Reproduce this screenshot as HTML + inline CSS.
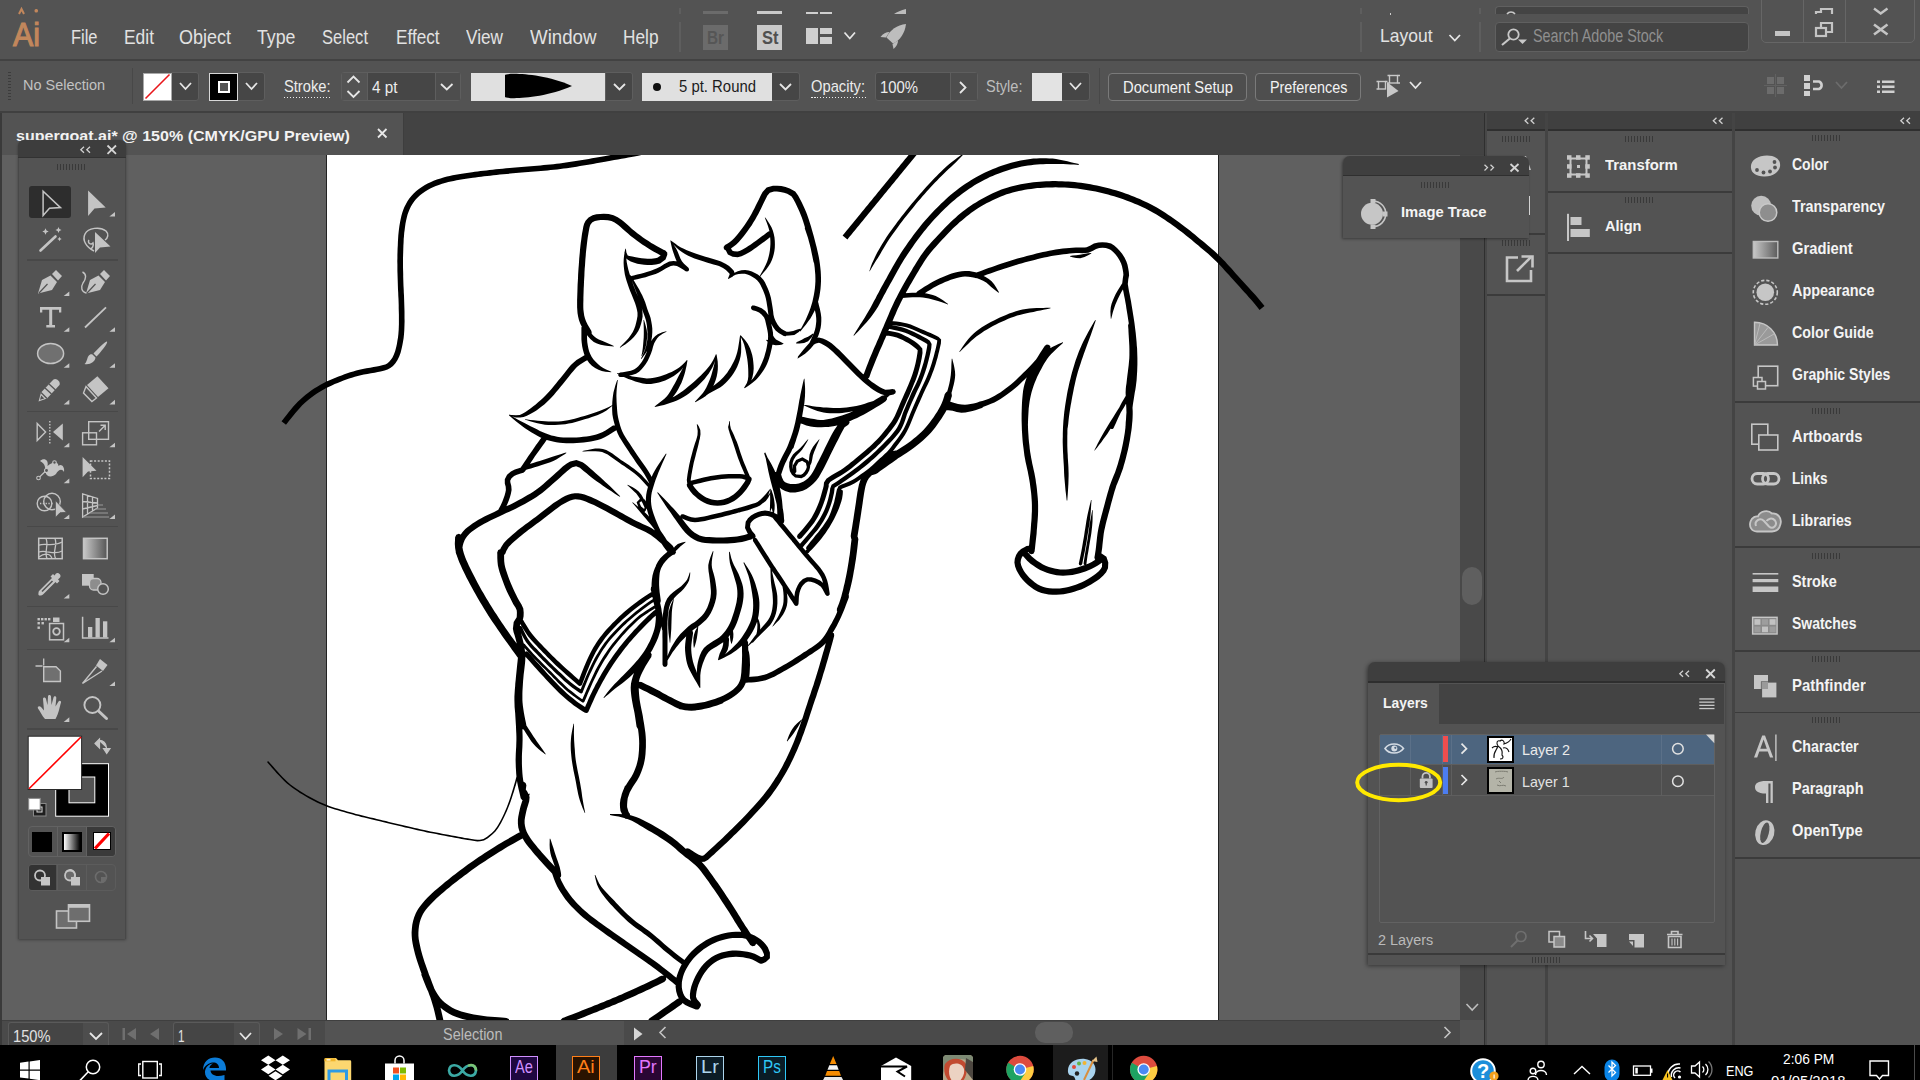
<!DOCTYPE html>
<html>
<head>
<meta charset="utf-8">
<title>supergoat.ai</title>
<style>
*{box-sizing:border-box;margin:0;padding:0}
html,body{width:1920px;height:1080px;overflow:hidden;background:#535353;font-family:"Liberation Sans",sans-serif;color:#dcdcdc}
.a{position:absolute}
#root{position:relative;width:1920px;height:1080px;overflow:hidden;background:#535353}
.t{position:absolute;white-space:nowrap;line-height:1}
.menu .t{font-size:18.5px;top:28px;color:#e0e0e0}
.ctl .t{font-size:15.5px;color:#dedede}
.fld{position:absolute;background:#464646;border:1px solid #616161;border-radius:3px}
.btn{position:absolute;border:1px solid #767676;border-radius:4px;background:#4b4b4b;font-size:15.5px;color:#f0f0f0;text-align:center;line-height:26px}
svg{position:absolute;overflow:visible}
.grip{position:absolute;height:6px;width:29px;background:repeating-linear-gradient(90deg,#3a3a3a 0 1px,transparent 1px 3px)}
.pl{position:absolute;font-weight:bold;font-size:15px;color:#f2f2f2;white-space:nowrap;line-height:1}
</style>
</head>
<body>
<div id="root">

<!-- ===== MENU BAR ===== -->
<div class="a menu" id="menubar" style="left:0;top:0;width:1920px;height:61px;background:#535353;border-bottom:2px solid #424242">
<span class="t" style="left:13.0px;top:17.9px;font-size:33.19px;color:#c2875c;transform:scaleX(0.915);transform-origin:0 0;-webkit-text-stroke:1.1px #c2875c;">Ai</span>
<svg style="left:0;top:0" width="1" height="1"><path d="M19 14 L21.5 9 L24 14" fill="none" stroke="#c2875c" stroke-width="2"/><rect x="34.5" y="9" width="3.5" height="3.5" rx="1.5" fill="#c2875c"/></svg>
<span class="t" style="left:71.0px;top:27.8px;font-size:19.77px;color:#e2e2e2;transform:scaleX(0.832);transform-origin:0 0;">File</span>
<span class="t" style="left:124.0px;top:27.8px;font-size:19.77px;color:#e2e2e2;transform:scaleX(0.880);transform-origin:0 0;">Edit</span>
<span class="t" style="left:179.0px;top:27.8px;font-size:19.77px;color:#e2e2e2;transform:scaleX(0.910);transform-origin:0 0;">Object</span>
<span class="t" style="left:257.0px;top:27.8px;font-size:19.77px;color:#e2e2e2;transform:scaleX(0.898);transform-origin:0 0;">Type</span>
<span class="t" style="left:322.0px;top:27.8px;font-size:19.77px;color:#e2e2e2;transform:scaleX(0.837);transform-origin:0 0;">Select</span>
<span class="t" style="left:395.5px;top:27.8px;font-size:19.77px;color:#e2e2e2;transform:scaleX(0.867);transform-origin:0 0;">Effect</span>
<span class="t" style="left:466.0px;top:27.8px;font-size:19.77px;color:#e2e2e2;transform:scaleX(0.870);transform-origin:0 0;">View</span>
<span class="t" style="left:530.0px;top:27.8px;font-size:19.77px;color:#e2e2e2;transform:scaleX(0.946);transform-origin:0 0;">Window</span>
<span class="t" style="left:622.5px;top:27.8px;font-size:19.77px;color:#e2e2e2;transform:scaleX(0.873);transform-origin:0 0;">Help</span>
<div class="a" style="left:678.5px;top:22.0px;width:2.0px;height:30.0px;background:#5e5e5e;"></div>
<div class="a" style="left:678.5px;top:8.0px;width:2.0px;height:6.0px;background:#5e5e5e;"></div>
<div class="a" style="left:1360.0px;top:22.0px;width:2.0px;height:30.0px;background:#5e5e5e;"></div>
<div class="a" style="left:1360.0px;top:8.0px;width:2.0px;height:6.0px;background:#5e5e5e;"></div>
<div class="a" style="left:1479.0px;top:22.0px;width:2.0px;height:30.0px;background:#5e5e5e;"></div>
<div class="a" style="left:1479.0px;top:8.0px;width:2.0px;height:6.0px;background:#5e5e5e;"></div>
<div class="a" style="left:703.0px;top:25.0px;width:24.5px;height:24.5px;background:#6b6b6b;"></div>
<span class="t" style="left:707.0px;top:29.0px;font-size:18.36px;font-weight:bold;color:#565656;transform:scaleX(0.833);transform-origin:0 0;">Br</span>
<div class="a" style="left:703.0px;top:10.5px;width:24.5px;height:3.5px;background:#6b6b6b;"></div>
<div class="a" style="left:757.0px;top:25.0px;width:25.0px;height:24.5px;background:#c9c9c9;"></div>
<span class="t" style="left:761.5px;top:29.0px;font-size:18.36px;font-weight:bold;color:#505050;transform:scaleX(0.899);transform-origin:0 0;">St</span>
<div class="a" style="left:757.0px;top:10.5px;width:25.0px;height:3.5px;background:#c9c9c9;"></div>
<div class="a" style="left:806.0px;top:27.5px;width:11.5px;height:16.5px;background:#cfcfcf;"></div>
<div class="a" style="left:819.5px;top:27.5px;width:12.5px;height:6.5px;background:#cfcfcf;"></div>
<div class="a" style="left:819.5px;top:36.5px;width:12.5px;height:7.5px;background:#cfcfcf;"></div>
<div class="a" style="left:806.0px;top:11.5px;width:11.5px;height:2.5px;background:#cfcfcf;"></div>
<div class="a" style="left:819.5px;top:11.5px;width:12.5px;height:2.5px;background:#cfcfcf;"></div>
<svg style="left:0;top:0" width="1" height="1"><path d="M844.5 32.5 L849.8 38.5 L855.0 32.5" fill="none" stroke="#e6e6e6" stroke-width="1.8"/></svg>
<svg style="left:0;top:0" width="1" height="1"><g fill="#bdbdbd"><path d="M906 24 C897 25 890 30 886.5 37.5 L893 43.5 C900 40.5 905 33 906 24 Z"/><path d="M880.5 37 C883 33.5 886 32 889.5 32 L886 37.5 Z"/><path d="M893.5 49 C896.5 46.5 898 43.5 898 40.5 L892.5 44 Z"/><path d="M906 9 C901 10 897 12 894 14 L906 14 Z"/></g></svg>
<span class="t" style="left:1380.0px;top:26.4px;font-size:19.07px;color:#e2e2e2;transform:scaleX(0.917);transform-origin:0 0;">Layout</span>
<div class="a" style="left:1389.5px;top:13.0px;width:1.5px;height:1.5px;background:#cfcfcf;"></div>
<svg style="left:0;top:0" width="1" height="1"><path d="M1449.5 35.0 L1454.8 40.5 L1460.0 35.0" fill="none" stroke="#e6e6e6" stroke-width="1.8"/></svg>
<div class="a" style="left:1494.5px;top:22.0px;width:254.5px;height:30.0px;background:#444444;border:1px solid #606060;border-radius:4px"></div>
<div class="a" style="left:1494.5px;top:6.0px;width:254.5px;height:8.0px;background:#444444;border:1px solid #606060;border-bottom:none;border-radius:4px 4px 0 0"></div>
<svg style="left:0;top:0" width="1" height="1"><circle cx="1513.5" cy="34.5" r="5.2" fill="none" stroke="#c8c8c8" stroke-width="1.8"/><path d="M1509.8 38.5 L1502 45" stroke="#c8c8c8" stroke-width="2.2"/><path d="M1518 39.5 L1527 39.5 L1522.5 44 Z" fill="#c8c8c8"/><path d="M1507 14 A5 5 0 0 1 1515 14" fill="none" stroke="#c8c8c8" stroke-width="1.6"/></svg>
<span class="t" style="left:1532.5px;top:27.6px;font-size:17.66px;color:#8f8f8f;transform:scaleX(0.813);transform-origin:0 0;">Search Adobe Stock</span>
<div class="a" style="left:1761.0px;top:-4.0px;width:153.5px;height:46.5px;background:transparent;border:1px solid #666;border-radius:0 0 5px 5px"></div>
<div class="a" style="left:1803.0px;top:0.0px;width:1.0px;height:42.0px;background:#666;"></div>
<div class="a" style="left:1844.5px;top:0.0px;width:1.0px;height:42.0px;background:#666;"></div>
<div class="a" style="left:1775.0px;top:30.5px;width:15.0px;height:5.5px;background:#c4c4c4;"></div>
<svg style="left:0;top:0" width="1" height="1"><g fill="none" stroke="#c4c4c4" stroke-width="2.2"><rect x="1816" y="28" width="10" height="8"/><path d="M1821 27 V23 H1832 V32 H1827"/><path d="M1816 14 V12 H1821 V9 H1832 V14"/><path d="M1874 24.5 L1887.5 34.5 M1887.5 24.5 L1874 34.5" stroke-width="2.6"/><path d="M1874 8.5 L1880.7 13.5 L1887.5 8.5" stroke-width="2.4"/></g></svg>
</div>

<!-- ===== CONTROL BAR ===== -->
<div class="a ctl" id="ctlbar" style="left:0;top:62px;width:1920px;height:51px;background:#535353;border-bottom:2px solid #404040">
<div class="a" style="left:8px;top:10px;width:3px;height:29px;background:repeating-linear-gradient(180deg,#3c3c3c 0 1px,transparent 1px 3px)"></div>
<span class="t" style="left:23.0px;top:14.8px;font-size:15.54px;color:#c2c2c2;transform:scaleX(0.931);transform-origin:0 0;">No Selection</span>
<div class="a" style="left:132.0px;top:6.0px;width:1.0px;height:36.0px;background:#484848;"></div>
<div class="a" style="left:171.0px;top:10.0px;width:28.0px;height:29.0px;background:#464646;border:1px solid #5e5e5e;border-radius:0 3px 3px 0"></div>
<div class="a" style="left:143.0px;top:10.5px;width:28.5px;height:28.0px;background:#ffffff;border:1px solid #a9a9a9"></div>
<svg style="left:0;top:0" width="1" height="1"><path d="M145.5 36.5 L169.5 12.5" stroke="#e8161b" stroke-width="1.6"/></svg>
<svg style="left:0;top:0" width="1" height="1"><path d="M180.0 21.0 L185.5 27.0 L191.0 21.0" fill="none" stroke="#e6e6e6" stroke-width="1.8"/></svg>
<div class="a" style="left:237.0px;top:10.0px;width:28.0px;height:29.0px;background:#464646;border:1px solid #5e5e5e;border-radius:0 3px 3px 0"></div>
<div class="a" style="left:209.0px;top:10.5px;width:28.5px;height:28.0px;background:#000;border:1px solid #d8d8d8"></div>
<div class="a" style="left:218.0px;top:19.0px;width:11.5px;height:11.5px;background:#555;border:2px solid #fff"></div>
<svg style="left:0;top:0" width="1" height="1"><path d="M246.0 21.0 L251.5 27.0 L257.0 21.0" fill="none" stroke="#e6e6e6" stroke-width="1.8"/></svg>
<span class="t" style="left:284.0px;top:16.7px;font-size:16.95px;color:#ececec;transform:scaleX(0.866);transform-origin:0 0;">Stroke:</span>
<div class="a" style="left:284px;top:34.5px;width:47px;height:1.5px;background:repeating-linear-gradient(90deg,#ececec 0 1.5px,transparent 1.5px 3px)"></div>
<div class="a" style="left:340.5px;top:10.0px;width:120.5px;height:28.5px;background:#464646;border:1px solid #5e5e5e;border-radius:3px"></div>
<div class="a" style="left:341.5px;top:11.0px;width:25.5px;height:26.5px;background:#535353;"></div>
<div class="a" style="left:367.0px;top:11.0px;width:1.0px;height:26.5px;background:#5e5e5e;"></div>
<div class="a" style="left:434.5px;top:11.0px;width:1.0px;height:26.5px;background:#5e5e5e;"></div>
<div class="a" style="left:435.5px;top:11.0px;width:24.5px;height:26.5px;background:#4d4d4d;"></div>
<svg style="left:0;top:0" width="1" height="1"><path d="M347.5 20.5 L353.5 14.5 L359.5 20.5" fill="none" stroke="#e6e6e6" stroke-width="1.8"/></svg>
<svg style="left:0;top:0" width="1" height="1"><path d="M347.5 29.0 L353.5 35.0 L359.5 29.0" fill="none" stroke="#e6e6e6" stroke-width="1.8"/></svg>
<span class="t" style="left:372.0px;top:16.8px;font-size:16.24px;color:#ececec;transform:scaleX(0.941);transform-origin:0 0;">4 pt</span>
<svg style="left:0;top:0" width="1" height="1"><path d="M441.0 22.0 L446.8 27.5 L452.5 22.0" fill="none" stroke="#e6e6e6" stroke-width="1.8"/></svg>
<div class="a" style="left:605.0px;top:10.0px;width:28.0px;height:29.0px;background:#464646;border:1px solid #5e5e5e;border-radius:0 3px 3px 0"></div>
<div class="a" style="left:471.0px;top:10.5px;width:134.0px;height:28.0px;background:#e0e0e0;"></div>
<svg style="left:0;top:0" width="1" height="1"><path d="M505 13.0 C505 11.0 540 10.0 572 24.0 C540 38.0 505 37.0 505 35.0 Z" fill="#000"/></svg>
<svg style="left:0;top:0" width="1" height="1"><path d="M614.0 22.0 L619.5 27.5 L625.0 22.0" fill="none" stroke="#e6e6e6" stroke-width="1.8"/></svg>
<div class="a" style="left:771.0px;top:10.0px;width:28.5px;height:29.0px;background:#464646;border:1px solid #5e5e5e;border-radius:0 3px 3px 0"></div>
<div class="a" style="left:642.0px;top:10.5px;width:129.5px;height:28.0px;background:#e0e0e0;"></div>
<svg style="left:0;top:0" width="1" height="1"><circle cx="657" cy="25.0" r="4" fill="#111"/></svg>
<span class="t" style="left:679.0px;top:16.7px;font-size:16.95px;color:#1c1c1c;transform:scaleX(0.879);transform-origin:0 0;">5 pt. Round</span>
<svg style="left:0;top:0" width="1" height="1"><path d="M780.0 22.0 L785.5 27.5 L791.0 22.0" fill="none" stroke="#e6e6e6" stroke-width="1.8"/></svg>
<span class="t" style="left:811.0px;top:16.7px;font-size:16.95px;color:#ececec;transform:scaleX(0.869);transform-origin:0 0;">Opacity:</span>
<div class="a" style="left:811px;top:34.5px;width:55px;height:1.5px;background:repeating-linear-gradient(90deg,#ececec 0 1.5px,transparent 1.5px 3px)"></div>
<div class="a" style="left:874.5px;top:10.0px;width:103.0px;height:28.5px;background:#464646;border:1px solid #5e5e5e;border-radius:3px"></div>
<div class="a" style="left:950.0px;top:11.0px;width:1.0px;height:26.5px;background:#5e5e5e;"></div>
<div class="a" style="left:951.0px;top:11.0px;width:26.0px;height:26.5px;background:#4d4d4d;"></div>
<span class="t" style="left:879.5px;top:16.8px;font-size:16.24px;color:#ececec;transform:scaleX(0.915);transform-origin:0 0;">100%</span>
<svg style="left:0;top:0" width="1" height="1"><path d="M960 20.0 L965.5 25.5 L960 31.0" fill="none" stroke="#e6e6e6" stroke-width="1.8"/></svg>
<span class="t" style="left:986.0px;top:16.7px;font-size:16.95px;color:#bdbdbd;transform:scaleX(0.861);transform-origin:0 0;">Style:</span>
<div class="a" style="left:1061.0px;top:10.0px;width:28.5px;height:29.0px;background:#464646;border:1px solid #5e5e5e;border-radius:0 3px 3px 0"></div>
<div class="a" style="left:1032.0px;top:10.5px;width:29.5px;height:28.0px;background:#e3e3e3;"></div>
<svg style="left:0;top:0" width="1" height="1"><path d="M1070.0 21.0 L1075.5 27.0 L1081.0 21.0" fill="none" stroke="#e6e6e6" stroke-width="1.8"/></svg>
<div class="a" style="left:1098.5px;top:6.0px;width:1.0px;height:36.0px;background:#484848;"></div>
<div class="a" style="left:1108.0px;top:10.5px;width:139.0px;height:28.0px;background:#4e4e4e;border:1px solid #7a7a7a;border-radius:4px"></div>
<span class="t" style="left:1122.5px;top:17.3px;font-size:16.24px;color:#f2f2f2;transform:scaleX(0.909);transform-origin:0 0;">Document Setup</span>
<div class="a" style="left:1255.0px;top:10.5px;width:106.0px;height:28.0px;background:#4e4e4e;border:1px solid #7a7a7a;border-radius:4px"></div>
<span class="t" style="left:1269.5px;top:17.3px;font-size:16.24px;color:#f2f2f2;transform:scaleX(0.885);transform-origin:0 0;">Preferences</span>
<svg style="left:0;top:0" width="1" height="1"><g fill="none" stroke="#c8c8c8" stroke-width="1.4"><rect x="1389.5" y="13.5" width="8" height="7.5"/><path d="M1387.5 13.5 h2 M1397.5 13.5 h2.5 M1387.5 21.0 h2 M1397.5 21.0 h2.5"/><rect x="1378.500" y="19.5" width="7" height="7.5"/><path d="M1376.5 19.5 h2 M1376.5 27.0 h2 M1385.5 19.5 h2"/></g><path d="M1387 20.0 L1387 35.5 L1398.500 29.0 Z" fill="#c8c8c8"/></svg>
<svg style="left:0;top:0" width="1" height="1"><path d="M1410.0 20.0 L1415.5 26.0 L1421.0 20.0" fill="none" stroke="#e6e6e6" stroke-width="1.8"/></svg>
<svg style="left:0;top:0" width="1" height="1"><g fill="#6c6c6c"><rect x="1767" y="15.0" width="7" height="7"/><rect x="1777" y="15.0" width="7" height="7"/><rect x="1767" y="25.0" width="7" height="7"/><rect x="1777" y="25.0" width="7" height="7"/></g><path d="M1775.500 12.0 V35.0 M1764 23.5 H1787" stroke="#616161" stroke-width="1"/></svg>
<svg style="left:0;top:0" width="1" height="1"><g fill="#d0d0d0"><rect x="1804" y="13.0" width="6" height="6"/><rect x="1804" y="21.0" width="6" height="6"/><rect x="1804" y="29.0" width="6" height="5"/></g><path d="M1813 19.5 H1819 A4 4 0 0 1 1819 27.0 H1813" fill="none" stroke="#d0d0d0" stroke-width="2.6"/></svg>
<svg style="left:0;top:0" width="1" height="1"><path d="M1836.0 20.0 L1841.5 26.0 L1847.0 20.0" fill="none" stroke="#6c6c6c" stroke-width="1.8"/></svg>
<svg style="left:0;top:0" width="1" height="1"><g fill="#d0d0d0"><rect x="1877" y="18.5" width="3" height="2.5"/><rect x="1882" y="18.5" width="12.5" height="2.5"/><rect x="1877" y="23.5" width="3" height="2.5"/><rect x="1882" y="23.5" width="12.5" height="2.5"/><rect x="1877" y="28.5" width="3" height="2.5"/><rect x="1882" y="28.5" width="12.5" height="2.5"/></g></svg>
</div>

<!-- ===== TAB BAR ===== -->
<div class="a" id="tabbar" style="left:0;top:113px;width:1486px;height:42px;background:#434343">
<div class="a" style="left:0.0px;top:0.0px;width:404.0px;height:42.0px;background:#535353;border-left:1px solid #3a3a3a;border-right:1px solid #3e3e3e"></div>
<span class="t" style="left:16.0px;top:14.8px;font-size:15.54px;font-weight:bold;color:#f2f2f2;transform:scaleX(1.033);transform-origin:0 0;">supergoat.ai* @ 150% (CMYK/GPU Preview)</span>
<svg style="left:0;top:0" width="1" height="1"><path d="M378 16.0 L386.5 24.5 M386.5 16.0 L378 24.5" stroke="#e8e8e8" stroke-width="1.8"/></svg>
</div>

<!-- ===== CANVAS ===== -->
<div class="a" id="canvas" style="left:0;top:155px;width:1460px;height:865px;background:#606060;overflow:hidden">
<div class="a" style="left:326px;top:0;width:893px;height:865px;background:#fff;border-left:1px solid #222;border-right:1px solid #222"></div>
<svg style="left:0;top:0" width="1460" height="865" viewBox="0 155 1460 865"><path fill="#000" d="M642.0 149.2 640.3 149.5 638.3 149.9 635.9 150.4 633.3 150.9 630.4 151.4 627.3 152.0 624.0 152.6 620.5 153.3 616.9 153.9 613.2 154.6 609.5 155.2 606.9 155.7 604.1 156.2 601.2 156.7 598.2 157.2 595.2 157.8 592.0 158.3 588.8 158.9 585.6 159.4 582.3 160.0 579.1 160.5 575.8 161.1 572.5 161.6 569.2 162.1 566.0 162.6 562.8 163.0 559.6 163.4 556.5 163.8 553.4 164.2 550.2 164.5 546.9 164.8 543.7 165.1 540.5 165.4 537.2 165.7 534.0 165.9 530.8 166.2 527.6 166.4 524.5 166.7 521.4 166.9 518.4 167.2 515.4 167.4 512.5 167.7 509.7 167.9 506.1 168.3 502.6 168.7 499.2 169.0 495.9 169.3 492.7 169.7 489.5 170.0 486.5 170.4 483.5 170.7 480.5 171.1 477.7 171.4 474.9 171.8 472.1 172.2 468.6 172.7 465.1 173.2 461.8 173.7 458.6 174.2 455.6 174.8 452.6 175.3 449.7 175.9 447.0 176.6 444.2 177.3 440.5 178.4 436.9 179.6 433.6 180.8 430.5 182.2 427.6 183.6 424.9 185.0 421.8 186.9 418.9 188.9 416.3 191.0 413.9 193.2 411.6 195.7 409.5 198.2 407.6 201.0 406.0 203.9 404.4 207.0 403.1 210.3 402.1 213.2 401.3 216.2 400.6 219.4 400.0 222.6 399.4 226.1 398.9 229.7 398.6 232.5 398.3 235.6 398.1 238.7 397.9 242.0 397.8 245.2 397.6 248.5 397.5 251.7 397.4 254.9 397.4 258.1 397.3 261.2 397.4 264.4 397.4 267.5 397.4 270.7 397.5 273.8 397.6 276.9 397.7 280.1 397.8 283.2 397.9 286.4 398.0 289.5 398.2 292.6 398.3 295.8 398.5 298.9 398.6 302.0 398.7 305.1 398.7 308.2 398.8 311.5 398.9 314.7 398.9 318.0 398.9 321.2 398.9 324.2 398.8 327.1 398.7 329.8 398.4 333.8 398.0 337.5 397.4 340.8 396.9 344.0 396.3 346.8 395.2 351.0 393.9 354.5 392.5 357.4 390.9 359.8 389.2 361.8 387.2 363.4 385.3 364.4 383.1 365.1 379.4 366.0 376.8 366.5 373.6 367.1 370.1 367.7 366.4 368.3 362.8 369.0 359.3 369.8 356.2 370.6 353.2 371.4 350.2 372.3 347.3 373.3 344.4 374.3 341.5 375.4 338.5 376.5 335.5 377.7 332.5 378.9 329.5 380.2 326.5 381.6 323.7 383.0 320.4 384.8 317.2 386.7 314.1 388.6 311.2 390.6 308.3 392.7 305.6 394.8 303.0 397.0 300.5 399.2 298.0 401.6 295.4 404.3 293.3 406.6 291.1 409.3 288.8 412.1 286.5 414.9 284.5 417.5 282.8 419.7 281.5 421.2 286.0 424.8 287.2 423.2 288.9 421.0 291.0 418.5 293.2 415.7 295.4 412.9 297.6 410.4 299.6 408.2 302.0 405.6 304.4 403.3 306.7 401.2 309.1 399.3 311.7 397.3 314.4 395.3 317.3 393.3 320.2 391.5 323.2 389.7 326.3 388.0 329.0 386.7 331.8 385.4 334.7 384.1 337.6 382.9 340.6 381.7 343.5 380.6 346.3 379.6 349.1 378.6 351.9 377.7 354.8 376.8 357.7 376.0 360.7 375.2 363.9 374.5 367.4 373.9 371.0 373.3 374.6 372.7 377.8 372.1 380.6 371.5 384.6 370.6 387.5 369.6 390.3 368.1 393.0 365.9 395.4 363.3 397.5 360.1 399.2 356.6 400.6 352.7 401.7 348.2 402.4 345.1 403.0 341.8 403.6 338.2 404.0 334.3 404.3 330.2 404.4 327.3 404.5 324.3 404.6 321.2 404.5 317.9 404.5 314.7 404.5 311.4 404.4 308.1 404.3 304.9 404.2 301.8 404.1 298.6 404.0 295.5 403.8 292.4 403.7 289.2 403.5 286.1 403.4 283.0 403.3 279.9 403.2 276.8 403.2 273.7 403.1 270.6 403.0 267.5 403.0 264.4 403.0 261.3 403.0 258.2 403.1 255.1 403.2 251.9 403.3 248.7 403.4 245.5 403.6 242.3 403.7 239.1 404.0 236.0 404.2 233.1 404.6 230.3 405.0 226.9 405.5 223.6 406.1 220.5 406.8 217.6 407.5 214.8 408.4 212.2 409.6 209.3 410.9 206.5 412.4 204.0 414.1 201.6 415.9 199.3 417.9 197.2 420.0 195.2 422.3 193.4 424.8 191.7 427.6 190.0 430.2 188.6 432.9 187.3 435.8 186.1 438.8 184.9 442.1 183.8 445.8 182.7 448.3 182.1 450.9 181.5 453.7 180.9 456.6 180.3 459.6 179.8 462.7 179.3 466.0 178.8 469.4 178.3 472.9 177.8 475.6 177.4 478.4 177.1 481.2 176.7 484.1 176.3 487.1 176.0 490.2 175.7 493.3 175.3 496.5 175.0 499.8 174.6 503.2 174.3 506.7 173.9 510.3 173.6 513.0 173.3 515.9 173.0 518.8 172.8 521.8 172.5 524.9 172.3 528.1 172.1 531.2 171.8 534.4 171.6 537.7 171.3 540.9 171.0 544.2 170.8 547.5 170.5 550.7 170.1 554.0 169.8 557.2 169.4 560.4 169.1 563.5 168.6 566.8 168.2 570.0 167.7 573.3 167.2 576.7 166.7 580.0 166.1 583.3 165.6 586.6 165.0 589.8 164.4 593.0 163.9 596.2 163.3 599.2 162.8 602.2 162.2 605.1 161.7 607.8 161.2 610.5 160.8 614.2 160.1 617.9 159.5 621.5 158.8 625.0 158.2 628.3 157.6 631.4 157.0 634.3 156.4 637.0 155.9 639.3 155.5 641.4 155.1 643.0 154.8Z M625.3 249.3 624.4 252.7 624.8 257.1 627.5 259.6 630.7 261.4 634.3 262.8 637.3 263.7 640.6 264.3 644.1 264.8 647.5 265.0 651.8 264.9 656.0 264.4 660.1 263.4 665.5 259.5 667.3 254.7 667.2 252.4 665.4 250.8 663.0 251.0 661.4 252.8 660.7 255.5 657.4 257.8 655.1 258.2 651.4 258.7 647.5 258.8 644.7 258.6 641.6 258.2 638.5 257.7 635.7 257.2 632.3 256.6 629.4 256.0 627.7 255.4 626.4 252.5 626.0 249.4Z M665.8 251.0 663.5 249.8 660.3 248.1 656.6 246.1 654.1 244.6 651.3 242.9 648.5 241.1 645.6 239.2 643.0 237.5 640.1 235.3 637.3 233.2 634.6 231.0 632.0 228.9 629.4 226.6 626.9 224.3 624.3 222.0 621.8 220.0 617.7 217.2 613.5 215.2 608.7 214.1 603.8 213.8 600.1 213.9 596.3 214.3 592.6 215.2 588.6 217.4 585.6 220.7 584.1 223.7 583.3 226.8 582.6 230.7 582.1 233.2 581.7 236.1 581.3 239.2 580.8 242.5 580.4 246.1 580.0 249.7 579.8 252.5 579.5 255.5 579.2 258.7 579.0 261.9 578.8 265.1 578.5 268.4 578.3 271.6 578.1 274.8 578.0 278.0 577.8 281.4 577.6 284.8 577.5 288.2 577.4 291.4 577.3 294.5 577.2 297.4 577.1 300.0 577.1 304.0 577.1 307.3 577.3 310.1 577.5 312.9 578.1 316.6 579.0 320.2 580.3 323.7 582.3 327.7 584.5 331.5 586.1 334.1 588.0 335.5 590.4 335.2 591.8 333.2 591.4 330.9 589.8 328.3 587.7 324.7 586.0 321.3 585.0 318.4 584.2 315.4 583.7 312.1 583.4 309.6 583.3 307.1 583.3 304.1 583.4 300.0 583.4 297.5 583.5 294.7 583.6 291.7 583.7 288.4 583.9 285.1 584.0 281.7 584.2 278.4 584.4 275.2 584.5 272.0 584.7 268.8 585.0 265.6 585.2 262.3 585.4 259.2 585.7 256.1 585.9 253.1 586.2 250.3 586.6 246.7 587.0 243.3 587.4 240.0 587.8 237.0 588.3 234.2 588.7 231.8 589.4 228.1 590.0 225.8 590.7 224.3 592.4 222.3 594.9 221.0 597.3 220.4 600.6 220.1 603.7 220.0 607.8 220.2 611.5 221.1 614.6 222.5 618.2 225.0 620.3 226.7 622.7 228.9 625.3 231.3 628.0 233.6 630.7 235.9 633.5 238.1 636.4 240.3 639.5 242.5 642.2 244.4 645.1 246.3 648.1 248.2 650.9 249.9 653.4 251.4 657.3 253.6 660.7 255.4 663.0 256.5 665.3 256.7 667.1 255.2 667.3 252.8Z M581.4 327.5 581.4 329.6 581.4 332.5 581.4 336.0 581.4 339.6 581.7 342.8 582.2 346.4 582.9 349.8 583.8 353.1 584.9 356.2 586.9 359.8 589.2 363.0 591.9 365.7 595.1 367.9 598.5 369.7 601.8 371.0 605.4 371.8 608.8 372.1 611.2 372.3 611.3 371.7 609.1 370.8 606.1 369.6 603.2 368.0 600.5 366.2 597.9 364.1 595.6 361.8 593.5 359.4 591.6 356.8 590.1 353.8 589.1 351.3 588.4 348.5 587.8 345.4 587.3 342.2 587.1 339.3 587.0 335.9 587.0 332.6 587.1 329.6 587.1 327.5 586.3 325.5 584.3 324.7 582.3 325.5Z M582.4 328.8 583.7 330.6 585.6 333.2 587.9 336.3 590.6 339.3 593.8 341.9 597.0 343.5 600.7 344.8 604.6 345.6 608.3 346.1 611.4 346.3 613.7 346.5 613.8 346.0 611.8 345.0 608.9 343.7 605.5 342.2 602.0 340.7 598.8 339.4 596.2 338.1 593.7 336.1 591.4 333.4 589.2 330.6 587.4 328.0 586.1 326.2 584.6 325.3 582.9 325.7 582.0 327.2Z M625.3 248.7 624.7 251.8 624.0 256.2 623.7 259.4 623.6 262.9 623.8 266.5 624.2 270.3 624.8 274.2 625.8 278.2 626.7 281.3 627.8 284.5 628.9 287.7 630.1 290.9 631.4 294.1 632.8 297.4 634.0 300.5 635.1 303.3 636.2 306.8 637.0 310.0 637.5 312.7 637.5 316.0 636.9 319.5 636.2 322.6 635.3 325.9 634.2 329.0 632.8 331.9 631.0 334.7 628.9 337.7 626.7 340.2 624.0 343.0 621.5 345.5 619.8 347.3 620.2 347.7 622.2 346.3 625.2 344.4 628.4 342.1 631.1 339.8 633.9 337.0 636.3 334.1 638.3 331.0 639.9 327.5 641.1 323.8 641.9 320.5 642.6 316.5 642.5 312.3 642.0 308.9 641.1 305.4 639.9 301.7 638.8 298.6 637.5 295.4 636.1 292.2 634.9 289.1 633.7 286.0 632.6 282.8 631.5 279.7 630.5 276.8 629.3 273.1 628.3 269.5 627.5 266.0 626.8 262.6 626.4 259.3 626.0 256.3 625.9 251.9 625.9 248.8Z M629.7 275.1 630.7 277.7 632.2 281.4 633.8 285.6 634.8 288.2 635.9 291.1 637.0 294.1 638.1 297.0 639.1 299.6 640.4 303.6 641.5 307.3 642.6 310.8 643.8 314.0 644.8 316.7 645.7 319.4 646.4 322.4 646.9 325.6 647.2 328.9 647.5 332.5 647.5 336.1 647.3 339.7 646.8 343.0 646.1 346.3 645.1 349.5 643.7 352.9 642.1 356.2 641.0 358.6 641.5 358.9 643.1 356.8 645.3 353.8 647.4 350.5 649.0 347.3 650.4 344.0 651.4 340.3 652.0 336.4 652.3 332.4 652.3 328.6 651.9 324.9 651.3 321.5 650.6 318.1 649.6 315.0 648.5 312.2 647.4 309.2 646.3 305.8 645.1 302.0 643.4 297.9 642.2 295.2 640.7 292.4 639.2 289.6 637.7 286.9 636.2 284.4 633.9 280.6 631.8 277.2 630.3 274.9Z M632.4 280.3 634.7 279.8 638.2 279.0 642.0 278.1 645.6 277.2 649.0 276.1 652.3 275.0 655.6 273.9 658.5 272.7 662.9 270.3 666.1 268.2 670.8 265.9 673.5 265.5 676.9 265.9 679.7 267.4 683.1 269.6 685.6 271.3 687.3 271.6 688.8 270.6 689.1 268.9 688.1 267.5 685.6 265.8 682.0 263.5 678.1 261.6 673.5 261.0 669.2 261.6 663.9 264.3 660.6 266.4 656.5 268.6 653.9 269.6 650.9 270.8 647.6 271.8 644.4 272.8 640.9 273.7 637.2 274.6 633.8 275.4 631.4 275.9 630.0 276.9 629.7 278.6 630.7 280.0Z M688.4 267.7 686.5 266.0 684.0 263.7 681.9 261.2 680.4 258.5 679.1 255.3 677.7 251.7 676.1 248.6 674.1 245.4 672.2 242.5 670.9 240.5 670.4 240.7 670.8 243.1 671.6 246.5 672.5 250.1 673.6 253.3 674.9 256.9 676.3 260.4 678.1 263.8 680.7 266.8 683.5 269.4 685.4 271.1 687.0 271.6 688.6 270.9 689.1 269.2Z M670.4 240.8 671.9 242.5 673.9 245.0 676.4 247.6 679.1 250.1 681.9 252.1 685.0 254.0 688.2 255.7 691.6 257.3 694.5 258.5 697.6 259.6 700.8 260.6 703.9 261.5 706.8 262.4 710.2 263.5 713.5 264.4 716.5 265.2 719.0 266.1 723.0 268.1 725.9 270.1 728.4 272.4 730.0 274.2 731.7 275.0 733.6 274.4 734.4 272.6 733.8 270.8 732.0 268.8 729.1 266.1 725.5 263.7 721.0 261.4 718.1 260.4 714.9 259.5 711.6 258.6 708.2 257.6 705.4 256.7 702.3 255.7 699.2 254.7 696.2 253.7 693.4 252.7 690.1 251.4 686.8 250.2 683.8 248.8 680.9 247.4 678.0 245.7 675.1 243.6 672.6 241.7 670.8 240.4Z M729.9 272.1 729.6 274.6 728.0 278.6 728.3 278.9 732.9 276.6 733.8 272.9 733.5 271.4 732.3 270.6 730.8 270.9Z M728.3 279.0 731.3 276.9 735.5 274.8 738.5 274.1 741.9 273.7 744.9 273.8 747.5 274.5 750.0 275.6 752.6 277.1 755.0 278.6 757.1 280.3 759.2 282.8 760.4 284.8 761.7 287.4 763.0 290.2 764.1 293.1 765.1 295.8 765.9 298.8 766.5 301.8 767.0 304.9 767.5 307.9 768.0 311.7 768.5 315.6 769.5 319.6 771.1 323.5 773.2 327.2 775.6 330.5 778.7 333.0 781.7 334.8 783.8 336.0 785.7 336.2 787.2 335.0 787.4 333.0 786.2 331.5 784.2 330.4 781.6 328.9 779.4 327.0 777.5 324.5 775.7 321.2 774.3 317.9 773.5 314.7 773.1 311.1 772.5 307.1 772.0 304.1 771.5 301.0 770.9 297.7 769.9 294.2 768.9 291.3 767.7 288.2 766.3 285.2 764.9 282.3 763.3 279.7 760.6 276.7 757.8 274.5 754.9 272.9 751.9 271.4 748.6 270.4 745.1 269.9 741.4 270.3 737.8 271.3 734.5 272.7 730.5 275.8 727.9 278.5Z M728.1 250.2 730.1 249.0 733.0 247.1 736.0 244.7 738.8 242.0 741.4 239.1 743.9 235.9 745.8 233.5 747.8 230.8 749.7 228.1 751.6 225.4 753.3 222.6 755.1 219.7 756.7 216.8 758.3 213.9 759.8 211.0 761.3 208.0 762.7 205.1 763.9 202.6 765.9 198.4 767.4 195.5 769.8 192.8 774.0 191.6 776.9 191.6 780.4 192.0 784.1 192.8 787.2 193.8 791.4 196.2 793.0 198.6 795.2 202.6 796.5 205.2 797.9 208.2 799.3 211.3 800.6 214.5 801.9 217.8 803.0 221.1 804.1 224.6 805.3 228.4 806.2 231.5 807.2 234.8 808.1 238.2 809.0 241.7 809.9 245.1 810.8 248.7 811.6 252.7 812.4 256.6 813.1 260.0 813.6 262.3 814.9 264.2 817.2 264.6 819.1 263.4 819.5 261.1 819.0 258.7 818.3 255.4 817.5 251.5 816.6 247.4 815.7 243.7 814.8 240.2 813.9 236.7 812.9 233.2 811.9 229.8 811.0 226.6 809.8 222.8 808.7 219.2 807.5 215.7 806.2 212.3 804.8 209.0 803.3 205.7 801.8 202.6 800.5 199.9 798.1 195.4 795.2 191.6 789.7 188.4 785.6 187.1 781.4 186.1 777.2 185.7 772.9 185.7 766.7 187.6 762.6 192.0 760.6 195.7 758.6 199.9 757.3 202.5 755.9 205.3 754.5 208.2 753.0 211.1 751.5 213.9 749.9 216.7 748.2 219.4 746.6 222.1 744.8 224.7 743.0 227.3 741.1 229.8 739.2 232.2 736.8 235.2 734.4 238.0 732.1 240.3 729.6 242.2 726.9 243.9 725.0 245.1 723.6 247.0 724.0 249.2 725.9 250.6Z M725.0 248.8 727.9 254.4 732.6 256.8 737.7 257.2 741.5 256.2 745.2 254.5 748.9 252.4 751.4 250.9 754.1 249.1 756.7 247.2 759.3 245.3 761.7 243.5 764.6 241.4 767.5 239.2 770.0 237.3 771.7 236.0 772.8 234.1 772.3 232.0 770.4 231.0 768.3 231.5 766.6 232.8 764.1 234.7 761.2 236.8 758.3 239.0 756.0 240.7 753.4 242.6 750.8 244.4 748.3 246.1 746.1 247.6 742.6 249.5 739.6 250.9 737.3 251.6 734.0 251.3 732.1 250.6 730.0 246.2 728.4 244.8 726.2 245.0 724.8 246.6Z M764.8 217.6 765.5 219.6 766.6 222.3 767.8 225.4 768.8 228.7 769.6 231.7 770.0 234.7 770.2 237.9 770.4 241.1 770.4 244.3 770.2 247.3 769.9 250.3 769.4 253.2 768.8 256.1 768.0 258.9 767.1 261.7 765.8 264.8 764.2 268.1 762.4 271.3 760.8 274.1 759.8 276.1 760.2 276.4 761.7 274.7 763.8 272.3 766.2 269.4 768.5 266.3 770.4 263.3 771.8 260.3 772.9 257.2 773.8 254.1 774.4 250.9 774.8 247.7 774.9 244.3 774.8 240.9 774.5 237.4 773.8 234.0 772.9 230.8 771.6 227.6 769.9 224.4 768.0 221.5 766.4 219.1 765.2 217.4Z M804.8 228.4 805.5 230.6 806.5 233.6 807.7 237.1 808.9 240.9 810.1 244.7 811.0 248.2 811.8 251.5 812.5 254.8 813.2 258.2 813.8 261.5 814.3 264.7 814.7 267.8 815.0 271.4 815.3 274.8 815.4 278.2 815.4 281.5 815.2 284.8 814.9 288.2 814.4 291.7 813.8 295.2 813.1 298.5 812.4 301.7 811.5 304.8 810.6 307.8 809.5 310.8 808.3 313.7 807.1 316.6 805.7 319.8 804.0 323.1 802.3 326.3 800.8 329.1 799.7 331.1 800.3 331.4 801.7 329.7 803.7 327.3 806.0 324.4 808.3 321.3 810.4 318.4 812.1 315.5 813.7 312.6 815.1 309.7 816.5 306.5 817.6 303.3 818.6 299.8 819.4 296.2 820.0 292.5 820.5 288.9 820.8 285.2 821.0 281.6 821.0 278.1 820.9 274.5 820.7 270.9 820.3 267.2 819.9 263.9 819.4 260.6 818.8 257.1 818.1 253.7 817.3 250.2 816.5 246.8 815.5 243.2 814.3 239.3 813.1 235.4 811.9 231.8 810.9 228.8 810.2 226.6 808.8 225.0 806.6 224.8 805.0 226.2Z M785.1 335.7 789.1 335.6 794.3 334.9 798.8 332.1 801.4 328.9 801.1 328.6 797.3 329.6 793.2 331.1 788.7 331.7 784.9 331.8 783.6 332.4 783.0 333.8 783.6 335.2Z M766.1 340.2 768.3 342.4 772.0 344.6 775.7 345.2 779.7 345.0 782.5 344.5 782.5 344.0 779.9 343.0 776.2 341.9 773.0 341.4 769.2 340.5 766.4 339.8Z M796.3 342.7 799.1 343.2 803.1 342.8 806.1 341.1 808.6 338.5 810.1 336.4 809.9 336.1 807.4 336.9 804.3 338.3 801.9 339.7 798.7 341.2 796.2 342.3Z M912.6 150.0 910.7 152.4 908.7 154.8 906.8 157.2 904.8 159.5 902.9 161.9 900.9 164.3 899.0 166.7 897.0 169.0 895.1 171.4 893.2 173.8 891.2 176.2 889.3 178.5 887.3 180.9 885.4 183.3 883.4 185.7 881.5 188.0 879.5 190.4 877.6 192.8 875.7 195.2 873.7 197.5 871.8 199.9 869.8 202.3 867.9 204.7 865.9 207.0 864.0 209.4 862.0 211.8 860.1 214.2 858.2 216.5 856.2 218.9 854.3 221.3 852.3 223.7 850.4 226.0 848.4 228.4 846.5 230.8 844.5 233.2 842.6 235.5 847.4 239.5 849.3 237.1 851.3 234.7 853.2 232.3 855.2 230.0 857.1 227.6 859.1 225.2 861.0 222.8 863.0 220.5 864.9 218.1 866.8 215.7 868.8 213.3 870.7 211.0 872.7 208.6 874.6 206.2 876.6 203.8 878.5 201.5 880.5 199.1 882.4 196.7 884.3 194.3 886.3 192.0 888.2 189.6 890.2 187.2 892.1 184.8 894.1 182.5 896.0 180.1 898.0 177.7 899.9 175.3 901.8 173.0 903.8 170.6 905.7 168.2 907.7 165.8 909.6 163.5 911.6 161.1 913.5 158.7 915.5 156.3 917.4 154.0Z M964.9 152.3 963.4 153.4 961.6 154.7 959.4 156.2 957.0 158.0 954.5 159.9 951.8 162.0 949.0 164.3 946.4 166.6 943.7 169.1 941.2 171.5 938.8 173.8 936.7 175.9 934.6 178.1 932.5 180.2 930.4 182.5 928.3 184.7 926.2 187.0 924.2 189.3 922.1 191.7 920.0 194.0 917.9 196.5 915.8 198.9 913.7 201.4 911.7 203.8 909.7 206.2 907.7 208.8 905.7 211.3 903.6 213.9 901.5 216.6 899.5 219.2 897.5 221.8 895.6 224.4 893.7 226.9 891.9 229.4 890.2 231.8 888.6 234.0 886.4 237.2 884.4 240.4 882.5 243.5 880.7 246.5 879.0 249.4 877.5 252.1 876.1 254.7 874.9 257.2 873.9 259.4 872.0 263.6 870.7 266.9 869.9 269.4 869.3 271.2 869.7 271.3 870.6 269.7 871.9 267.5 873.7 264.5 876.1 260.6 877.5 258.6 878.9 256.3 880.4 253.8 881.9 251.1 883.6 248.2 885.4 245.3 887.2 242.2 889.3 239.1 891.4 236.0 893.0 233.7 894.7 231.4 896.5 228.9 898.3 226.4 900.2 223.8 902.2 221.2 904.2 218.6 906.3 216.0 908.3 213.4 910.3 210.9 912.4 208.4 914.4 205.9 916.3 203.6 918.4 201.1 920.5 198.7 922.5 196.3 924.6 193.9 926.7 191.6 928.8 189.3 930.8 187.0 932.9 184.8 935.0 182.6 937.1 180.4 939.1 178.3 941.2 176.2 943.5 173.9 946.0 171.5 948.6 169.1 951.2 166.7 953.8 164.3 956.2 161.9 958.5 159.6 960.5 157.5 962.4 155.6 963.9 154.0 965.1 152.7Z M1078.8 164.1 1076.8 163.6 1074.1 163.0 1070.9 162.2 1067.4 161.3 1063.6 160.5 1059.8 159.7 1056.1 159.1 1052.6 158.6 1049.4 158.4 1046.2 158.2 1043.0 158.2 1039.8 158.2 1036.6 158.4 1033.4 158.6 1030.2 159.0 1027.0 159.4 1023.8 159.9 1020.6 160.5 1017.4 161.2 1014.2 162.0 1011.1 162.8 1007.9 163.7 1004.7 164.7 1001.5 165.8 998.6 166.8 995.8 167.9 993.0 169.0 990.2 170.2 987.3 171.5 984.5 172.8 981.6 174.2 978.8 175.7 976.0 177.3 973.4 178.8 970.9 180.3 968.3 181.9 965.8 183.6 963.2 185.3 960.7 187.1 958.1 189.0 955.6 191.0 953.0 193.0 950.5 195.1 948.2 197.1 945.8 199.2 943.5 201.4 941.2 203.6 938.8 205.9 936.5 208.2 934.2 210.6 931.9 213.0 929.6 215.5 927.4 217.9 925.1 220.5 923.1 222.8 921.1 225.2 919.2 227.7 917.2 230.2 915.2 232.8 913.3 235.3 911.4 237.9 909.5 240.5 907.7 243.1 905.9 245.7 904.1 248.2 902.4 250.8 900.6 253.6 898.8 256.4 897.1 259.2 895.5 261.9 893.9 264.7 892.3 267.5 890.8 270.3 889.2 273.0 887.7 275.7 886.3 278.4 884.8 281.0 883.2 283.9 881.6 286.8 880.0 289.8 878.5 292.7 876.9 295.6 875.5 298.4 874.0 301.1 872.6 303.7 871.3 306.2 870.1 308.5 868.3 311.6 866.5 314.6 864.8 317.4 863.2 320.0 861.6 322.4 860.2 324.6 858.9 326.7 856.5 330.6 854.7 333.4 853.5 335.3 854.0 335.7 855.6 334.1 857.9 331.7 861.1 328.3 862.7 326.5 864.5 324.6 866.4 322.4 868.5 320.0 870.6 317.4 872.8 314.6 874.9 311.5 876.4 309.2 878.0 306.7 879.5 304.0 880.9 301.3 882.4 298.5 883.9 295.6 885.5 292.7 887.0 289.8 888.6 286.9 890.2 284.0 891.7 281.4 893.2 278.7 894.7 276.0 896.2 273.3 897.7 270.6 899.3 267.8 900.8 265.1 902.5 262.3 904.1 259.6 905.8 256.9 907.6 254.2 909.3 251.7 911.0 249.2 912.8 246.7 914.6 244.1 916.4 241.6 918.3 239.0 920.2 236.5 922.1 234.0 924.0 231.6 926.0 229.2 927.9 226.8 929.9 224.5 932.0 222.1 934.2 219.6 936.4 217.2 938.6 214.9 940.9 212.6 943.2 210.3 945.5 208.1 947.7 205.9 950.0 203.8 952.3 201.8 954.5 199.9 957.0 197.8 959.4 195.9 961.9 194.0 964.3 192.2 966.8 190.4 969.2 188.8 971.7 187.2 974.1 185.6 976.6 184.1 979.0 182.7 981.8 181.2 984.5 179.7 987.2 178.4 989.9 177.1 992.6 175.9 995.3 174.8 998.1 173.7 1000.8 172.7 1003.5 171.7 1006.6 170.7 1009.6 169.7 1012.7 168.8 1015.8 168.0 1018.8 167.3 1021.9 166.6 1024.9 166.1 1028.0 165.6 1031.0 165.2 1034.0 164.8 1037.0 164.6 1040.1 164.3 1043.1 164.2 1046.2 164.0 1049.3 163.9 1052.4 163.9 1055.7 163.9 1059.4 163.9 1063.2 164.1 1067.0 164.3 1070.6 164.5 1073.9 164.6 1076.6 164.8 1078.7 164.9Z M1264.5 306.1 1262.9 304.0 1260.4 300.9 1256.9 296.7 1255.2 294.8 1253.3 292.7 1251.2 290.4 1249.0 288.0 1246.7 285.5 1244.4 282.9 1242.1 280.4 1239.8 277.9 1237.8 275.7 1235.7 273.4 1233.6 271.0 1231.5 268.6 1229.3 266.2 1227.2 263.9 1225.1 261.6 1223.0 259.4 1220.9 257.3 1218.5 254.9 1216.3 252.8 1214.1 250.8 1212.0 248.9 1209.7 247.0 1207.3 244.9 1204.5 242.6 1202.3 240.8 1200.0 238.9 1197.6 236.9 1195.1 234.8 1192.5 232.7 1189.9 230.6 1187.2 228.5 1184.5 226.4 1181.9 224.4 1179.3 222.5 1176.5 220.5 1173.7 218.5 1170.9 216.6 1168.1 214.7 1165.3 212.8 1162.5 211.0 1159.7 209.3 1156.8 207.6 1154.0 206.0 1151.2 204.5 1148.3 203.1 1145.5 201.7 1142.7 200.4 1139.8 199.1 1137.0 197.9 1134.2 196.8 1131.4 195.7 1128.6 194.6 1125.4 193.4 1122.2 192.3 1119.1 191.3 1115.9 190.3 1112.7 189.4 1109.5 188.6 1106.4 187.8 1103.2 187.0 1100.1 186.2 1096.9 185.5 1093.7 184.9 1090.6 184.3 1087.4 183.8 1084.2 183.3 1081.0 182.8 1077.9 182.4 1074.7 182.1 1071.5 181.8 1068.3 181.5 1065.2 181.4 1062.0 181.2 1058.8 181.2 1055.6 181.1 1052.5 181.1 1049.3 181.2 1046.1 181.3 1042.9 181.5 1039.8 181.7 1036.6 182.0 1033.4 182.3 1030.2 182.7 1027.0 183.2 1023.8 183.7 1020.7 184.3 1017.5 185.0 1014.3 185.7 1011.1 186.5 1007.9 187.4 1004.6 188.4 1001.4 189.6 998.5 190.7 995.6 192.0 992.7 193.3 989.7 194.7 986.8 196.2 984.0 197.7 981.2 199.2 978.5 200.8 975.9 202.4 973.1 204.1 970.3 206.0 967.7 207.8 965.1 209.7 962.7 211.6 960.2 213.6 957.8 215.6 955.5 217.7 953.1 219.8 950.7 221.9 948.5 224.2 946.2 226.4 944.0 228.7 941.9 230.9 939.8 233.2 937.7 235.4 935.4 237.9 933.2 240.3 930.9 242.8 928.8 245.3 926.6 247.8 924.5 250.5 922.5 253.2 920.5 256.0 918.6 258.9 916.7 261.9 914.9 264.9 913.1 267.8 911.5 270.7 909.8 273.4 908.0 276.5 906.2 279.5 904.5 282.5 902.8 285.4 901.3 288.3 899.8 291.0 898.1 294.2 896.6 297.2 895.1 300.1 893.7 303.0 892.2 306.2 890.9 309.0 889.6 311.9 888.4 314.9 887.1 317.9 885.9 320.8 884.6 323.8 883.4 326.7 882.1 329.6 880.9 332.5 879.6 335.4 878.4 338.4 877.1 341.3 875.9 344.2 874.6 347.1 873.3 350.1 872.1 353.0 870.8 356.0 869.6 358.8 868.2 362.5 866.7 366.3 865.3 369.9 864.2 373.0 863.3 375.1 863.4 377.5 865.1 379.2 867.5 379.1 869.2 377.4 870.0 375.2 871.1 372.1 872.5 368.5 874.0 364.7 875.4 361.2 876.5 358.4 877.8 355.5 879.0 352.6 880.3 349.6 881.6 346.7 882.9 343.7 884.1 340.8 885.4 337.9 886.6 335.0 887.9 332.1 889.1 329.1 890.4 326.2 891.6 323.3 892.9 320.3 894.1 317.3 895.4 314.4 896.6 311.5 897.8 308.8 899.3 305.7 900.7 302.8 902.1 300.0 903.6 297.1 905.2 294.0 906.7 291.3 908.3 288.5 909.9 285.6 911.6 282.7 913.3 279.7 915.2 276.6 916.8 273.8 918.5 271.0 920.2 268.1 922.0 265.2 923.8 262.3 925.6 259.5 927.5 256.8 929.4 254.3 931.4 251.8 933.5 249.3 935.6 246.9 937.8 244.5 940.0 242.1 942.3 239.6 944.3 237.4 946.4 235.2 948.5 233.0 950.7 230.8 952.8 228.6 955.0 226.5 957.3 224.4 959.5 222.3 961.9 220.4 964.2 218.4 966.5 216.5 968.9 214.7 971.3 212.8 973.9 211.1 976.4 209.3 979.1 207.6 981.6 206.1 984.2 204.6 986.9 203.1 989.7 201.7 992.5 200.3 995.3 198.9 998.1 197.7 1000.9 196.5 1003.6 195.4 1006.6 194.3 1009.6 193.4 1012.7 192.5 1015.7 191.7 1018.8 191.0 1021.8 190.4 1024.9 189.8 1028.0 189.3 1031.1 188.9 1034.1 188.5 1037.2 188.1 1040.2 187.9 1043.3 187.7 1046.4 187.5 1049.5 187.4 1052.5 187.4 1055.6 187.3 1058.7 187.4 1061.8 187.4 1064.8 187.6 1067.9 187.8 1071.0 188.0 1074.1 188.3 1077.1 188.6 1080.2 189.0 1083.3 189.4 1086.4 189.9 1089.4 190.4 1092.5 191.0 1095.6 191.6 1098.7 192.3 1101.8 193.0 1104.9 193.8 1108.0 194.6 1111.0 195.4 1114.1 196.3 1117.2 197.2 1120.3 198.2 1123.3 199.3 1126.4 200.4 1129.2 201.5 1131.9 202.5 1134.6 203.7 1137.4 204.8 1140.1 206.0 1142.8 207.3 1145.6 208.6 1148.3 210.0 1151.0 211.5 1153.7 213.0 1156.5 214.6 1159.2 216.3 1161.9 218.0 1164.7 219.8 1167.4 221.7 1170.2 223.6 1172.9 225.5 1175.7 227.5 1178.2 229.4 1180.7 231.3 1183.4 233.3 1186.0 235.4 1188.6 237.5 1191.2 239.6 1193.7 241.7 1196.1 243.7 1198.4 245.6 1200.5 247.4 1203.3 249.7 1205.7 251.7 1207.9 253.6 1210.0 255.5 1212.1 257.4 1214.2 259.4 1216.6 261.7 1218.5 263.7 1220.5 265.8 1222.6 268.1 1224.7 270.4 1226.8 272.8 1229.0 275.1 1231.1 277.5 1233.2 279.8 1235.2 282.1 1237.5 284.6 1239.8 287.1 1242.1 289.7 1244.4 292.2 1246.6 294.6 1248.6 296.9 1250.5 298.9 1252.1 300.8 1255.6 304.9 1258.0 307.9 1259.5 309.9Z M902.7 298.0 905.1 297.8 908.5 297.6 912.5 297.3 916.4 297.2 919.9 297.3 922.9 297.6 925.9 298.0 928.8 298.6 931.6 299.2 934.3 299.9 938.0 301.0 941.9 302.3 945.4 303.6 947.9 304.5 948.1 304.0 946.0 302.5 943.0 300.3 939.4 298.0 935.7 296.1 932.8 295.0 929.8 294.2 926.7 293.5 923.5 293.1 920.1 292.7 916.4 292.7 912.2 292.8 908.2 293.1 904.8 293.3 902.3 293.5 900.8 294.3 900.2 295.9 901.0 297.5Z M920.3 296.1 922.0 295.0 924.5 293.4 927.3 291.6 930.4 289.7 933.4 287.8 936.3 286.2 939.1 284.8 942.1 283.5 945.1 282.1 948.0 280.9 950.8 279.8 953.4 278.9 956.8 277.9 959.8 277.2 962.5 276.8 965.0 276.6 968.6 276.7 972.0 277.3 974.5 277.8 976.6 277.3 977.8 275.5 977.3 273.4 975.5 272.2 973.0 271.8 969.2 271.1 965.0 270.9 961.8 271.2 958.7 271.7 955.3 272.5 951.6 273.6 948.9 274.5 945.9 275.7 942.9 276.9 939.8 278.3 936.7 279.8 933.7 281.3 930.6 282.9 927.4 284.9 924.3 286.8 921.4 288.7 919.0 290.3 917.2 291.4 916.0 293.1 916.4 295.3 918.1 296.5Z M974.2 277.1 976.5 278.0 979.7 279.2 983.1 280.8 986.2 282.6 988.5 284.5 991.2 287.0 994.0 289.3 996.6 291.3 998.5 292.7 999.0 292.3 997.8 290.3 996.2 287.4 994.1 284.2 991.6 281.3 988.8 278.9 985.2 276.8 981.4 275.1 978.1 273.8 975.8 272.9 974.1 272.9 972.9 274.2 972.9 275.9Z M977.2 278.2 979.0 277.5 981.3 276.7 984.1 275.7 987.1 274.6 990.4 273.4 993.8 272.2 997.2 271.0 1000.4 269.9 1003.4 268.9 1006.6 267.9 1009.7 266.9 1012.8 265.9 1015.9 265.0 1019.0 264.1 1022.1 263.2 1025.1 262.3 1028.2 261.5 1031.4 260.7 1034.5 259.9 1037.8 259.1 1040.9 258.3 1044.1 257.6 1047.2 256.9 1050.2 256.3 1053.0 255.8 1056.6 255.2 1060.1 254.7 1063.5 254.2 1066.7 253.9 1069.8 253.6 1072.7 253.3 1076.0 253.1 1079.2 253.1 1082.3 253.2 1085.2 253.1 1088.4 252.7 1093.0 250.7 1096.1 248.9 1099.2 248.1 1102.6 247.8 1105.8 247.9 1108.9 248.9 1110.9 250.1 1113.2 252.0 1115.4 254.3 1117.5 257.1 1119.5 260.2 1121.1 263.6 1122.0 266.3 1122.7 269.4 1123.2 272.4 1123.4 274.8 1122.8 278.4 1122.2 283.6 1122.5 286.5 1122.9 289.3 1123.5 292.3 1124.1 295.5 1124.8 298.8 1125.4 302.2 1126.0 305.5 1126.4 308.4 1126.9 311.4 1127.4 314.5 1127.9 317.7 1128.4 320.9 1128.9 324.1 1129.3 327.2 1129.7 330.3 1130.0 333.4 1130.4 336.5 1130.7 339.6 1131.0 342.7 1131.2 345.8 1131.4 348.9 1131.6 352.0 1131.7 355.1 1131.7 358.2 1131.8 361.2 1131.7 364.3 1131.7 367.4 1131.5 370.5 1131.4 373.6 1131.2 376.7 1130.9 379.7 1130.6 382.8 1130.2 385.9 1129.7 389.0 1129.2 392.2 1128.6 395.3 1128.1 398.5 1127.6 401.6 1127.2 404.7 1126.8 408.3 1126.5 412.0 1126.2 415.8 1126.0 419.4 1125.7 422.6 1125.6 425.3 1125.4 427.3 1126.1 429.4 1128.1 430.3 1130.1 429.6 1131.1 427.7 1131.2 425.7 1131.4 423.0 1131.6 419.8 1131.8 416.2 1132.1 412.5 1132.4 408.8 1132.8 405.3 1133.2 402.4 1133.7 399.4 1134.2 396.3 1134.7 393.1 1135.3 389.9 1135.8 386.7 1136.2 383.5 1136.6 380.3 1136.8 377.1 1137.0 373.9 1137.2 370.7 1137.3 367.6 1137.4 364.4 1137.4 361.3 1137.4 358.1 1137.3 354.9 1137.2 351.8 1137.1 348.6 1136.8 345.4 1136.6 342.3 1136.3 339.1 1136.0 336.0 1135.7 332.8 1135.3 329.7 1134.9 326.5 1134.5 323.3 1134.0 320.0 1133.5 316.8 1133.0 313.7 1132.5 310.5 1132.0 307.5 1131.5 304.5 1131.0 301.2 1130.3 297.8 1129.7 294.4 1129.0 291.3 1128.5 288.3 1128.1 285.7 1127.8 283.9 1128.3 279.2 1129.1 275.2 1128.8 271.7 1128.2 268.3 1127.5 264.8 1126.4 261.4 1124.5 257.5 1122.1 253.8 1119.6 250.7 1117.0 247.9 1114.2 245.5 1111.1 243.6 1106.7 242.4 1102.4 242.2 1098.3 242.5 1093.9 243.6 1090.5 245.6 1086.6 247.3 1084.9 247.5 1082.3 247.5 1079.2 247.5 1075.9 247.5 1072.3 247.7 1069.3 248.0 1066.1 248.3 1062.8 248.6 1059.3 249.1 1055.7 249.6 1052.0 250.2 1049.1 250.8 1046.0 251.4 1042.9 252.1 1039.7 252.8 1036.4 253.6 1033.2 254.4 1030.0 255.2 1026.8 256.0 1023.6 256.9 1020.5 257.7 1017.4 258.6 1014.3 259.6 1011.1 260.5 1008.0 261.5 1004.8 262.5 1001.6 263.6 998.6 264.6 995.3 265.7 991.9 266.9 988.5 268.1 985.2 269.3 982.1 270.4 979.4 271.4 977.1 272.2 975.3 272.8 973.7 274.3 973.6 276.4 975.0 278.1Z M1070.0 256.5 1072.5 257.2 1076.2 258.1 1080.2 258.2 1084.5 257.1 1088.6 255.1 1091.3 253.4 1091.2 253.1 1088.0 253.3 1083.7 254.0 1079.8 254.8 1076.2 255.2 1072.6 255.6 1070.0 256.0Z M1123.3 281.5 1121.9 283.7 1119.9 286.9 1117.7 290.6 1115.7 294.1 1114.2 297.3 1112.8 300.6 1111.6 303.8 1110.8 307.1 1110.4 311.6 1110.6 315.8 1110.8 318.7 1111.2 318.8 1111.9 315.9 1112.9 311.9 1114.2 307.9 1115.2 305.1 1116.5 302.1 1117.8 299.0 1119.3 295.9 1121.1 292.6 1123.2 289.0 1125.3 285.8 1126.7 283.5 1126.9 282.1 1126.0 280.8 1124.6 280.6Z M951.7 358.8 951.6 361.0 951.4 364.2 951.3 367.9 951.1 371.6 950.8 374.9 950.4 377.8 949.9 380.8 949.3 383.7 948.6 386.6 947.8 389.4 946.7 393.0 945.4 396.7 944.2 399.9 943.4 402.2 943.4 403.9 944.7 405.1 946.4 405.1 947.6 403.8 948.5 401.5 949.7 398.2 951.0 394.4 952.2 390.6 952.9 387.7 953.7 384.7 954.4 381.6 954.9 378.4 955.2 375.1 955.0 371.5 954.4 367.7 953.6 364.0 952.8 360.9 952.3 358.7Z M944.7 405.7 946.7 406.3 949.5 407.2 952.9 408.4 956.8 409.4 960.9 410.1 965.0 410.3 968.2 410.1 971.4 409.6 974.8 409.0 978.2 408.2 981.6 407.2 984.9 406.2 988.1 405.0 991.1 403.8 994.4 402.4 997.5 400.7 1000.5 398.9 1003.4 397.0 1006.3 395.1 1009.0 393.0 1011.7 391.0 1014.5 388.8 1017.2 386.5 1019.9 384.1 1022.4 381.6 1024.9 379.2 1027.3 376.7 1029.5 374.3 1031.8 371.6 1034.1 368.7 1036.1 365.9 1037.9 363.2 1039.6 360.7 1041.2 358.4 1043.8 354.2 1045.9 350.6 1047.3 348.2 1046.7 347.8 1044.9 349.9 1042.2 353.0 1038.8 356.6 1037.0 358.6 1034.9 360.8 1032.7 363.2 1030.4 365.7 1028.0 368.2 1025.5 370.7 1023.3 372.8 1020.9 375.2 1018.5 377.5 1016.0 379.9 1013.5 382.2 1010.9 384.4 1008.3 386.5 1005.6 388.5 1003.0 390.5 1000.3 392.4 997.6 394.1 994.8 395.8 991.9 397.3 988.9 398.7 986.1 399.8 983.1 400.8 979.9 401.8 976.8 402.7 973.6 403.5 970.5 404.1 967.6 404.5 965.0 404.7 961.5 404.5 958.0 403.9 954.5 402.9 951.2 401.9 948.4 400.9 946.3 400.3 944.2 400.5 942.8 402.2 943.0 404.3Z M1032.7 367.7 1034.2 366.5 1036.3 364.8 1038.8 362.8 1041.5 360.5 1044.1 358.2 1046.5 356.0 1048.7 354.0 1051.4 352.0 1054.1 349.9 1056.9 347.7 1059.4 345.7 1061.6 344.0 1063.1 342.7 1062.9 342.3 1061.0 343.1 1058.5 344.1 1055.5 345.4 1052.3 347.0 1049.1 348.9 1046.3 351.0 1043.9 353.1 1041.4 355.5 1039.0 358.2 1036.9 360.9 1035.0 363.5 1033.5 365.7 1032.3 367.3Z M959.7 351.9 961.2 350.5 963.2 348.5 965.6 346.2 968.3 343.7 971.0 341.1 973.7 338.7 976.3 336.6 978.9 334.7 981.5 332.9 984.2 331.1 987.0 329.4 989.9 327.7 992.9 326.1 996.0 324.5 998.8 323.1 1001.7 321.7 1004.7 320.4 1007.7 319.1 1010.8 317.8 1014.0 316.7 1017.2 315.6 1020.6 314.7 1023.4 314.0 1026.6 313.3 1030.0 312.6 1033.5 311.9 1037.0 311.1 1040.4 310.5 1043.5 309.8 1046.3 309.2 1048.7 308.7 1050.5 308.3 1050.5 307.7 1048.6 307.8 1046.2 307.8 1043.3 307.9 1040.1 308.0 1036.6 308.1 1033.0 308.3 1029.4 308.6 1025.9 309.1 1022.5 309.6 1019.4 310.3 1015.9 311.3 1012.5 312.4 1009.2 313.6 1006.0 314.9 1002.9 316.3 999.8 317.6 996.9 319.1 994.0 320.5 990.8 322.1 987.7 323.8 984.7 325.5 981.8 327.3 979.0 329.2 976.3 331.2 973.7 333.4 971.1 335.9 968.6 338.8 966.2 341.8 964.0 344.8 962.1 347.6 960.5 349.9 959.3 351.6Z M1062.8 342.2 1060.9 343.4 1058.3 345.0 1055.1 346.9 1051.9 349.0 1048.7 351.2 1046.0 353.5 1043.7 355.9 1041.7 358.3 1039.8 360.8 1038.1 363.3 1036.5 366.0 1035.0 368.7 1033.5 371.5 1032.1 374.5 1030.8 377.5 1029.5 380.5 1028.3 383.6 1027.3 386.6 1026.2 390.2 1025.4 393.6 1024.6 397.1 1024.0 400.7 1023.4 404.7 1023.1 407.9 1022.9 411.5 1022.7 415.3 1022.5 419.1 1022.4 422.5 1022.3 425.3 1022.2 427.4 1022.9 429.4 1024.9 430.3 1026.9 429.6 1027.8 427.6 1027.9 425.5 1028.0 422.7 1028.1 419.3 1028.3 415.6 1028.5 411.9 1028.7 408.4 1029.1 405.3 1029.6 401.6 1030.2 398.2 1030.9 394.9 1031.7 391.7 1032.7 388.4 1033.7 385.5 1034.8 382.6 1036.0 379.7 1037.2 376.8 1038.6 374.0 1040.0 371.3 1041.4 368.7 1042.8 366.1 1044.2 363.6 1045.7 361.2 1047.3 358.8 1049.0 356.5 1051.2 354.0 1053.8 351.4 1056.6 348.8 1059.3 346.3 1061.6 344.3 1063.2 342.8Z M1095.3 320.4 1094.3 322.2 1093.0 324.5 1091.4 327.2 1089.7 330.4 1087.9 333.7 1086.2 337.2 1084.6 340.8 1083.2 344.3 1082.1 347.1 1081.0 350.0 1080.0 352.9 1078.9 356.0 1077.9 359.0 1076.8 362.1 1075.8 365.2 1074.9 368.3 1073.9 371.4 1073.1 374.5 1072.3 377.6 1071.5 380.7 1070.8 383.8 1070.1 387.0 1069.5 390.1 1068.9 393.2 1068.3 396.2 1067.8 399.1 1067.3 402.0 1066.8 404.7 1066.2 408.5 1065.6 412.4 1065.1 416.1 1064.7 419.6 1064.3 422.7 1064.0 425.3 1063.8 427.3 1064.2 428.7 1065.5 429.5 1067.0 429.1 1067.7 427.7 1068.0 425.8 1068.3 423.2 1068.6 420.1 1069.0 416.6 1069.5 412.9 1070.1 409.1 1070.7 405.3 1071.2 402.7 1071.7 399.8 1072.2 396.9 1072.8 393.9 1073.4 390.9 1074.0 387.8 1074.7 384.7 1075.4 381.6 1076.1 378.5 1076.9 375.5 1077.7 372.5 1078.6 369.5 1079.6 366.4 1080.6 363.4 1081.6 360.3 1082.7 357.3 1083.7 354.3 1084.8 351.3 1085.8 348.5 1086.8 345.7 1088.1 342.2 1089.5 338.6 1090.8 334.9 1092.0 331.4 1093.2 328.1 1094.2 325.1 1095.1 322.5 1095.7 320.6Z M1128.8 391.2 1127.6 393.1 1125.8 395.8 1123.9 399.0 1121.8 402.5 1120.0 406.0 1118.5 409.3 1117.0 412.5 1115.4 415.9 1113.9 419.2 1112.5 422.3 1111.3 424.9 1110.5 426.8 1110.4 428.1 1111.3 429.0 1112.6 429.1 1113.5 428.2 1114.4 426.3 1115.6 423.7 1117.0 420.6 1118.5 417.3 1120.1 413.9 1121.5 410.7 1123.1 407.5 1124.7 403.8 1126.1 400.1 1127.4 396.5 1128.5 393.5 1129.2 391.3Z M798.2 357.2 800.0 355.8 802.4 353.8 805.3 351.3 808.4 348.8 811.4 346.4 814.1 344.5 815.9 343.4 818.9 342.7 821.0 343.5 823.7 345.0 825.9 346.2 828.1 347.8 830.5 349.8 833.1 352.1 835.3 354.2 837.7 356.5 840.2 359.1 842.8 361.7 845.5 364.5 847.5 366.5 849.7 368.7 851.9 371.0 854.1 373.3 856.3 375.5 858.5 377.6 860.6 379.6 863.3 382.0 866.0 384.3 868.6 386.3 871.0 388.2 873.5 389.9 877.2 392.2 880.8 394.0 884.6 395.3 889.9 395.3 893.6 394.5 895.4 393.3 895.8 391.2 894.6 389.4 892.4 389.0 889.4 389.6 885.4 389.7 883.0 388.8 880.0 387.3 876.5 385.1 874.4 383.6 872.0 381.9 869.6 379.9 867.1 377.8 864.4 375.4 862.4 373.6 860.3 371.5 858.1 369.3 855.9 367.0 853.7 364.8 851.5 362.6 849.5 360.5 846.8 357.8 844.2 355.1 841.7 352.5 839.3 350.1 836.9 347.9 834.2 345.5 831.6 343.3 828.9 341.4 826.3 340.0 822.9 338.5 818.8 337.6 814.1 339.1 811.5 341.0 808.9 343.6 806.2 346.5 803.6 349.6 801.2 352.5 799.2 355.0 797.8 356.8Z M803.7 405.2 805.8 406.0 808.7 407.1 812.2 408.3 816.0 409.5 819.8 410.4 822.9 410.9 826.2 411.4 829.6 411.8 833.1 412.0 836.6 412.0 840.1 412.0 843.5 411.8 846.9 411.4 850.4 411.0 853.8 410.4 857.2 409.7 860.5 408.8 864.0 407.5 867.5 405.8 871.0 404.1 874.2 402.3 876.9 400.8 878.8 399.7 878.7 399.3 876.5 400.0 873.6 400.9 870.2 402.1 866.5 403.3 862.9 404.4 859.5 405.2 856.3 405.9 853.1 406.5 849.8 407.1 846.5 407.5 843.2 407.8 839.9 408.0 836.6 408.1 833.3 408.0 829.9 407.8 826.6 407.6 823.3 407.4 820.2 407.1 816.5 406.7 812.7 406.2 809.1 405.6 806.0 405.1 803.8 404.8Z M804.0 378.7 803.4 380.9 802.7 384.0 801.9 387.7 801.1 391.4 800.4 394.7 799.9 397.7 799.3 400.6 798.8 403.5 798.3 406.5 797.8 409.6 797.2 413.2 796.5 417.3 795.8 421.3 795.2 424.7 794.8 427.1 795.2 428.8 796.6 429.7 798.3 429.3 799.2 427.9 799.6 425.5 800.2 422.0 800.9 418.0 801.6 414.0 802.2 410.4 802.8 407.2 803.3 404.3 803.8 401.3 804.3 398.4 804.6 395.3 804.8 391.8 804.8 388.0 804.7 384.2 804.6 381.0 804.5 378.8Z M666.3 331.3 662.4 332.3 657.7 334.3 655.1 336.3 652.8 338.8 650.8 341.7 649.2 345.0 648.0 348.5 646.8 351.9 645.3 355.2 643.8 358.5 641.9 361.7 640.2 363.9 638.3 366.2 636.3 368.1 634.0 369.6 630.8 370.8 626.8 371.6 622.8 372.2 620.1 372.6 618.6 373.6 618.2 375.2 619.1 376.7 620.8 377.1 623.5 376.7 627.6 376.0 632.0 375.1 636.0 373.7 639.1 371.7 641.6 369.3 643.7 366.7 645.6 364.2 647.8 360.7 649.5 357.1 651.0 353.5 652.2 349.9 653.1 346.4 654.2 343.3 655.6 340.7 657.2 338.2 659.0 336.2 663.0 333.5 666.5 331.8Z M617.1 373.7 619.1 374.6 621.8 375.9 625.0 377.4 628.4 378.9 631.6 380.1 635.3 381.4 639.1 382.5 642.8 383.4 646.5 383.9 651.0 383.9 655.1 383.3 659.0 382.4 662.1 381.5 665.2 380.4 668.2 379.0 671.1 377.5 673.8 375.9 676.5 374.0 679.0 372.0 681.2 369.9 683.9 366.5 686.0 363.0 687.5 360.5 686.9 360.1 685.0 362.2 682.2 365.0 679.2 367.6 676.9 369.1 674.3 370.6 671.6 371.9 668.9 373.1 666.1 374.2 663.3 375.3 660.4 376.2 657.6 377.0 654.0 377.8 650.6 378.3 646.8 378.4 643.6 378.1 640.1 377.6 636.4 377.0 632.6 376.4 629.4 375.7 625.8 375.0 622.4 374.2 619.4 373.6 617.3 373.1Z M686.9 360.2 685.9 362.1 684.5 364.8 682.9 367.9 681.3 370.9 679.7 374.0 678.1 377.1 676.5 380.3 674.8 383.5 673.3 386.1 671.8 388.8 670.2 391.4 668.6 393.9 666.9 396.2 664.7 398.4 661.9 400.8 659.0 403.0 656.4 405.0 654.7 406.4 655.0 407.0 657.1 406.1 660.1 405.0 663.6 403.5 667.1 401.8 670.2 399.7 672.7 397.2 674.8 394.5 676.7 391.7 678.3 388.9 679.8 386.1 681.5 382.7 682.9 379.1 684.0 375.7 685.0 372.4 685.8 369.0 686.6 365.5 687.1 362.5 687.5 360.4Z M654.9 407.0 657.2 406.5 660.3 405.8 664.0 404.9 667.7 403.8 670.6 402.8 673.7 401.7 676.9 400.4 680.0 398.9 683.1 397.3 686.0 395.4 688.9 393.4 691.6 391.2 694.2 389.0 696.7 386.9 699.5 384.3 702.2 381.6 704.6 378.9 706.8 376.1 708.8 373.4 710.6 370.6 712.2 367.8 713.5 365.0 714.9 361.1 715.9 357.2 716.6 354.6 715.9 354.3 714.8 356.8 713.1 360.3 711.0 363.7 709.4 366.0 707.5 368.3 705.4 370.7 703.2 373.0 700.8 375.4 698.3 377.8 695.7 380.2 692.9 382.7 690.5 384.7 688.0 386.8 685.4 388.9 682.8 390.9 680.2 392.7 677.6 394.5 674.8 396.2 671.9 397.8 669.1 399.4 666.5 400.8 663.1 402.5 659.8 404.1 656.8 405.4 654.7 406.3Z M715.9 354.5 715.5 357.3 714.8 361.4 714.0 365.6 713.2 368.6 712.3 371.7 711.4 374.9 710.4 378.0 709.1 381.3 707.7 384.5 706.2 387.7 704.6 390.6 702.9 393.0 700.7 395.5 698.4 398.0 696.3 400.2 694.9 401.7 695.3 402.3 697.1 401.2 699.7 399.8 702.8 398.0 705.8 395.9 708.3 393.6 710.8 390.4 712.8 386.9 714.4 383.4 715.7 379.9 716.7 376.4 717.4 372.8 717.8 369.4 717.9 366.0 717.7 361.5 717.0 357.3 716.6 354.5Z M695.3 402.3 697.2 401.1 699.8 399.4 702.9 397.4 706.1 395.4 709.0 393.6 711.7 392.1 714.5 390.6 717.3 389.1 720.1 387.4 722.8 385.4 725.3 383.3 727.5 381.0 729.7 378.6 731.7 376.0 733.6 373.2 735.4 370.2 737.1 367.0 738.5 363.6 739.7 359.9 740.6 356.2 741.1 352.6 741.2 348.6 741.2 344.6 741.0 340.9 740.9 337.8 740.8 335.5 740.1 335.5 739.7 337.7 739.3 340.8 738.7 344.5 738.1 348.3 737.3 352.0 736.4 355.1 735.2 358.4 733.8 361.5 732.2 364.5 730.6 367.4 728.9 370.1 727.2 372.7 725.3 375.0 723.4 377.2 721.4 379.2 719.3 381.2 717.1 383.1 714.6 384.9 712.1 386.7 709.4 388.5 706.8 390.6 704.2 392.9 701.4 395.5 698.7 398.0 696.5 400.2 694.9 401.7Z M740.2 335.7 741.3 338.0 742.9 341.3 744.2 344.7 744.9 347.4 745.6 350.2 746.2 353.2 746.8 356.2 747.3 359.3 747.7 362.5 748.0 365.7 748.2 368.7 748.3 372.7 748.3 376.5 747.9 379.8 746.9 382.9 745.3 385.8 744.1 387.8 744.6 388.2 746.4 386.6 748.9 384.2 751.1 381.0 752.4 377.3 753.3 373.1 753.7 368.8 753.6 365.4 753.3 361.9 752.9 358.4 752.2 355.1 751.3 351.9 750.2 348.8 748.9 345.9 747.4 343.2 745.0 339.9 742.5 337.2 740.7 335.3Z M744.6 388.2 746.6 386.9 749.5 385.0 752.8 382.6 755.8 380.0 757.9 377.7 760.0 375.2 762.0 372.6 763.9 369.8 765.5 366.9 767.0 364.0 768.2 361.0 769.2 357.9 770.1 354.9 770.9 351.8 771.8 348.0 772.5 344.1 772.9 340.3 773.2 336.7 773.0 332.7 772.4 329.2 771.7 325.9 770.9 322.3 769.9 318.5 768.4 314.9 765.4 311.1 761.7 308.2 757.4 306.4 754.2 305.4 752.2 305.6 751.0 307.1 751.2 309.0 752.7 310.2 755.7 311.1 759.1 312.6 761.8 314.7 764.1 317.6 765.1 320.1 765.9 323.5 766.7 327.0 767.4 330.2 767.9 333.2 768.1 336.6 767.9 339.8 767.4 343.3 766.8 347.0 766.0 350.7 765.2 353.5 764.4 356.4 763.4 359.2 762.3 362.0 761.1 364.7 759.8 367.5 758.3 370.2 756.7 372.9 755.1 375.5 753.4 377.9 751.0 380.8 748.4 383.6 745.9 386.1 744.2 387.8Z M769.7 327.2 769.1 331.0 769.2 335.7 770.9 339.6 774.0 342.7 779.1 343.9 783.4 343.9 783.5 343.4 779.8 341.6 776.0 339.4 774.1 337.3 772.7 334.7 771.3 330.7 770.1 327.2Z M813.4 303.7 814.0 306.4 814.9 310.2 815.8 314.2 816.2 317.9 816.3 321.0 816.0 324.1 815.6 327.1 814.9 330.1 813.8 333.3 812.4 336.6 810.9 339.8 809.5 342.7 807.5 346.1 805.3 349.0 803.3 351.7 799.9 355.5 797.4 358.0 797.8 358.5 800.9 356.6 805.1 353.7 807.9 351.3 810.7 348.6 813.4 345.2 815.3 342.1 817.1 338.7 818.6 335.1 819.7 331.5 820.6 328.1 821.1 324.6 821.3 321.2 821.3 317.5 820.8 313.4 819.9 309.0 818.9 305.2 818.3 302.5 817.2 301.0 815.3 300.7 813.7 301.8Z M813.0 333.6 810.0 335.5 806.0 337.9 802.7 339.3 798.8 341.4 796.1 343.1 796.2 343.6 799.5 343.6 804.1 342.9 808.1 341.2 811.7 337.3 813.4 333.9Z M643.5 319.9 643.6 322.5 643.7 326.1 643.8 330.1 643.8 333.8 643.7 337.4 643.4 341.3 643.1 344.9 642.8 348.1 642.1 352.8 641.4 355.8 641.8 356.0 643.3 353.2 645.2 348.6 646.0 345.4 646.7 341.6 647.1 337.6 647.2 333.7 646.7 329.8 645.7 325.8 644.7 322.3 644.0 319.9Z M803.9 378.9 803.5 381.3 803.0 384.6 802.4 388.3 801.8 391.9 801.1 395.4 800.3 399.0 799.5 402.6 798.8 406.2 798.1 409.8 797.4 413.5 796.6 417.1 795.9 420.7 795.2 423.6 794.5 426.6 793.7 429.6 793.0 432.5 792.3 435.1 790.9 439.5 789.6 443.5 788.6 446.2 788.8 448.2 790.2 449.5 792.2 449.3 793.5 447.9 794.4 445.1 795.8 441.0 797.1 436.6 797.9 433.8 798.6 430.9 799.4 427.9 800.1 424.8 800.8 421.8 801.6 418.1 802.4 414.5 803.1 410.8 803.7 407.1 804.3 403.4 804.7 399.6 805.0 395.9 805.1 392.3 805.1 388.5 804.9 384.7 804.6 381.3 804.5 379.0Z M696.8 424.2 697.5 426.8 698.0 430.2 697.7 434.1 697.1 438.5 696.5 441.7 695.8 445.0 695.4 447.4 695.7 447.6 696.9 445.4 698.6 442.3 699.8 439.0 700.5 434.3 700.3 429.9 698.7 426.3 697.1 424.1Z M729.6 421.2 728.1 427.1 728.7 430.1 729.9 433.2 731.4 436.4 732.8 439.3 734.6 442.6 736.4 445.6 737.7 447.6 738.0 447.4 737.3 445.1 736.4 441.8 735.2 438.3 734.0 435.3 732.5 432.0 731.1 429.2 730.1 427.1 730.0 421.3Z M584.8 355.1 582.8 356.2 579.9 357.9 576.5 360.1 573.1 362.9 570.9 365.1 568.8 367.5 566.8 370.1 564.7 372.8 562.5 375.5 560.3 378.2 558.3 380.6 556.2 383.2 554.1 385.8 551.9 388.4 549.7 390.9 547.6 393.3 545.5 395.5 543.0 397.9 540.5 400.2 538.1 402.3 535.7 404.4 533.3 406.3 531.1 408.0 528.0 410.3 525.1 412.3 522.4 413.8 519.8 414.9 515.9 415.3 511.9 415.0 509.1 414.7 508.9 415.3 511.7 416.2 515.7 417.4 520.2 417.6 523.6 416.9 526.9 415.7 530.3 414.0 533.9 412.0 536.4 410.4 539.0 408.6 541.6 406.6 544.3 404.4 546.9 402.0 549.5 399.5 551.7 397.2 554.0 394.7 556.2 392.0 558.4 389.4 560.6 386.8 562.7 384.2 564.7 381.8 566.9 379.0 569.1 376.3 571.2 373.6 573.2 371.2 575.1 368.9 576.9 367.1 579.8 364.7 582.9 362.7 585.7 361.1 587.7 359.9 589.0 358.2 588.7 356.1 587.0 354.8Z M508.8 415.3 510.6 416.8 513.2 419.0 516.2 421.5 519.1 423.8 522.0 426.0 525.0 428.2 528.1 430.3 531.2 432.2 534.3 434.1 537.3 435.8 540.5 437.5 544.0 438.9 546.9 439.9 549.8 440.8 552.9 441.6 556.2 442.3 559.7 442.8 562.9 443.1 566.2 443.2 569.7 443.3 573.2 443.2 576.8 443.1 580.3 442.8 583.7 442.4 587.3 442.0 590.8 441.4 594.3 440.7 597.7 439.9 601.0 438.9 604.7 437.3 608.3 435.3 611.5 433.3 614.2 431.6 616.0 430.4 617.3 428.6 616.9 426.5 615.1 425.2 613.0 425.6 611.1 426.8 608.5 428.5 605.5 430.4 602.2 432.2 599.0 433.6 596.2 434.5 593.1 435.2 589.8 435.9 586.5 436.4 583.1 436.8 579.7 437.2 576.4 437.4 573.1 437.6 569.7 437.6 566.4 437.6 563.2 437.4 560.3 437.2 557.1 436.7 554.2 436.1 551.4 435.4 548.7 434.5 546.0 433.6 542.9 432.3 539.9 430.9 536.9 429.3 533.8 427.8 530.5 426.2 527.3 424.5 524.0 422.8 520.9 421.2 517.6 419.4 514.2 417.5 511.3 415.9 509.2 414.7Z M525.0 419.7 527.1 420.3 530.0 421.3 533.6 422.3 537.4 423.3 541.2 424.1 544.9 424.7 548.3 424.9 551.6 425.0 555.0 425.0 558.4 424.8 561.8 424.6 565.2 424.2 568.7 423.6 572.1 422.9 575.6 422.0 579.0 421.1 582.3 420.1 585.5 419.1 588.6 418.2 591.8 417.1 594.9 416.1 597.8 414.9 600.5 413.7 603.1 412.5 606.5 410.4 609.6 408.1 612.1 406.1 613.9 404.7 613.6 404.3 611.6 405.4 608.8 406.9 605.5 408.5 601.9 410.0 599.4 410.9 596.6 411.9 593.7 412.9 590.7 413.9 587.6 414.9 584.5 415.9 581.3 416.8 578.1 417.8 574.7 418.7 571.4 419.6 568.0 420.3 564.8 420.8 561.5 421.2 558.2 421.5 555.0 421.6 551.7 421.6 548.4 421.5 545.1 421.3 541.6 421.1 537.8 420.7 533.9 420.3 530.3 419.9 527.3 419.5 525.0 419.3Z M617.2 379.9 616.5 382.1 615.4 385.3 614.4 388.9 613.5 392.3 613.0 395.5 612.6 398.7 612.3 401.9 612.2 405.0 612.1 408.1 612.2 411.3 612.4 414.5 613.0 418.0 613.7 421.0 614.5 424.1 615.4 427.3 616.5 430.5 617.7 433.5 619.4 437.0 621.3 440.1 623.3 443.2 625.4 446.4 626.9 448.8 628.6 451.3 630.3 453.9 632.1 456.5 633.8 459.0 635.4 461.4 637.3 464.2 639.2 466.8 641.0 469.2 642.6 471.6 644.1 473.8 646.4 477.8 648.4 481.5 649.7 484.2 651.2 485.4 653.2 485.3 654.4 483.8 654.3 481.8 652.9 479.2 650.8 475.3 648.4 471.2 646.8 468.7 645.1 466.3 643.3 463.8 641.5 461.2 639.6 458.6 638.0 456.2 636.3 453.7 634.5 451.1 632.8 448.5 631.2 446.0 629.6 443.6 627.5 440.4 625.6 437.4 623.8 434.5 622.3 431.5 621.2 428.7 620.2 425.8 619.4 422.8 618.6 419.8 618.0 417.0 617.5 413.9 617.2 410.9 617.0 408.0 616.8 405.0 616.6 401.9 616.5 398.8 616.4 395.8 616.5 392.7 616.7 389.3 617.1 385.6 617.5 382.4 617.8 380.1Z M666.0 453.6 664.6 455.5 662.7 458.3 660.6 461.4 658.7 464.3 656.6 467.6 654.7 470.8 652.9 474.1 651.4 477.4 650.0 480.8 648.8 484.2 647.8 487.6 646.9 491.1 646.2 494.7 645.9 498.2 645.9 501.8 646.2 505.3 646.8 508.8 647.7 512.2 648.8 515.8 649.9 518.8 651.1 521.9 652.4 525.1 653.9 528.5 655.3 531.5 656.8 534.7 658.4 537.9 660.0 541.0 661.6 543.8 663.7 547.1 666.0 550.0 667.9 552.4 669.3 554.1 671.0 555.0 672.8 554.5 673.8 552.8 673.2 550.9 671.9 549.2 670.0 546.9 667.9 544.1 665.9 541.2 664.4 538.6 662.9 535.6 661.4 532.5 659.9 529.3 658.6 526.5 657.1 523.1 655.8 520.0 654.7 517.0 653.7 514.2 652.6 510.8 651.8 507.7 651.3 504.7 651.0 501.6 651.0 498.4 651.3 495.3 651.8 492.2 652.7 489.0 653.7 485.8 654.7 482.5 655.8 479.2 657.1 475.9 658.4 472.6 659.8 469.3 661.3 465.7 662.7 462.6 664.2 459.2 665.6 456.1 666.5 453.9Z M696.8 424.6 697.2 427.2 697.7 430.9 697.5 435.0 696.9 437.4 696.1 440.3 695.0 443.3 694.0 446.4 693.1 449.5 692.3 452.5 691.5 455.5 690.7 458.5 690.0 461.5 689.3 464.6 688.7 467.8 688.1 471.1 687.5 474.4 687.1 477.4 686.8 480.1 687.5 485.3 688.3 486.6 689.8 487.0 691.1 486.2 691.5 484.7 690.7 479.9 691.0 477.9 691.4 475.0 692.0 471.8 692.6 468.5 693.2 465.4 693.8 462.5 694.6 459.5 695.4 456.5 696.1 453.5 696.9 450.5 697.7 447.5 698.5 444.3 699.2 441.1 699.8 438.0 700.0 435.0 699.4 430.7 698.1 426.9 697.2 424.4Z M687.1 486.5 688.4 488.5 690.4 491.4 692.9 494.4 695.3 496.6 697.8 498.8 700.7 500.8 703.8 502.5 707.0 503.9 710.4 504.9 713.9 505.6 717.5 505.8 721.1 505.6 724.6 504.9 728.0 503.9 731.2 502.6 734.2 500.9 737.0 498.9 739.6 496.8 742.0 494.5 744.4 491.8 746.6 488.9 748.4 486.2 750.0 483.8 751.6 480.1 751.6 478.0 750.1 476.4 748.0 476.4 746.4 477.9 745.0 481.2 743.8 483.0 742.0 485.6 740.0 488.2 738.0 490.5 735.9 492.5 733.6 494.4 731.2 496.1 728.8 497.4 726.1 498.5 723.2 499.4 720.3 500.0 717.5 500.2 714.7 500.0 711.8 499.4 708.9 498.5 706.2 497.5 703.7 496.1 701.3 494.3 699.0 492.4 697.1 490.6 694.9 488.0 693.1 485.4 691.9 483.5 690.1 482.2 688.0 482.6 686.7 484.4Z M691.8 485.2 694.0 484.6 697.1 483.8 700.7 482.9 704.4 482.0 707.9 481.2 711.3 480.6 714.8 480.0 718.2 479.5 721.7 479.1 725.2 478.8 728.8 478.6 732.6 478.5 736.3 478.5 739.6 478.6 742.1 478.7 746.0 479.9 747.9 481.0 749.6 481.2 751.0 480.1 751.2 478.4 750.1 477.0 747.7 475.6 742.9 474.3 739.8 474.0 736.3 473.9 732.5 473.9 728.6 474.0 724.8 474.2 721.2 474.6 717.6 475.0 714.1 475.5 710.5 476.1 707.1 476.8 703.4 477.6 699.6 478.5 695.9 479.4 692.9 480.2 690.7 480.8 689.3 481.9 689.1 483.6 690.1 484.9Z M729.3 421.2 728.8 424.9 728.9 430.2 729.7 433.3 730.8 436.5 732.0 439.8 733.2 443.2 734.1 446.0 735.1 449.0 736.1 452.2 737.1 455.3 738.1 458.2 739.4 461.6 740.7 464.9 742.0 468.0 743.2 470.8 744.7 474.3 746.0 477.4 746.9 479.5 748.0 480.6 749.5 480.6 750.6 479.5 750.6 478.0 749.6 475.8 748.3 472.7 746.8 469.2 745.7 466.4 744.4 463.4 743.1 460.2 741.9 456.8 740.9 454.0 739.9 451.0 738.9 447.8 737.9 444.8 736.8 441.8 735.3 438.4 733.6 435.2 732.2 432.3 731.1 429.8 730.0 424.8 729.7 421.3Z M657.2 492.7 658.4 494.6 660.1 497.2 662.1 500.2 664.1 503.3 666.0 506.2 667.9 508.9 669.8 511.6 671.7 514.3 673.5 516.9 675.2 519.2 677.1 522.0 678.9 524.6 680.7 527.1 682.6 529.5 685.1 532.4 687.7 535.1 690.7 537.5 693.9 539.6 697.4 541.3 701.8 542.5 705.2 543.0 708.8 543.3 712.5 543.5 716.3 543.6 720.0 543.6 723.6 543.6 727.4 543.4 731.0 543.2 734.6 543.0 738.0 542.6 742.0 541.9 745.9 541.0 749.1 540.1 751.3 539.5 753.2 538.1 753.5 535.7 752.1 533.8 749.7 533.5 747.5 534.1 744.3 534.9 740.7 535.8 737.0 536.4 734.0 536.8 730.6 537.0 727.1 537.2 723.5 537.4 720.0 537.4 716.4 537.4 712.7 537.3 709.2 537.1 705.9 536.9 703.2 536.5 699.6 535.5 696.9 534.1 694.3 532.5 691.9 530.5 689.7 528.2 687.4 525.5 685.6 523.3 683.9 521.0 682.0 518.5 679.8 515.8 677.8 513.5 675.7 511.1 673.5 508.6 671.2 506.2 669.0 503.8 666.6 501.3 664.0 498.6 661.5 496.0 659.3 493.8 657.8 492.3Z M681.6 518.3 683.7 519.2 686.7 520.5 690.6 521.7 694.9 522.3 698.1 522.1 701.5 521.6 705.0 520.9 708.6 520.1 712.1 519.2 715.5 518.5 718.9 517.7 722.3 516.9 725.7 516.0 729.1 515.2 732.4 514.3 735.6 513.4 738.7 512.6 741.8 511.8 744.8 511.0 747.8 510.2 750.6 509.2 753.2 508.2 756.9 506.6 760.2 504.8 763.2 502.9 765.8 500.9 768.2 497.8 769.8 494.8 770.7 492.6 770.3 492.4 768.9 494.2 766.9 496.8 764.2 499.1 761.8 500.5 758.8 501.8 755.4 503.0 751.8 504.3 749.2 505.1 746.5 505.9 743.6 506.6 740.6 507.4 737.5 508.2 734.4 509.1 731.2 509.9 727.9 510.8 724.6 511.6 721.2 512.5 717.8 513.3 714.5 514.0 711.1 514.8 707.5 515.7 704.1 516.5 700.7 517.1 697.7 517.6 695.1 517.7 691.5 517.3 688.3 516.2 685.4 515.0 683.4 514.2 681.6 514.2 680.4 515.4 680.4 517.1Z M671.4 552.6 673.9 551.3 677.1 549.0 679.7 546.9 683.1 544.3 685.6 542.2 685.4 541.8 682.1 542.4 677.8 544.1 674.9 546.6 672.5 549.9 671.1 552.4Z M764.7 452.6 765.1 454.8 765.7 458.1 766.4 461.8 767.2 465.5 767.8 468.4 768.4 471.4 769.1 474.5 769.8 477.6 770.6 480.7 771.4 483.7 772.2 486.7 773.0 489.7 773.8 492.6 774.5 495.6 775.3 498.7 776.1 501.8 776.8 504.8 777.5 507.8 778.0 510.4 778.6 514.7 779.0 518.7 779.2 521.5 780.1 523.2 782.0 523.8 783.7 522.9 784.3 521.0 784.0 518.2 783.7 514.1 783.0 509.6 782.4 506.7 781.8 503.7 781.0 500.6 780.2 497.4 779.5 494.4 778.7 491.4 777.9 488.3 777.1 485.3 776.3 482.3 775.4 479.3 774.5 476.3 773.5 473.3 772.5 470.2 771.4 467.3 770.3 464.5 768.9 461.0 767.5 457.5 766.2 454.5 765.3 452.4Z M771.0 490.0 770.9 492.2 770.7 495.3 770.7 498.8 771.0 502.3 771.3 505.1 772.0 509.1 772.7 512.6 773.3 515.0 773.7 515.0 774.1 512.6 774.6 509.0 774.7 504.9 774.4 501.9 773.9 498.5 773.1 495.0 772.1 492.0 771.5 490.0Z M803.9 380.0 803.5 381.9 802.9 384.7 802.2 388.0 801.5 391.4 800.8 394.8 800.1 398.1 799.4 401.5 798.7 405.0 798.0 408.6 797.3 412.0 796.6 415.5 795.9 419.0 795.2 422.4 794.4 425.8 793.5 429.2 792.7 432.1 791.7 435.0 790.7 438.0 789.6 440.8 788.5 443.7 787.4 446.4 786.0 449.5 784.4 452.5 782.8 455.5 781.3 458.4 779.9 461.4 778.4 465.1 777.1 468.8 776.1 471.9 775.3 474.1 775.5 476.3 777.1 477.7 779.3 477.5 780.7 475.9 781.4 473.7 782.5 470.6 783.7 467.1 785.1 463.6 786.4 461.0 787.8 458.1 789.4 455.1 791.1 451.9 792.6 448.6 793.8 445.8 794.9 442.9 796.0 439.9 797.1 436.8 798.1 433.8 799.0 430.8 799.9 427.2 800.7 423.6 801.5 420.0 802.1 416.5 802.7 413.0 803.2 409.4 803.6 405.7 803.8 402.1 804.1 398.6 804.2 395.2 804.4 391.8 804.5 388.2 804.5 384.9 804.6 382.1 804.6 380.0Z M775.0 475.9 776.2 479.9 778.8 484.9 782.0 487.5 785.6 489.2 789.5 490.1 792.9 490.3 796.5 490.1 800.2 489.5 803.6 488.4 806.8 486.9 809.7 484.9 812.4 482.7 814.9 480.0 816.7 477.5 818.4 474.8 819.9 472.0 821.3 469.2 822.8 466.4 824.3 463.5 825.8 460.5 827.3 457.5 828.8 454.4 830.3 451.4 831.8 448.3 833.3 445.2 834.7 442.2 836.2 439.3 837.7 436.6 839.8 433.2 842.0 429.8 844.1 426.9 845.6 424.8 846.1 422.4 844.8 420.4 842.4 419.9 840.4 421.2 839.0 423.3 836.9 426.3 834.5 429.8 832.3 433.4 830.7 436.4 829.2 439.4 827.7 442.5 826.2 445.6 824.7 448.6 823.2 451.7 821.7 454.7 820.2 457.8 818.7 460.7 817.2 463.6 815.8 466.4 814.4 469.2 813.0 471.7 811.6 474.0 810.1 476.0 808.1 478.2 805.9 480.0 803.7 481.5 801.4 482.6 798.8 483.4 795.8 483.9 792.9 484.0 790.5 483.9 787.6 483.3 785.2 482.2 783.7 481.1 782.0 477.6 781.0 474.1 779.5 472.3 777.1 472.0 775.3 473.5Z M542.7 435.9 541.6 437.5 540.0 439.6 538.1 442.3 536.0 445.1 534.0 448.0 532.0 450.9 530.2 453.4 528.2 456.2 526.3 459.2 524.4 462.0 522.6 464.7 521.2 466.8 520.1 468.4 519.7 470.6 520.9 472.4 523.1 472.8 524.9 471.6 525.9 470.0 527.4 467.8 529.1 465.2 531.0 462.3 532.9 459.4 534.8 456.6 536.6 454.1 538.6 451.3 540.6 448.4 542.7 445.6 544.6 442.9 546.1 440.8 547.3 439.1 547.8 437.0 546.6 435.2 544.5 434.7Z M521.6 467.3 518.8 468.2 514.8 469.6 510.9 471.4 507.1 474.7 504.8 479.3 504.8 483.4 505.7 486.8 505.9 489.9 505.4 492.4 504.6 495.4 503.5 498.5 502.4 501.4 500.7 505.2 498.8 508.7 497.5 511.2 497.3 513.3 498.7 515.0 500.8 515.2 502.5 513.8 503.8 511.3 505.8 507.6 507.6 503.6 508.8 500.5 510.0 497.1 510.9 493.7 511.6 490.1 511.3 485.9 510.4 482.5 510.2 480.7 511.5 478.2 514.1 476.1 516.9 474.8 520.6 473.6 523.4 472.7 525.0 471.3 525.2 469.1 523.8 467.5Z M525.6 469.9 527.8 469.3 531.0 468.4 534.6 467.3 538.2 466.2 541.0 465.3 544.1 464.3 547.2 463.3 550.3 462.2 553.3 461.0 556.3 459.4 559.4 457.6 562.2 455.8 564.7 454.2 566.4 453.0 566.1 452.5 564.1 453.1 561.4 453.9 558.1 454.9 554.8 456.0 551.7 457.0 548.8 458.0 545.8 459.0 542.7 460.0 539.7 460.9 536.8 461.8 533.2 463.0 529.7 464.0 526.5 464.9 524.4 465.6 523.0 466.7 522.8 468.4 523.9 469.7Z M461.8 552.8 462.2 549.6 462.8 545.6 463.5 542.9 464.7 540.1 465.9 538.1 467.4 535.9 469.7 533.5 471.4 532.0 473.5 530.4 476.0 528.7 478.6 526.9 481.6 525.2 484.2 523.7 487.2 522.2 490.4 520.6 493.6 519.0 496.9 517.5 500.1 515.9 503.2 514.5 506.2 513.1 509.3 511.7 512.5 510.3 515.7 508.8 518.9 507.1 521.8 505.6 524.8 503.9 527.8 502.2 530.8 500.5 533.8 498.7 536.6 496.9 539.3 495.0 542.2 492.9 544.9 490.7 547.5 488.6 549.9 486.4 552.3 484.3 554.6 482.3 557.3 479.9 560.1 477.4 562.7 475.0 565.0 472.9 567.0 471.2 570.4 468.5 572.3 467.3 576.1 466.2 579.9 467.8 581.3 468.9 583.6 470.9 586.3 473.1 589.1 475.4 591.9 477.7 594.5 479.7 597.3 481.7 600.0 483.6 602.6 485.4 605.1 487.2 607.7 488.9 611.1 491.1 614.5 493.4 617.6 495.4 619.8 496.8 620.2 496.2 618.4 494.4 615.8 491.9 612.8 489.0 609.8 486.1 607.6 484.1 605.3 482.0 603.0 479.8 600.6 477.6 598.0 475.3 595.7 473.2 593.0 470.8 590.3 468.4 587.6 466.1 585.1 464.1 582.6 462.2 576.4 460.0 570.2 461.5 566.8 463.4 563.0 466.3 560.9 468.2 558.5 470.4 555.9 472.8 553.2 475.2 550.4 477.7 548.1 479.7 545.8 481.8 543.4 483.9 541.0 485.9 538.4 488.0 535.7 490.0 533.2 491.7 530.5 493.4 527.6 495.1 524.7 496.8 521.8 498.5 518.8 500.1 516.1 501.6 512.9 503.2 509.9 504.7 506.8 506.1 503.7 507.4 500.6 508.8 497.4 510.3 494.2 511.9 490.9 513.4 487.6 515.0 484.4 516.6 481.3 518.2 478.4 519.8 475.3 521.7 472.5 523.5 469.9 525.4 467.5 527.2 465.3 529.0 462.6 531.9 460.6 534.7 459.1 537.4 457.6 540.9 456.7 544.4 456.0 548.7 455.7 552.2 456.3 554.4 458.4 555.6 460.7 554.9Z M505.4 553.5 506.3 550.9 508.8 546.8 510.1 545.4 512.0 543.5 514.2 541.5 516.6 539.4 519.2 537.2 522.0 534.9 524.1 533.2 526.4 531.4 528.9 529.5 531.5 527.7 534.1 525.7 536.7 523.8 539.3 521.9 541.9 520.0 544.4 518.0 547.0 516.0 549.6 513.9 552.2 511.9 554.7 510.0 557.2 508.2 559.5 506.5 561.6 505.1 564.9 503.2 567.7 501.7 570.3 500.5 572.8 499.7 575.2 499.3 577.7 499.4 580.1 499.8 582.7 500.5 585.6 501.6 588.8 502.9 591.3 503.9 593.9 505.1 596.7 506.5 599.6 508.0 602.5 509.5 605.5 511.1 608.5 512.7 611.2 514.2 614.0 515.7 616.8 517.3 619.7 519.0 622.6 520.6 625.5 522.2 628.3 523.8 631.1 525.3 634.2 526.8 637.2 528.2 640.1 529.5 642.9 530.8 645.6 532.1 648.2 533.5 650.8 535.1 653.4 537.0 656.1 539.1 658.9 541.5 661.6 543.8 664.0 546.1 666.1 548.1 667.5 549.4 670.4 553.7 672.4 555.0 674.7 554.6 676.0 552.6 675.6 550.3 672.5 545.6 670.4 543.6 668.2 541.6 665.7 539.2 663.0 536.8 660.1 534.3 657.1 532.0 654.2 529.9 651.3 528.1 648.5 526.6 645.6 525.2 642.7 523.9 639.8 522.6 636.9 521.2 633.9 519.7 631.3 518.3 628.5 516.8 625.7 515.2 622.8 513.5 619.9 511.9 617.0 510.3 614.2 508.7 611.5 507.3 608.4 505.6 605.4 504.0 602.4 502.5 599.5 500.9 596.6 499.5 593.8 498.2 591.2 497.1 587.8 495.8 584.6 494.6 581.5 493.7 578.2 493.2 574.8 493.2 571.4 493.7 568.1 494.7 565.0 496.1 561.8 497.8 558.4 499.9 556.0 501.4 553.5 503.1 551.0 505.0 548.4 507.0 545.8 509.0 543.2 511.1 540.6 513.1 538.1 515.0 535.6 516.9 533.0 518.8 530.4 520.7 527.8 522.7 525.2 524.6 522.7 526.5 520.3 528.3 518.0 530.1 515.2 532.4 512.5 534.7 510.0 536.9 507.7 539.0 505.7 541.1 503.7 543.2 500.7 548.1 499.6 551.5 499.7 553.9 501.5 555.4 503.9 555.3Z M582.5 451.5 584.8 451.5 587.9 451.3 591.5 451.2 595.3 451.2 599.0 451.5 602.1 452.1 604.9 453.2 607.7 454.6 610.4 456.4 613.3 458.5 616.1 460.6 619.0 462.6 621.6 464.4 624.2 466.1 626.9 467.9 629.5 469.7 631.9 471.5 634.3 473.3 636.4 475.0 639.2 477.6 641.8 480.2 644.1 482.8 646.1 485.0 647.5 486.6 648.7 487.2 649.9 486.8 650.4 485.6 650.0 484.4 648.6 482.8 646.6 480.6 644.2 477.9 641.5 475.1 638.6 472.5 636.4 470.7 634.0 468.8 631.4 467.0 628.8 465.1 626.1 463.3 623.5 461.5 621.0 459.9 618.1 457.8 615.3 455.7 612.4 453.6 609.4 451.7 606.2 450.1 602.9 448.9 599.2 448.4 595.2 448.6 591.3 449.2 587.7 449.9 584.7 450.6 582.5 451.0Z M627.4 485.2 629.1 486.8 631.5 489.0 634.1 491.4 636.3 493.6 638.6 496.7 640.7 500.0 642.5 503.0 644.4 507.3 645.5 510.5 646.0 510.5 645.9 506.9 645.0 502.0 643.5 498.4 641.4 494.8 638.7 491.4 635.9 489.2 632.7 487.3 629.7 485.8 627.6 484.8Z M640.3 498.5 636.6 502.3 638.9 508.4 644.8 511.9 647.7 506.4 646.6 502.6 644.7 499.5 641.8 498.2 640.7 498.2 639.9 499.0 640.0 500.1 640.7 500.8 642.8 501.5 644.0 503.7 644.8 506.1 644.2 509.1 641.1 506.6 639.4 502.7 642.2 500.5 642.7 499.6 642.3 498.5 641.3 498.1Z M632.3 502.7 633.9 504.5 636.0 507.1 638.5 510.1 641.2 513.2 643.7 516.2 645.7 518.6 647.7 521.1 649.9 523.6 651.9 526.1 654.0 528.7 655.9 531.2 657.9 533.9 659.9 536.8 661.9 539.8 663.7 542.5 665.2 544.9 666.4 546.6 667.6 547.4 669.1 547.1 669.9 545.9 669.6 544.4 668.5 542.7 667.0 540.4 665.2 537.6 663.2 534.6 661.1 531.6 659.1 528.8 657.1 526.2 655.0 523.6 652.9 521.0 650.7 518.5 648.5 516.1 646.3 513.8 643.4 511.1 640.3 508.4 637.2 505.9 634.5 503.8 632.7 502.3Z M669.5 550.3 667.1 552.1 663.6 554.9 660.3 558.2 658.0 561.5 656.1 565.1 654.8 569.2 654.2 572.2 653.8 575.3 653.5 578.5 653.4 581.8 653.4 585.1 653.6 588.7 654.0 592.5 654.5 596.2 654.9 599.4 655.2 601.6 656.3 603.5 658.4 604.1 660.2 603.0 660.8 600.9 660.5 598.6 660.1 595.5 659.6 591.9 659.3 588.2 659.1 584.9 659.1 581.9 659.2 578.8 659.4 575.9 659.7 573.1 660.2 570.8 661.4 567.3 662.8 564.4 664.7 561.8 667.3 559.1 670.6 556.6 673.0 554.7 674.1 552.9 673.5 550.8 671.6 549.7Z M1044.9 345.8 1043.7 347.6 1042.1 350.1 1040.1 353.1 1038.0 356.4 1035.9 359.8 1033.9 363.0 1032.3 366.0 1030.6 369.1 1029.1 372.1 1027.8 375.0 1026.5 377.9 1025.5 381.0 1024.5 384.2 1023.7 387.5 1023.1 390.8 1022.7 394.2 1022.4 397.6 1022.1 401.1 1021.9 404.8 1021.8 407.8 1021.7 410.8 1021.6 414.0 1021.6 417.2 1021.6 420.4 1021.7 423.7 1021.8 427.0 1021.9 430.2 1022.1 433.3 1022.3 436.5 1022.5 439.6 1022.8 442.8 1023.2 446.0 1023.6 449.1 1024.0 452.3 1024.4 455.5 1025.0 458.7 1025.6 461.9 1026.3 465.0 1027.0 468.2 1027.7 471.3 1028.3 474.4 1028.9 477.4 1029.4 480.5 1029.9 483.6 1030.3 486.7 1030.7 489.7 1031.1 492.8 1031.4 495.9 1031.6 499.0 1031.8 502.0 1031.9 505.1 1031.9 508.1 1031.9 511.3 1031.7 514.4 1031.6 517.5 1031.4 520.7 1031.1 523.8 1030.9 526.8 1030.7 529.7 1030.4 533.1 1030.0 536.6 1029.6 540.1 1029.3 543.5 1028.9 546.5 1028.6 549.0 1028.4 550.9 1029.1 553.2 1031.2 554.3 1033.4 553.7 1034.6 551.6 1034.8 549.7 1035.1 547.2 1035.4 544.2 1035.8 540.8 1036.2 537.3 1036.6 533.7 1036.8 530.3 1037.1 527.3 1037.3 524.3 1037.6 521.1 1037.8 517.9 1038.0 514.7 1038.1 511.4 1038.1 508.2 1038.1 504.9 1038.0 501.7 1037.8 498.5 1037.5 495.3 1037.2 492.2 1036.9 489.0 1036.5 485.8 1036.0 482.7 1035.6 479.5 1035.0 476.3 1034.4 473.1 1033.7 470.0 1033.0 466.8 1032.3 463.7 1031.7 460.6 1031.1 457.6 1030.6 454.5 1030.1 451.5 1029.7 448.4 1029.4 445.3 1029.0 442.2 1028.7 439.1 1028.5 436.0 1028.3 432.9 1028.1 429.8 1028.0 426.7 1027.9 423.6 1027.8 420.4 1027.8 417.2 1027.8 414.0 1027.9 411.0 1028.0 408.0 1028.1 405.2 1028.3 401.5 1028.6 398.1 1028.9 394.9 1029.3 391.8 1029.8 388.8 1030.5 385.8 1031.4 382.9 1032.3 380.2 1033.5 377.5 1034.7 374.8 1036.2 372.0 1037.7 369.0 1039.3 366.2 1041.2 363.0 1043.3 359.7 1045.4 356.5 1047.3 353.5 1048.9 351.0 1050.1 349.2 1050.5 346.8 1049.2 344.9 1046.8 344.5Z M1128.1 325.2 1128.2 327.0 1128.4 329.3 1128.5 332.1 1128.7 335.3 1128.9 338.6 1129.1 342.1 1129.3 345.5 1129.4 348.9 1129.4 352.1 1129.4 354.9 1129.3 358.3 1129.0 361.6 1128.7 365.0 1128.3 368.2 1127.9 371.4 1127.5 374.4 1127.2 377.1 1126.9 379.6 1126.5 383.3 1126.1 385.8 1125.8 388.6 1125.6 392.4 1125.7 395.1 1125.8 398.0 1126.0 401.1 1126.1 404.4 1126.3 407.7 1126.4 411.0 1126.5 414.3 1126.4 417.4 1126.2 420.4 1125.9 423.5 1125.6 426.5 1125.2 429.6 1124.8 432.7 1124.3 435.7 1123.8 438.8 1123.2 441.9 1122.6 445.0 1121.9 448.2 1121.2 451.4 1120.4 454.6 1119.6 457.7 1118.7 460.8 1117.9 463.7 1117.0 466.6 1116.0 469.6 1115.0 472.4 1113.9 475.1 1112.8 477.8 1111.7 480.6 1110.6 483.5 1109.5 486.5 1108.6 489.7 1107.6 493.0 1106.7 496.3 1105.8 499.6 1104.9 502.9 1104.1 506.1 1103.2 509.2 1102.3 512.7 1101.4 516.0 1100.5 519.4 1099.7 522.7 1098.9 526.0 1098.2 529.4 1097.6 533.0 1097.1 536.7 1096.7 540.4 1096.3 543.9 1096.0 547.0 1095.7 549.6 1094.9 554.8 1094.4 557.5 1095.0 559.8 1097.0 561.1 1099.3 560.5 1100.6 558.5 1101.0 555.7 1101.8 550.4 1102.2 547.7 1102.5 544.5 1102.9 541.1 1103.3 537.5 1103.7 533.9 1104.3 530.6 1105.0 527.4 1105.7 524.2 1106.5 520.9 1107.4 517.7 1108.3 514.3 1109.3 510.8 1110.1 507.7 1110.9 504.5 1111.8 501.2 1112.7 497.9 1113.6 494.7 1114.5 491.5 1115.5 488.5 1116.4 485.6 1117.5 482.9 1118.6 480.2 1119.7 477.5 1120.8 474.6 1121.9 471.6 1123.0 468.4 1123.8 465.5 1124.7 462.4 1125.6 459.3 1126.4 456.1 1127.2 452.8 1128.0 449.5 1128.7 446.3 1129.3 443.1 1129.9 439.9 1130.4 436.8 1130.9 433.6 1131.4 430.4 1131.8 427.2 1132.1 424.0 1132.4 420.9 1132.6 417.6 1132.7 414.3 1132.7 410.9 1132.5 407.4 1132.4 404.0 1132.2 400.8 1132.0 397.7 1131.9 394.9 1131.9 392.6 1132.0 389.0 1132.3 386.7 1132.6 384.1 1133.1 380.4 1133.4 377.9 1133.7 375.1 1134.1 372.2 1134.5 369.0 1134.9 365.6 1135.2 362.2 1135.5 358.6 1135.6 355.1 1135.6 352.1 1135.6 348.8 1135.5 345.3 1135.3 341.8 1135.1 338.3 1134.9 334.9 1134.8 331.8 1134.6 329.0 1134.4 326.6 1134.4 324.8 1133.3 322.7 1131.1 321.9 1128.9 322.9Z M1095.3 319.9 1094.3 321.5 1093.1 323.6 1091.7 326.0 1090.1 328.7 1088.4 331.7 1086.7 334.9 1085.0 338.2 1083.3 341.5 1081.7 344.9 1080.3 348.2 1079.0 351.3 1077.9 354.2 1076.7 357.4 1075.6 360.6 1074.6 363.7 1073.7 366.7 1072.8 369.7 1072.0 372.6 1071.2 375.6 1070.5 378.5 1069.7 381.5 1069.0 384.5 1068.4 387.5 1067.7 390.6 1067.1 393.7 1066.6 396.7 1066.1 399.8 1065.6 402.8 1065.1 405.9 1064.7 408.9 1064.3 411.8 1064.0 414.8 1063.7 418.0 1063.4 421.1 1063.2 424.2 1063.0 427.3 1062.9 430.3 1062.8 433.4 1062.8 436.4 1062.7 439.4 1062.7 442.5 1062.8 445.6 1062.9 448.6 1063.0 451.7 1063.2 454.7 1063.3 457.7 1063.5 460.7 1063.7 463.8 1063.9 466.9 1064.0 470.1 1064.1 473.1 1064.3 476.5 1064.6 479.9 1064.9 483.5 1065.2 487.0 1065.5 490.4 1065.9 493.5 1066.2 496.3 1066.5 498.7 1066.7 500.5 1067.3 500.5 1067.4 498.7 1067.6 496.3 1067.8 493.5 1068.0 490.3 1068.2 486.9 1068.4 483.4 1068.5 479.8 1068.6 476.3 1068.6 473.0 1068.5 469.9 1068.4 466.7 1068.2 463.6 1068.0 460.5 1067.8 457.4 1067.7 454.4 1067.5 451.4 1067.4 448.5 1067.3 445.5 1067.3 442.5 1067.3 439.5 1067.3 436.5 1067.4 433.5 1067.4 430.5 1067.6 427.5 1067.7 424.5 1067.9 421.5 1068.2 418.4 1068.5 415.2 1068.8 412.4 1069.2 409.5 1069.6 406.5 1070.0 403.5 1070.5 400.5 1071.0 397.5 1071.6 394.5 1072.2 391.5 1072.8 388.5 1073.5 385.5 1074.1 382.5 1074.8 379.6 1075.6 376.7 1076.3 373.8 1077.1 370.9 1078.0 368.0 1078.9 365.1 1079.9 362.0 1081.0 359.0 1082.1 355.8 1083.2 353.0 1084.5 349.9 1085.8 346.7 1087.2 343.3 1088.6 339.8 1089.9 336.4 1091.2 333.0 1092.4 329.8 1093.4 326.8 1094.4 324.2 1095.1 321.9 1095.7 320.1Z M1127.3 393.5 1126.1 395.6 1124.5 398.4 1122.6 401.7 1120.5 405.4 1118.3 409.0 1116.7 411.6 1115.0 414.3 1113.2 417.2 1111.4 420.1 1109.5 423.1 1107.7 426.0 1105.9 429.0 1104.2 431.7 1102.5 434.7 1100.8 437.8 1099.2 440.8 1097.6 443.8 1096.3 446.4 1095.1 448.7 1094.3 450.4 1094.7 450.6 1095.9 449.1 1097.4 447.2 1099.2 444.8 1101.3 442.2 1103.3 439.3 1105.4 436.5 1107.4 433.7 1109.1 431.0 1111.0 428.1 1112.9 425.2 1114.7 422.2 1116.6 419.3 1118.4 416.4 1120.1 413.7 1121.7 411.0 1123.9 407.4 1126.0 403.7 1127.9 400.4 1129.5 397.5 1130.7 395.5 1130.9 394.0 1130.0 392.8 1128.5 392.6Z M1091.0 500.0 1090.6 501.9 1089.9 504.5 1089.2 507.5 1088.4 510.9 1087.6 514.5 1086.9 518.1 1086.3 521.6 1085.8 524.7 1085.3 528.1 1084.7 531.5 1084.2 534.9 1083.7 538.1 1083.1 541.3 1082.6 544.3 1082.1 547.2 1081.4 551.1 1080.6 554.9 1079.9 558.4 1079.3 561.3 1078.8 563.4 1079.1 564.7 1080.2 565.4 1081.4 565.2 1082.2 564.1 1082.6 562.0 1083.2 559.1 1083.9 555.6 1084.7 551.7 1085.4 547.8 1085.9 544.9 1086.5 541.9 1087.0 538.7 1087.5 535.4 1088.1 532.1 1088.6 528.7 1089.2 525.3 1089.7 522.1 1090.1 518.6 1090.5 514.9 1090.8 511.3 1091.0 507.8 1091.2 504.6 1091.4 502.0 1091.5 500.0Z M1092.3 510.0 1091.9 512.0 1091.4 514.7 1090.8 518.0 1090.1 521.6 1089.5 525.3 1089.0 528.9 1088.6 532.3 1088.1 535.6 1087.6 539.1 1087.0 542.6 1086.4 546.1 1085.8 549.3 1085.3 552.3 1084.9 554.8 1084.0 560.6 1083.6 563.6 1083.9 564.6 1084.8 565.2 1085.9 564.9 1086.4 563.9 1086.8 561.0 1087.6 555.2 1088.1 552.7 1088.6 549.8 1089.1 546.6 1089.7 543.1 1090.3 539.6 1090.9 536.0 1091.4 532.7 1091.8 529.3 1092.2 525.6 1092.5 521.8 1092.6 518.2 1092.6 514.9 1092.7 512.1 1092.7 510.0Z M1026.5 546.0 1024.4 547.2 1021.1 549.1 1018.1 551.7 1016.1 555.0 1014.8 558.7 1014.4 562.6 1015.1 566.6 1016.6 570.4 1018.6 574.1 1020.5 576.9 1022.7 579.7 1025.3 582.4 1028.0 584.9 1030.9 587.2 1034.0 589.4 1037.6 591.4 1041.5 593.0 1045.0 593.8 1048.6 594.4 1052.4 594.8 1056.3 594.8 1060.3 594.6 1063.7 594.2 1067.2 593.5 1070.8 592.7 1074.3 591.8 1077.8 590.6 1081.2 589.4 1084.5 587.9 1087.8 586.2 1091.1 584.4 1094.2 582.6 1097.0 580.7 1099.5 578.9 1103.3 575.6 1106.1 572.2 1108.0 568.2 1108.3 562.4 1106.4 556.8 1101.6 553.6 1099.3 553.2 1097.4 554.6 1097.0 556.9 1098.4 558.9 1101.6 560.7 1102.1 563.1 1102.0 566.8 1100.9 568.7 1098.8 571.2 1095.5 574.1 1093.4 575.6 1090.8 577.3 1088.0 579.1 1084.9 580.8 1081.9 582.3 1078.8 583.6 1075.8 584.8 1072.5 585.8 1069.2 586.7 1066.0 587.5 1062.8 588.0 1059.7 588.4 1056.2 588.6 1052.7 588.6 1049.4 588.3 1046.3 587.7 1043.5 587.0 1040.3 585.8 1037.4 584.2 1034.6 582.2 1032.0 580.1 1029.6 578.0 1027.4 575.6 1025.5 573.2 1023.9 570.9 1022.2 567.8 1021.1 564.9 1020.6 562.4 1020.9 560.0 1021.7 557.7 1022.9 555.8 1024.7 554.2 1027.4 552.6 1029.5 551.5 1031.0 549.6 1030.7 547.3 1028.9 545.8Z M1022.7 555.8 1024.5 557.8 1027.2 560.7 1030.5 563.7 1033.5 565.8 1036.7 567.9 1040.1 569.9 1043.8 571.6 1046.8 572.8 1050.0 573.7 1053.2 574.6 1056.5 575.2 1059.7 575.6 1063.0 575.7 1066.2 575.6 1069.4 575.3 1072.5 574.9 1075.7 574.3 1078.9 573.5 1082.2 572.5 1085.4 571.4 1088.4 570.3 1091.3 569.1 1094.7 567.3 1097.8 565.4 1100.4 563.8 1102.2 562.6 1103.5 560.7 1103.1 558.3 1101.2 557.0 1098.8 557.4 1097.0 558.5 1094.5 560.2 1091.7 561.9 1088.7 563.4 1086.1 564.5 1083.3 565.6 1080.3 566.6 1077.3 567.5 1074.3 568.2 1071.5 568.8 1068.6 569.2 1065.8 569.4 1063.0 569.5 1060.3 569.4 1057.4 569.1 1054.6 568.5 1051.7 567.8 1048.9 566.9 1046.2 565.9 1043.0 564.4 1039.9 562.6 1037.0 560.7 1034.5 558.8 1031.5 556.2 1029.0 553.6 1027.3 551.7 1025.2 550.6 1022.9 551.4 1021.9 553.6Z M455.1 537.3 455.0 539.9 454.8 543.8 455.1 547.9 455.8 551.9 456.9 555.8 458.4 560.0 459.6 562.9 460.9 565.8 462.3 568.9 463.8 572.1 465.5 575.4 466.7 577.9 468.1 580.5 469.5 583.2 471.0 586.0 472.5 588.8 474.0 591.6 475.6 594.3 477.1 597.0 478.7 599.7 480.3 602.4 481.9 605.1 483.5 607.8 485.2 610.5 486.9 613.2 488.6 615.9 490.4 618.7 492.2 621.4 494.0 624.1 495.9 626.8 497.7 629.5 499.5 632.1 501.3 634.7 503.2 637.5 505.2 640.2 507.1 642.8 508.9 645.3 510.5 647.6 512.0 649.7 515.0 653.7 517.3 656.9 518.9 659.1 521.3 660.5 524.1 659.8 525.5 657.4 524.8 654.7 523.3 652.6 520.9 649.4 518.0 645.3 516.5 643.3 514.8 641.0 513.0 638.5 511.1 635.9 509.2 633.2 507.3 630.5 505.5 627.9 503.7 625.3 501.9 622.7 500.1 620.0 498.3 617.3 496.6 614.6 494.8 611.9 493.1 609.3 491.4 606.6 489.8 604.0 488.2 601.3 486.6 598.7 485.0 596.0 483.5 593.3 481.9 590.7 480.4 588.0 478.9 585.3 477.4 582.5 476.0 579.8 474.6 577.1 473.3 574.6 472.0 572.1 470.4 568.8 468.9 565.7 467.6 562.8 466.3 560.0 465.3 557.5 463.9 553.6 463.0 550.2 462.4 547.1 462.2 543.6 462.3 540.2 462.4 537.7 461.5 535.0 458.9 533.8 456.3 534.8Z M497.2 552.6 497.3 554.8 497.3 558.1 497.5 561.8 497.9 565.6 498.7 569.0 499.6 572.3 500.7 575.5 501.8 578.6 503.0 581.8 504.2 585.0 505.5 588.2 506.9 591.4 508.5 594.7 510.2 598.1 511.8 601.3 513.3 604.2 515.6 607.8 516.7 610.3 516.9 612.6 516.8 615.6 516.7 617.3 513.7 622.0 512.9 628.7 513.6 632.3 514.6 635.3 515.5 638.4 516.4 641.9 517.2 645.6 517.9 649.3 518.3 652.6 518.5 655.9 518.5 659.9 518.3 662.8 517.9 666.1 517.4 669.7 517.0 673.5 516.6 677.2 516.4 680.4 516.1 683.6 515.9 686.9 515.8 690.2 515.7 693.3 515.6 696.3 515.7 700.1 515.9 703.5 516.2 706.9 516.6 710.5 517.2 713.9 517.9 717.8 518.7 721.5 519.3 724.7 519.8 726.9 521.3 729.1 523.8 729.6 526.0 728.1 526.4 725.6 526.0 723.3 525.3 720.1 524.6 716.4 523.9 712.8 523.4 709.5 522.9 706.1 522.6 703.0 522.4 699.9 522.4 696.2 522.4 693.5 522.5 690.5 522.7 687.3 522.9 684.1 523.1 680.9 523.4 677.8 523.7 674.2 524.2 670.5 524.6 666.9 525.0 663.4 525.3 660.1 525.3 655.7 525.1 651.9 524.6 648.2 523.9 644.2 522.9 640.3 522.0 636.6 521.0 633.3 520.1 630.4 519.6 628.8 520.1 624.2 522.8 620.2 523.6 616.2 523.7 612.4 523.3 608.5 521.5 604.5 519.2 600.8 517.8 598.2 516.2 595.1 514.6 591.8 513.1 588.6 511.8 585.5 510.5 582.5 509.3 579.4 508.2 576.4 507.1 573.3 506.1 570.2 505.2 567.3 504.6 564.4 504.2 561.3 504.1 557.9 504.1 554.7 504.0 552.4 503.0 550.1 500.6 549.1 498.2 550.1Z M519.3 622.4 520.4 624.3 522.0 626.9 523.9 630.0 526.0 633.3 528.2 636.4 530.1 638.7 532.1 641.0 534.2 643.3 536.4 645.6 538.6 648.0 540.9 650.3 542.9 652.4 545.1 654.6 547.3 656.9 549.5 659.1 551.7 661.3 553.9 663.4 555.9 665.4 558.7 667.9 561.3 670.3 563.8 672.6 566.2 674.7 568.5 676.7 571.4 679.3 574.3 681.8 576.8 683.9 578.5 685.5 580.2 686.0 581.7 685.2 582.3 683.6 581.5 682.0 579.7 680.5 577.3 678.4 574.4 675.9 571.5 673.3 569.2 671.3 566.8 669.2 564.3 667.0 561.7 664.6 559.1 662.1 557.0 660.2 554.9 658.1 552.7 655.9 550.5 653.7 548.3 651.5 546.2 649.3 544.1 647.2 541.9 644.8 539.6 642.5 537.5 640.3 535.5 638.0 533.6 635.8 531.8 633.6 529.7 630.8 527.7 627.6 525.9 624.6 524.3 622.0 523.2 620.1 521.8 619.1 520.1 619.3 519.1 620.7Z M518.7 628.2 519.6 630.1 520.8 632.7 522.4 635.9 524.1 639.1 526.1 642.2 527.9 644.6 529.9 646.9 532.0 649.2 534.2 651.5 536.5 653.8 538.8 656.2 540.8 658.3 542.9 660.4 545.1 662.6 547.2 664.8 549.5 667.0 551.7 669.1 553.8 671.2 556.4 673.7 559.0 676.1 561.6 678.5 564.1 680.9 566.6 683.1 568.9 685.1 572.3 687.7 575.6 690.1 578.4 691.9 580.3 693.3 581.6 693.5 582.6 692.8 582.9 691.6 582.2 690.5 580.3 689.1 577.5 687.3 574.4 685.0 571.1 682.4 568.8 680.5 566.4 678.4 563.9 676.1 561.3 673.6 558.7 671.2 556.2 668.8 554.0 666.7 551.8 664.6 549.6 662.4 547.5 660.2 545.3 658.0 543.2 655.9 541.2 653.8 538.9 651.5 536.7 649.1 534.5 646.9 532.5 644.7 530.6 642.5 528.9 640.3 527.1 637.4 525.4 634.3 523.9 631.3 522.7 628.6 521.8 626.8 520.8 625.9 519.5 626.0 518.6 626.9Z M522.7 645.9 524.2 647.6 526.2 649.9 528.7 652.6 531.3 655.6 534.0 658.4 536.0 660.5 538.1 662.6 540.2 664.7 542.4 666.9 544.7 669.1 546.9 671.3 549.0 673.5 551.2 675.6 553.4 677.9 555.6 680.1 557.8 682.4 559.9 684.5 562.1 686.6 564.1 688.5 566.9 691.0 569.7 693.2 572.3 695.3 574.7 697.1 576.7 698.6 580.3 701.1 582.4 702.4 583.4 702.6 584.3 702.0 584.4 700.9 583.8 700.1 581.8 698.9 578.3 696.4 576.3 694.9 573.9 693.1 571.4 691.1 568.6 688.9 565.9 686.5 563.9 684.6 561.9 682.6 559.7 680.5 557.5 678.2 555.3 676.0 553.1 673.7 551.0 671.5 548.8 669.4 546.6 667.2 544.3 665.0 542.1 662.8 540.0 660.6 537.9 658.6 536.0 656.6 533.3 653.7 530.7 650.8 528.3 648.1 526.2 645.8 524.8 644.1 523.8 643.6 522.9 644.0 522.4 644.9Z M524.4 655.4 525.7 656.9 527.5 658.9 529.6 661.3 532.0 664.0 534.4 666.7 536.5 668.9 538.7 671.4 541.0 673.9 543.4 676.5 545.8 679.2 548.2 681.7 550.3 683.9 552.5 686.2 554.7 688.4 556.9 690.7 559.1 692.9 561.3 694.9 563.3 696.8 566.1 699.3 568.8 701.5 571.4 703.5 573.8 705.4 576.1 707.0 579.7 709.5 582.8 711.4 585.0 712.7 586.8 713.0 588.4 711.9 588.7 710.0 587.5 708.5 585.4 707.2 582.4 705.3 578.9 703.0 576.8 701.4 574.4 699.6 571.9 697.6 569.3 695.5 566.7 693.2 564.7 691.3 562.6 689.3 560.4 687.2 558.2 684.9 556.1 682.7 553.9 680.5 551.8 678.3 549.4 675.8 547.0 673.2 544.7 670.6 542.4 668.1 540.2 665.6 538.1 663.3 535.7 660.7 533.4 658.0 531.2 655.6 529.4 653.6 528.1 652.1 526.4 651.3 524.6 651.9 523.8 653.6Z M582.1 684.5 582.9 682.3 584.1 679.2 585.5 675.6 586.9 671.8 588.3 668.4 589.7 665.1 591.1 661.8 592.6 658.6 594.1 655.4 595.7 652.3 597.2 649.8 598.7 647.3 600.3 644.8 602.0 642.4 603.7 640.0 605.5 637.6 607.4 635.3 609.4 633.0 611.4 630.7 613.5 628.5 615.7 626.3 617.8 624.1 620.0 622.0 622.2 619.8 624.5 617.8 626.8 615.7 629.1 613.7 631.4 611.7 633.9 609.8 636.5 607.8 639.1 605.8 641.7 603.9 644.1 602.2 646.3 600.6 650.3 598.0 653.8 595.9 656.2 594.4 657.2 593.1 656.9 591.3 655.6 590.3 653.8 590.6 651.4 592.0 647.9 594.2 643.7 596.9 641.5 598.5 639.0 600.3 636.4 602.2 633.7 604.2 631.1 606.2 628.6 608.3 626.2 610.3 623.8 612.3 621.4 614.4 619.1 616.5 616.9 618.7 614.7 620.9 612.5 623.1 610.3 625.4 608.1 627.7 606.0 630.0 603.9 632.4 602.0 634.9 600.1 637.3 598.3 639.8 596.6 642.3 594.9 644.9 593.3 647.5 591.8 650.2 590.1 653.4 588.5 656.7 587.0 660.0 585.6 663.3 584.2 666.6 582.7 670.2 581.2 674.0 579.9 677.6 578.7 680.7 577.9 683.0 577.9 684.7 579.2 685.9 580.9 685.8Z M582.6 692.4 583.4 690.4 584.5 687.7 585.8 684.4 587.2 681.0 588.6 677.5 590.0 674.3 591.4 671.4 592.8 668.4 594.2 665.4 595.7 662.5 597.2 659.7 598.7 657.0 600.3 654.3 601.8 651.8 603.4 649.3 605.1 646.9 606.8 644.5 608.6 642.1 610.5 639.8 612.5 637.5 614.6 635.2 616.7 632.9 618.8 630.7 621.0 628.5 623.2 626.3 625.5 624.2 627.7 622.1 630.1 620.0 632.4 618.0 634.7 616.1 637.5 613.8 640.4 611.5 643.3 609.3 646.0 607.2 648.3 605.5 651.5 603.3 654.0 601.7 655.8 600.6 656.4 599.7 656.2 598.6 655.3 598.0 654.2 598.2 652.5 599.3 649.9 600.9 646.7 603.2 644.3 605.0 641.6 607.0 638.7 609.2 635.7 611.6 632.8 613.9 630.5 615.9 628.2 617.9 625.8 620.0 623.5 622.1 621.2 624.3 619.0 626.5 616.8 628.7 614.6 631.0 612.5 633.3 610.4 635.6 608.3 638.0 606.4 640.4 604.5 642.8 602.8 645.3 601.1 647.7 599.5 650.3 597.9 652.9 596.3 655.5 594.7 658.3 593.2 661.2 591.7 664.2 590.3 667.2 588.8 670.2 587.5 673.2 586.0 676.4 584.6 679.9 583.1 683.4 581.8 686.6 580.7 689.4 579.9 691.3 579.9 692.4 580.7 693.2 581.8 693.2Z M584.4 701.8 585.3 699.7 586.5 696.9 587.9 693.5 589.5 689.9 591.1 686.3 592.5 683.1 593.9 680.1 595.3 677.2 596.7 674.3 598.1 671.4 599.6 668.6 601.2 665.7 602.9 662.8 604.7 659.8 606.6 656.9 608.5 653.9 610.4 651.1 612.4 648.3 614.4 645.7 616.4 643.2 618.4 640.7 620.5 638.2 622.6 635.8 624.8 633.5 627.0 631.0 629.3 628.6 631.7 626.2 634.0 623.9 636.3 621.7 638.4 619.8 641.5 617.3 644.4 615.2 647.1 613.4 649.5 611.8 653.3 609.5 655.7 608.1 656.4 607.3 656.2 606.2 655.4 605.5 654.3 605.6 651.9 607.0 648.0 609.4 645.6 611.0 642.8 612.9 639.7 615.1 636.6 617.7 634.4 619.7 632.1 621.9 629.7 624.2 627.3 626.6 625.0 629.1 622.7 631.5 620.5 634.0 618.4 636.4 616.3 638.9 614.2 641.4 612.1 644.0 610.1 646.7 608.1 649.5 606.1 652.4 604.2 655.3 602.3 658.3 600.5 661.3 598.8 664.3 597.1 667.2 595.6 670.1 594.2 673.0 592.8 676.0 591.4 678.9 590.0 681.9 588.5 685.2 586.9 688.8 585.3 692.4 583.9 695.8 582.7 698.6 581.8 700.7 581.8 701.8 582.6 702.5 583.7 702.6Z M588.5 711.6 589.3 709.8 590.4 707.3 591.7 704.3 593.1 701.2 594.5 697.9 596.0 694.8 597.3 692.3 598.6 689.6 600.0 686.9 601.4 684.2 602.9 681.5 604.4 678.9 605.9 676.3 607.7 673.3 609.5 670.3 611.3 667.4 613.2 664.6 615.1 661.7 617.0 658.9 619.0 656.2 621.1 653.4 623.1 650.7 625.2 648.0 627.3 645.4 629.4 642.8 631.5 640.4 633.6 638.0 635.7 635.7 637.7 633.5 639.8 631.3 641.8 629.2 644.2 626.7 646.6 624.3 648.9 621.9 651.1 619.9 652.9 618.1 656.6 615.0 659.0 613.2 660.0 611.6 659.5 609.8 657.9 608.8 656.0 609.3 653.5 611.1 649.6 614.4 647.6 616.3 645.4 618.4 643.1 620.8 640.6 623.3 638.2 625.8 636.2 627.9 634.1 630.1 632.0 632.4 629.9 634.7 627.7 637.2 625.6 639.7 623.5 642.2 621.3 644.9 619.2 647.6 617.1 650.4 615.0 653.2 613.0 656.1 611.0 658.9 609.0 661.8 607.1 664.7 605.3 667.7 603.4 670.7 601.6 673.7 600.1 676.4 598.6 679.1 597.1 681.9 595.6 684.6 594.2 687.4 592.8 690.0 591.5 692.7 590.0 695.8 588.5 699.1 587.1 702.4 585.8 705.3 584.8 707.8 584.0 709.6 583.9 711.5 585.3 712.9 587.2 712.9Z M650.7 589.4 651.4 592.3 652.3 596.4 653.2 600.7 653.9 603.7 654.7 606.8 655.3 609.8 655.7 612.8 655.8 615.9 655.8 619.2 655.5 622.5 655.1 625.7 654.4 628.9 653.4 632.2 652.2 635.5 650.9 638.8 649.7 641.4 648.3 644.1 646.9 646.8 645.3 649.5 643.7 652.0 641.9 654.5 640.0 657.0 638.1 659.4 636.0 661.8 633.9 664.2 631.8 666.5 629.7 668.7 627.5 671.0 625.3 673.3 623.1 675.5 621.0 677.6 618.9 679.8 616.7 681.9 614.6 684.0 612.6 686.3 610.0 689.3 607.3 692.6 605.1 695.5 603.5 697.5 604.0 698.0 606.0 696.3 608.8 693.9 611.9 691.3 614.9 688.7 617.2 687.0 619.6 685.2 622.0 683.4 624.5 681.5 626.9 679.5 629.3 677.4 631.7 675.3 634.0 673.1 636.3 670.7 638.6 668.3 640.7 665.9 642.8 663.4 644.9 660.8 646.9 658.2 648.8 655.5 650.6 652.7 652.3 649.9 653.8 647.0 655.3 644.1 656.6 641.2 658.1 637.7 659.3 634.1 660.4 630.5 661.2 626.8 661.7 623.1 662.0 619.4 662.0 615.8 661.8 612.2 661.4 608.8 660.7 605.4 660.0 602.3 659.3 599.3 658.4 595.1 657.4 590.9 656.8 588.1 655.4 586.1 653.1 585.7 651.1 587.1Z M645.0 653.1 643.6 655.4 641.5 658.7 639.3 662.4 637.4 665.8 635.5 669.4 634.0 672.9 632.8 676.4 631.8 679.9 631.0 683.5 630.7 687.4 630.8 690.7 631.1 694.0 631.5 697.3 632.0 700.6 632.6 703.8 633.2 706.9 633.9 710.0 634.5 713.1 635.1 716.7 635.7 720.7 636.2 724.3 636.6 726.8 638.1 729.2 640.8 729.9 643.2 728.4 643.9 725.7 643.5 723.2 643.0 719.6 642.4 715.6 641.7 711.9 641.1 708.5 640.4 705.4 639.8 702.4 639.3 699.4 638.8 696.3 638.4 693.2 638.1 690.2 638.0 687.6 638.3 684.5 638.9 681.6 639.7 678.6 640.8 675.6 642.2 672.6 643.9 669.2 645.6 666.1 647.8 662.5 649.8 659.2 651.3 656.9 651.7 654.2 650.1 651.9 647.3 651.4Z M638.5 688.0 640.5 689.0 643.4 690.5 646.8 692.1 650.2 693.9 653.4 695.5 656.4 697.1 659.5 698.8 662.5 700.5 665.6 702.1 668.4 703.6 671.8 705.3 674.9 707.0 678.2 708.4 681.7 709.5 685.1 710.2 688.5 710.5 691.9 710.4 695.3 710.3 698.8 709.9 702.5 709.3 706.1 708.5 709.6 707.7 713.3 706.6 717.0 705.4 720.2 704.2 722.4 703.4 724.3 701.7 724.4 699.1 722.7 697.2 720.1 697.1 717.9 697.8 714.8 699.0 711.2 700.1 707.9 701.1 704.6 701.9 701.2 702.6 697.9 703.1 694.7 703.5 691.7 703.7 688.8 703.7 686.0 703.5 683.3 703.0 680.7 702.1 677.9 700.8 674.8 699.3 671.6 697.6 668.8 696.2 665.8 694.6 662.8 692.9 659.7 691.1 656.6 689.5 653.3 687.8 649.8 686.1 646.4 684.4 643.5 683.0 641.5 682.0 638.9 681.8 637.0 683.5 636.8 686.1Z M518.2 655.9 517.9 658.1 517.6 661.1 517.2 664.6 516.8 668.5 516.4 672.5 516.0 676.3 515.7 679.7 515.3 683.3 515.1 686.7 514.8 690.0 514.6 693.3 514.4 696.6 514.4 700.0 514.5 703.4 514.6 706.9 514.9 710.2 515.2 713.6 515.4 716.9 515.6 720.2 515.8 723.5 516.0 726.8 516.1 730.1 516.3 733.4 516.4 736.7 516.4 740.0 516.3 743.2 516.2 746.5 516.0 749.8 515.8 753.2 515.7 756.6 515.6 760.0 515.7 763.4 515.8 766.9 516.0 770.3 516.2 773.8 516.5 777.1 516.9 780.4 517.6 784.5 518.5 788.7 519.4 792.6 520.2 795.9 520.7 798.2 522.1 800.1 524.5 800.5 526.4 799.1 526.8 796.8 526.2 794.4 525.4 791.2 524.5 787.4 523.7 783.4 523.1 779.6 522.7 776.5 522.4 773.3 522.2 770.0 522.0 766.6 521.9 763.3 521.9 760.0 521.9 756.7 522.0 753.5 522.2 750.2 522.4 746.8 522.5 743.4 522.6 740.0 522.6 736.6 522.5 733.2 522.4 729.9 522.2 726.5 522.0 723.2 521.9 719.8 521.6 716.4 521.4 713.1 521.1 709.8 520.9 706.5 520.7 703.2 520.6 700.0 520.7 696.8 520.8 693.6 521.0 690.5 521.2 687.2 521.5 683.8 521.8 680.3 522.2 676.9 522.5 673.1 523.0 669.2 523.4 665.3 523.8 661.8 524.1 658.8 524.3 656.6 523.7 654.3 521.6 653.2 519.3 653.8Z M523.8 799.8 528.2 799.4 529.7 793.9 529.3 793.6 525.8 795.6 523.8 795.2 522.2 795.9 521.5 797.5 522.2 799.1Z M518.1 721.3 519.2 722.9 520.9 725.4 523.1 728.7 524.5 730.8 526.0 733.3 527.8 736.0 529.6 738.7 531.4 741.4 533.3 743.8 535.8 746.5 538.5 749.0 541.2 751.3 543.6 753.1 545.3 754.4 545.7 754.1 544.5 752.3 542.8 749.8 540.8 747.0 538.7 744.0 536.7 741.2 535.1 738.8 533.3 736.2 531.6 733.5 529.8 730.8 528.3 728.4 526.9 726.3 524.7 722.9 523.0 720.4 521.9 718.7 520.4 717.8 518.7 718.1 517.8 719.6Z M573.5 723.7 573.1 725.9 572.5 728.8 571.8 732.4 571.2 736.2 570.9 740.0 570.7 743.2 570.7 746.5 570.8 749.9 571.1 753.4 571.4 756.8 571.8 760.3 572.3 763.6 572.9 767.0 573.5 770.4 574.2 773.7 574.9 777.1 575.6 780.4 576.2 783.8 576.8 787.3 577.5 790.8 578.2 794.2 579.0 797.4 579.8 800.3 581.2 804.3 582.6 808.0 583.9 811.0 584.8 813.1 585.2 812.9 584.8 810.7 584.1 807.5 583.4 803.8 582.7 799.7 582.2 796.7 581.8 793.5 581.3 790.1 580.7 786.6 580.1 783.1 579.4 779.6 578.8 776.3 578.1 772.9 577.4 769.6 576.8 766.3 576.2 763.0 575.7 759.7 575.3 756.4 575.0 753.0 574.8 749.6 574.5 746.3 574.3 743.1 574.1 740.0 574.0 736.3 573.9 732.5 574.0 729.0 574.0 725.9 574.0 723.8Z M631.6 682.7 631.7 685.0 631.9 688.3 632.1 692.2 632.4 696.4 632.9 700.4 633.4 703.8 634.0 707.1 634.7 710.5 635.4 713.9 636.1 717.3 636.7 720.6 637.2 723.9 637.7 727.2 638.2 730.5 638.6 733.7 638.9 736.9 639.1 740.1 639.2 743.4 639.1 746.7 639.0 750.1 638.7 753.4 638.4 756.5 637.9 759.4 637.2 762.6 636.4 765.6 635.3 768.4 634.3 771.1 633.2 773.5 631.3 776.9 629.2 780.0 627.1 783.2 625.1 786.6 623.3 790.1 621.8 794.0 621.0 797.5 620.5 801.0 620.3 804.6 620.4 808.1 621.8 813.4 623.4 816.9 625.3 818.7 627.9 818.6 629.7 816.7 629.6 814.1 628.3 811.2 627.1 806.9 627.1 804.7 627.3 801.7 627.7 798.6 628.2 796.0 629.4 792.9 631.1 789.9 632.9 786.8 634.9 783.7 637.1 780.5 639.3 776.5 640.5 773.7 641.7 770.8 642.8 767.6 643.8 764.2 644.6 760.6 645.1 757.4 645.5 754.0 645.7 750.5 645.9 747.0 645.9 743.4 645.9 739.9 645.7 736.4 645.4 733.0 644.9 729.5 644.4 726.1 643.9 722.8 643.3 719.4 642.8 716.0 642.1 712.6 641.4 709.2 640.7 705.8 640.1 702.6 639.6 699.6 639.2 695.7 638.9 691.8 638.7 687.9 638.5 684.7 638.4 682.3 637.3 680.0 634.8 679.1 632.5 680.2Z M679.6 709.3 681.5 709.6 684.2 710.0 687.6 710.5 691.4 710.7 695.3 710.6 698.6 710.1 702.0 709.5 705.6 708.6 709.2 707.7 712.7 706.6 716.1 705.4 719.3 704.2 722.6 702.8 725.7 701.3 728.8 699.7 731.7 698.0 734.3 696.3 737.0 694.2 739.5 692.1 741.8 689.7 743.8 686.9 745.4 683.7 746.4 680.4 747.1 676.9 747.5 673.3 747.7 669.7 747.9 666.1 748.1 662.6 748.3 659.0 748.3 655.1 748.3 651.2 748.2 647.6 748.1 644.6 748.1 642.5 747.2 640.3 745.0 639.4 742.8 640.3 741.9 642.5 741.9 644.7 742.0 647.7 742.0 651.3 742.1 655.1 742.0 658.9 741.9 662.4 741.7 665.8 741.5 669.3 741.3 672.8 740.9 676.0 740.4 678.9 739.6 681.3 738.4 683.8 737.0 685.8 735.3 687.6 733.2 689.4 730.7 691.2 728.4 692.8 725.8 694.3 723.0 695.7 720.0 697.1 717.0 698.4 713.9 699.6 710.8 700.7 707.5 701.7 704.1 702.6 700.7 703.4 697.6 704.0 694.7 704.4 691.5 704.5 688.2 704.3 685.1 703.9 682.4 703.4 680.4 703.2 678.1 703.8 676.9 705.8 677.5 708.1Z M746.5 682.8 748.5 682.6 751.3 682.4 754.6 682.2 758.3 681.8 762.2 681.1 765.8 680.2 768.8 679.1 771.8 677.8 774.8 676.4 777.7 674.8 780.6 673.2 783.5 671.6 786.4 670.0 789.3 668.3 792.3 666.5 795.2 664.7 798.1 662.9 801.0 661.0 803.8 659.2 806.6 657.4 809.2 655.6 811.9 653.9 814.6 652.1 817.3 650.3 819.8 648.5 822.3 646.6 824.5 644.5 826.8 641.9 828.8 639.3 830.5 636.6 832.1 634.0 833.5 631.4 835.0 628.9 836.7 625.9 838.3 622.8 839.8 619.8 841.2 616.8 842.6 613.6 844.1 610.1 845.5 606.3 846.9 602.6 848.1 599.5 848.9 597.2 848.8 595.1 847.2 593.6 845.1 593.7 843.6 595.3 842.8 597.5 841.6 600.7 840.3 604.3 838.8 608.0 837.4 611.4 836.1 614.4 834.7 617.4 833.2 620.3 831.7 623.2 830.0 626.1 828.6 628.6 827.2 631.2 825.7 633.7 824.2 636.1 822.5 638.3 820.5 640.5 818.6 642.3 816.4 644.0 814.0 645.7 811.5 647.4 808.9 649.1 806.2 650.9 803.4 652.6 800.7 654.4 797.9 656.3 795.1 658.1 792.2 659.9 789.3 661.7 786.5 663.4 783.6 665.0 780.7 666.7 777.9 668.3 775.0 669.9 772.2 671.4 769.4 672.7 766.7 673.9 764.2 674.8 761.0 675.6 757.6 676.2 754.1 676.6 750.9 676.8 748.1 677.0 746.0 677.2 744.1 678.2 743.4 680.3 744.4 682.2Z M828.3 634.2 827.7 636.2 827.0 638.9 826.1 642.1 825.1 645.7 824.1 649.4 823.0 653.1 822.0 656.6 821.1 659.7 820.2 662.8 819.3 665.9 818.4 669.1 817.4 672.3 816.4 675.5 815.5 678.6 814.5 681.6 813.5 684.9 812.4 688.1 811.3 691.3 810.3 694.5 809.2 697.6 808.1 700.8 807.1 704.0 806.0 707.2 804.9 710.5 803.9 713.7 802.9 716.9 801.8 720.1 800.7 723.3 799.6 726.5 798.6 729.3 797.5 732.1 796.5 734.9 795.5 737.6 794.4 740.4 793.3 743.2 792.1 746.0 790.9 748.7 789.7 751.5 788.4 754.3 787.1 757.1 785.7 759.9 784.3 762.6 782.9 765.4 781.4 768.2 779.8 770.9 778.4 773.4 776.9 775.9 775.3 778.3 773.8 780.8 772.1 783.3 770.5 785.7 768.7 788.2 766.9 790.6 765.0 793.1 763.3 795.3 761.4 797.5 759.5 799.8 757.5 802.1 755.5 804.3 753.5 806.6 751.4 808.8 749.3 811.0 747.3 813.2 745.2 815.4 743.0 817.7 740.8 820.0 738.5 822.3 736.3 824.6 734.0 826.8 731.8 829.0 729.6 831.1 727.4 833.2 725.3 835.3 722.6 837.9 719.9 840.5 717.1 843.0 714.5 845.5 712.0 847.7 709.8 849.7 707.9 851.5 704.2 854.9 702.9 855.8 701.5 855.8 698.8 854.7 695.7 852.9 691.9 850.5 689.2 848.7 686.9 848.2 684.9 849.5 684.5 851.9 685.8 853.8 688.5 855.7 692.5 858.2 696.2 860.3 700.2 861.9 704.6 861.7 708.1 859.8 712.1 856.0 714.0 854.4 716.2 852.3 718.7 850.1 721.4 847.6 724.1 845.0 726.9 842.4 729.7 839.7 731.8 837.7 733.9 835.6 736.2 833.4 738.4 831.2 740.7 829.0 742.9 826.7 745.2 824.4 747.5 822.0 749.8 819.6 751.8 817.5 753.8 815.3 755.9 813.0 758.0 810.8 760.1 808.5 762.2 806.2 764.2 803.9 766.2 801.5 768.1 799.2 770.0 796.9 771.9 794.4 773.8 791.8 775.6 789.3 777.3 786.7 779.0 784.2 780.6 781.7 782.2 779.1 783.7 776.6 785.2 774.1 786.8 771.2 788.4 768.3 789.9 765.5 791.3 762.6 792.7 759.8 794.0 756.9 795.3 754.1 796.6 751.3 797.8 748.4 799.0 745.5 800.2 742.7 801.3 739.9 802.3 737.0 803.4 734.2 804.4 731.4 805.4 728.5 806.6 725.3 807.7 722.1 808.8 718.8 809.8 715.6 810.8 712.4 811.9 709.2 812.9 706.0 814.0 702.8 815.1 699.6 816.2 696.5 817.2 693.3 818.3 690.1 819.4 686.8 820.5 683.4 821.4 680.4 822.4 677.3 823.3 674.1 824.3 670.9 825.3 667.7 826.2 664.5 827.1 661.4 828.0 658.4 829.0 654.8 830.1 651.1 831.1 647.3 832.1 643.8 833.0 640.5 833.7 637.8 834.2 635.8 834.0 633.5 832.1 632.0 829.7 632.3Z M801.6 719.4 799.8 721.0 797.2 723.3 794.5 726.1 792.3 729.0 790.4 732.2 788.8 735.7 787.6 738.9 786.8 741.1 787.2 741.4 788.8 739.5 790.9 736.9 793.2 733.9 795.2 731.0 797.2 728.0 799.2 724.8 800.8 721.8 801.9 719.6Z M267.4 762.5 268.7 763.9 270.3 765.7 272.1 767.9 274.2 770.3 276.5 772.9 279.0 775.6 281.6 778.3 284.2 780.9 286.9 783.4 289.5 785.6 292.0 787.5 294.5 789.3 297.2 791.1 299.9 792.9 302.7 794.6 305.5 796.3 308.4 797.9 311.2 799.5 314.1 801.0 316.9 802.4 319.7 803.7 322.7 805.1 325.7 806.3 328.7 807.4 331.8 808.4 334.8 809.4 337.8 810.3 340.8 811.2 343.8 812.0 346.8 812.9 349.8 813.8 352.7 814.6 355.6 815.4 358.5 816.1 361.3 816.9 364.2 817.6 367.1 818.2 370.1 819.0 373.2 819.7 376.4 820.4 379.8 821.3 382.6 821.9 385.6 822.7 388.7 823.4 391.9 824.2 395.2 825.0 398.5 825.8 401.8 826.6 405.1 827.4 408.3 828.1 411.4 828.8 414.4 829.5 417.2 830.2 419.8 830.8 423.7 831.6 427.1 832.4 430.3 833.0 433.3 833.6 436.1 834.1 439.0 834.7 441.8 835.2 444.9 835.8 448.1 836.4 451.5 837.0 454.9 837.7 458.3 838.3 461.6 838.9 464.7 839.4 467.5 839.9 469.9 840.3 474.4 841.0 477.4 841.4 480.1 841.3 484.0 840.4 487.9 838.2 490.3 836.3 492.9 834.1 495.5 831.4 498.1 828.0 499.6 825.6 501.1 823.0 502.6 820.1 504.1 817.1 505.5 814.0 506.9 810.9 508.2 807.8 509.5 804.6 510.7 801.3 511.8 797.9 512.9 794.5 514.0 791.2 514.9 788.1 515.8 785.2 516.8 781.5 517.7 777.9 518.5 774.7 519.1 772.1 519.5 770.2 519.4 769.6 518.9 769.2 518.3 769.3 518.0 769.8 517.5 771.7 516.9 774.4 516.2 777.6 515.3 781.1 514.2 784.8 513.4 787.6 512.4 790.7 511.4 794.0 510.3 797.4 509.2 800.8 508.0 804.1 506.8 807.2 505.5 810.3 504.1 813.4 502.7 816.4 501.2 819.4 499.7 822.2 498.3 824.8 496.9 827.0 494.3 830.4 491.8 833.0 489.3 835.1 487.1 836.8 483.5 839.0 479.9 839.7 477.4 839.8 474.7 839.5 470.1 838.7 467.7 838.3 464.9 837.9 461.9 837.3 458.6 836.7 455.2 836.1 451.7 835.5 448.4 834.8 445.1 834.2 442.1 833.7 439.2 833.1 436.4 832.6 433.6 832.0 430.6 831.5 427.5 830.8 424.0 830.1 420.2 829.2 417.6 828.6 414.7 828.0 411.8 827.3 408.7 826.6 405.4 825.8 402.2 825.0 398.8 824.2 395.5 823.4 392.2 822.7 389.0 821.9 385.9 821.1 383.0 820.4 380.2 819.7 376.8 818.9 373.5 818.1 370.4 817.4 367.5 816.7 364.6 816.0 361.7 815.3 358.9 814.6 356.0 813.9 353.2 813.1 350.2 812.2 347.2 811.4 344.2 810.5 341.2 809.7 338.2 808.8 335.2 807.9 332.2 806.9 329.3 805.9 326.3 804.8 323.3 803.6 320.3 802.3 317.6 801.0 314.8 799.6 312.0 798.1 309.1 796.6 306.3 795.0 303.5 793.3 300.7 791.6 298.0 789.8 295.4 788.0 292.9 786.2 290.5 784.4 287.9 782.2 285.3 779.8 282.7 777.2 280.1 774.5 277.7 771.8 275.4 769.3 273.3 766.8 271.5 764.7 269.9 762.9 268.6 761.5 268.0 761.2 267.5 761.4 267.2 762.0Z M683.5 542.2 681.4 543.7 678.4 545.7 675.4 547.8 672.8 549.6 670.1 551.4 667.4 553.4 664.6 555.6 661.7 558.0 659.1 560.9 656.9 564.2 655.0 567.8 653.6 571.6 652.5 575.6 651.9 579.6 651.6 583.6 651.5 587.6 651.7 591.6 652.2 595.4 653.0 599.0 654.0 602.4 655.1 605.7 656.4 609.0 657.8 612.3 658.9 615.4 659.8 618.7 660.4 622.1 661.0 625.1 662.2 630.3 662.8 630.2 662.7 624.9 662.7 621.9 662.7 618.3 662.3 614.6 661.6 611.1 660.7 607.6 659.9 604.3 659.1 601.0 658.3 597.8 657.8 594.6 657.4 591.1 657.2 587.5 657.2 583.9 657.5 580.3 658.1 576.7 658.9 573.4 660.2 570.1 661.7 567.0 663.4 564.1 665.4 561.5 667.7 559.0 670.1 556.6 672.4 554.2 674.7 552.0 677.1 549.7 679.6 547.2 682.2 544.6 684.0 542.8Z M689.7 572.4 688.8 575.6 687.2 579.6 685.5 581.8 683.4 584.1 681.2 586.2 678.8 588.1 676.0 590.0 673.4 592.0 670.0 595.1 667.2 598.6 665.3 602.4 664.0 606.9 663.5 610.0 663.0 613.4 662.7 617.1 662.5 621.1 662.4 624.0 662.3 626.9 662.4 630.0 662.4 633.2 662.4 636.5 662.5 640.0 662.5 642.9 662.5 646.3 662.5 649.8 662.5 653.4 662.5 656.8 662.5 659.9 662.5 662.5 662.5 664.4 663.2 666.2 665.0 666.9 666.8 666.2 667.5 664.4 667.5 662.5 667.5 659.9 667.5 656.8 667.5 653.4 667.5 649.8 667.5 646.3 667.5 642.9 667.5 640.0 667.5 636.5 667.5 633.1 667.4 629.9 667.4 626.9 667.5 624.1 667.5 621.4 667.8 617.5 668.1 613.9 668.5 610.8 669.0 608.1 670.1 604.2 671.5 601.4 673.8 598.5 676.6 595.5 678.8 593.5 681.4 591.3 683.8 588.8 685.9 586.1 687.7 583.3 689.1 580.4 690.0 575.9 690.3 572.6Z M673.6 598.7 672.3 601.4 670.7 605.3 669.3 609.7 668.7 612.6 668.4 615.5 668.2 618.6 668.1 621.7 668.1 625.0 668.2 628.7 668.5 632.8 669.0 636.8 669.5 640.3 669.8 642.8 670.2 642.7 670.4 640.3 670.7 636.8 671.0 632.7 671.3 628.7 671.4 625.0 671.5 621.8 671.6 618.7 671.7 615.7 671.8 612.9 672.0 610.3 672.6 605.8 673.4 601.7 673.9 598.8Z M665.3 664.5 666.6 662.2 668.4 659.0 670.6 655.4 672.7 652.1 674.5 649.7 676.3 647.3 678.2 644.9 680.1 642.6 682.0 640.5 684.5 637.9 687.0 635.4 689.5 633.0 691.8 630.9 694.7 628.7 697.6 626.9 700.5 624.7 703.3 622.3 706.1 619.7 708.5 616.7 710.7 613.3 712.4 609.7 713.9 606.0 715.1 602.2 716.1 598.2 716.6 593.9 716.6 590.4 716.2 586.8 715.7 583.2 715.1 579.6 714.4 576.6 713.6 573.5 712.7 570.6 712.0 567.7 711.7 565.1 711.8 561.4 712.3 557.4 713.0 553.9 713.5 551.3 712.8 551.2 711.9 553.5 710.5 556.9 709.2 560.9 708.3 564.9 708.3 568.1 708.6 571.4 709.1 574.5 709.5 577.5 709.9 580.4 710.3 583.9 710.6 587.4 710.9 590.7 710.9 593.6 710.5 597.2 709.7 600.7 708.6 604.0 707.3 607.4 705.7 610.5 704.0 613.3 701.9 615.8 699.5 618.1 697.0 620.3 694.4 622.2 691.4 624.1 688.2 626.6 685.6 628.9 683.0 631.4 680.4 634.1 678.0 637.0 676.1 639.5 674.4 642.2 672.7 644.9 671.2 647.6 669.8 650.4 668.2 654.2 666.7 658.2 665.5 661.8 664.7 664.2Z M686.9 632.0 686.6 634.0 686.1 636.9 685.6 640.4 685.2 644.0 685.0 647.5 685.1 650.7 685.4 653.9 685.8 657.1 686.3 660.3 687.0 663.3 688.1 666.8 689.6 670.1 691.2 673.0 692.8 675.9 694.6 679.2 696.6 682.6 698.4 685.7 699.7 687.9 700.3 687.6 699.8 685.2 699.1 681.7 698.2 677.8 697.2 674.1 696.2 670.8 695.0 667.7 693.9 664.7 693.0 661.7 692.4 659.1 691.9 656.2 691.5 653.3 691.3 650.4 691.2 647.5 691.4 644.5 691.8 641.2 692.3 637.9 692.8 635.0 693.1 633.0 692.5 630.7 690.5 629.4 688.2 630.0Z M700.4 687.7 700.3 685.6 700.3 682.5 700.3 679.0 700.3 675.6 700.6 672.6 701.1 669.4 701.9 666.4 702.8 663.6 703.8 660.9 705.2 657.5 706.8 654.5 708.6 652.0 710.8 650.1 713.6 648.3 716.7 646.4 719.7 644.4 722.8 642.4 725.9 639.8 728.1 637.4 730.2 634.8 732.2 632.0 734.0 629.0 735.5 625.9 736.9 622.7 738.1 619.4 739.2 615.9 740.1 613.0 741.0 609.9 741.9 606.7 742.6 603.5 743.1 600.4 743.5 596.9 743.6 593.6 743.4 590.3 743.0 587.0 742.2 583.7 741.1 580.4 739.9 577.2 738.6 574.1 737.1 571.0 735.5 567.9 733.9 564.9 732.6 562.1 731.3 558.2 730.4 554.5 729.7 551.8 729.0 551.9 729.1 554.7 729.3 558.6 729.9 562.9 730.7 566.1 731.8 569.4 732.9 572.7 733.9 575.9 734.8 579.0 735.7 582.1 736.5 585.1 737.0 588.0 737.3 590.8 737.4 593.6 737.3 596.5 736.9 599.6 736.5 602.3 735.8 605.2 735.0 608.2 734.2 611.2 733.3 614.1 732.2 617.3 731.1 620.4 729.9 623.3 728.5 626.0 727.0 628.6 725.3 631.0 723.4 633.3 721.6 635.2 719.1 637.4 716.3 639.2 713.3 641.1 710.3 643.1 707.0 645.2 703.9 648.0 701.6 651.5 699.9 655.2 698.7 659.1 697.9 662.2 697.3 665.4 697.0 668.9 696.9 672.4 697.2 675.7 697.8 679.2 698.5 682.7 699.2 685.7 699.6 687.8Z M697.9 626.2 696.8 628.2 695.2 631.1 694.0 634.7 693.4 638.0 693.3 641.8 693.5 645.3 693.8 647.7 694.2 647.8 695.0 645.5 696.0 642.1 696.8 638.4 697.3 635.3 697.8 631.8 698.1 628.6 698.3 626.3Z M723.4 638.6 723.3 641.1 723.1 644.5 722.3 647.8 721.1 650.4 719.6 653.8 718.6 657.3 718.0 659.8 718.5 660.2 720.6 658.6 723.5 656.2 726.0 653.1 727.7 649.7 728.7 645.4 728.9 641.5 729.1 638.9 728.3 636.8 726.4 635.9 724.3 636.7Z M718.4 660.3 720.7 659.2 723.9 657.7 727.6 655.8 731.0 653.9 733.5 652.2 736.1 650.5 738.6 648.6 741.0 646.5 743.3 644.3 745.5 642.0 747.5 639.4 749.4 636.8 751.2 634.1 752.7 631.5 754.4 628.3 755.8 625.1 757.1 621.7 758.0 618.2 758.6 615.2 759.0 612.0 759.3 608.8 759.4 605.6 759.4 602.4 759.1 599.1 758.6 595.9 757.9 592.8 757.1 589.7 756.3 586.9 755.3 583.6 754.2 580.5 753.0 577.4 751.6 574.4 749.7 571.0 747.5 567.5 745.5 564.5 744.1 562.3 743.4 562.7 744.4 565.0 745.8 568.4 747.2 572.2 748.4 575.6 749.3 578.7 750.0 581.7 750.6 584.8 751.2 588.1 751.7 590.9 752.2 593.9 752.6 596.9 753.0 599.8 753.1 602.6 753.2 605.5 753.1 608.4 752.9 611.3 752.5 614.2 752.0 616.8 751.1 619.9 750.1 622.7 748.8 625.6 747.3 628.5 745.9 630.9 744.3 633.4 742.7 635.9 741.0 638.4 739.2 640.7 737.3 642.9 735.3 645.0 733.3 647.1 731.1 649.2 729.0 651.1 726.1 653.6 722.9 656.1 720.1 658.2 718.1 659.7Z M731.7 627.5 730.6 630.7 730.1 634.0 730.0 637.2 730.4 640.5 731.3 643.7 731.7 643.8 732.7 640.5 733.3 637.3 733.4 634.0 733.0 630.8 732.1 627.5Z M770.4 566.3 770.4 568.3 770.5 571.3 770.6 574.7 770.7 578.2 770.9 581.5 771.2 584.6 771.6 587.7 772.1 590.7 772.5 593.6 772.7 596.4 772.9 599.9 772.9 603.3 772.6 606.5 772.2 609.6 771.5 612.4 770.7 615.0 769.6 617.5 768.1 620.0 766.6 622.0 764.9 624.1 762.9 626.3 760.8 628.7 758.6 631.2 756.7 633.7 754.5 636.6 752.3 639.5 750.3 642.3 748.5 644.6 747.3 646.3 747.7 646.7 749.2 645.3 751.4 643.3 753.9 640.9 756.6 638.4 759.2 635.9 761.4 633.8 763.7 631.5 766.0 629.3 768.2 627.1 770.2 624.9 771.9 622.5 773.6 619.5 774.9 616.6 775.9 613.6 776.6 610.4 777.1 607.0 777.4 603.5 777.4 599.8 777.3 596.1 776.9 593.0 776.3 590.0 775.6 586.9 774.8 583.9 774.1 581.0 773.4 577.8 772.7 574.4 772.0 571.1 771.3 568.2 770.9 566.2Z M744.6 642.6 744.3 645.1 743.9 648.8 743.5 652.8 743.4 655.7 743.6 658.8 743.7 662.0 743.8 665.0 743.6 669.1 743.4 673.2 743.2 676.0 743.9 678.3 746.0 679.3 748.3 678.6 749.3 676.5 749.6 673.6 749.8 669.4 750.0 665.0 749.9 661.8 749.8 658.5 749.5 655.3 749.0 652.2 747.8 648.4 746.4 644.9 745.4 642.4Z M781.0 580.1 781.5 582.4 782.3 585.8 783.0 589.4 783.4 592.8 783.6 595.8 783.6 598.8 783.5 601.8 783.1 604.6 782.3 607.3 781.2 610.0 780.0 612.7 778.7 615.4 777.1 618.4 775.2 621.5 773.5 624.4 772.3 626.4 772.7 626.6 774.3 625.0 776.6 622.6 779.2 619.9 781.3 617.1 783.1 614.4 784.7 611.6 786.0 608.6 786.9 605.4 787.4 602.1 787.5 598.8 787.2 595.5 786.6 592.2 785.5 588.7 784.0 585.2 782.5 582.1 781.5 579.9Z M756.1 615.0 756.5 617.8 757.1 621.5 757.4 625.1 757.3 628.3 757.0 631.6 756.3 634.5 755.1 637.5 753.5 640.5 752.4 642.6 752.6 642.9 754.4 641.1 756.7 638.5 758.7 635.5 759.7 632.1 760.2 628.5 760.1 624.9 759.1 621.1 757.6 617.4 756.4 615.0Z M753.1 541.2 754.1 542.8 755.5 545.0 757.1 547.5 758.9 550.4 760.8 553.4 762.7 556.5 764.6 559.6 766.5 562.4 768.1 565.0 770.0 567.9 771.8 570.7 773.6 573.3 775.3 575.8 777.0 578.4 778.8 581.0 780.6 583.7 782.4 586.4 784.3 589.4 786.3 592.4 788.3 595.5 790.1 598.5 791.9 601.1 793.3 603.3 794.4 605.0 795.8 606.0 797.5 605.6 798.5 604.2 798.1 602.5 797.1 600.9 795.6 598.6 793.9 596.0 792.1 593.1 790.1 590.0 788.1 586.9 786.1 583.9 784.4 581.3 782.6 578.5 780.8 575.8 779.1 573.3 777.3 570.7 775.6 568.1 773.8 565.4 771.9 562.5 770.3 560.0 768.5 557.1 766.5 554.1 764.6 551.0 762.7 548.0 760.9 545.1 759.3 542.6 757.9 540.4 756.9 538.8 755.5 537.8 753.8 538.1 752.8 539.5Z M792.0 541.4 793.4 543.1 795.2 545.3 797.4 547.9 799.8 550.8 802.2 553.7 804.5 556.5 806.5 558.8 808.6 561.2 810.8 563.7 812.9 566.1 814.9 568.5 816.7 570.6 818.1 572.5 820.4 576.1 821.8 578.8 822.8 581.9 823.7 585.0 824.3 588.5 824.9 591.8 825.3 594.1 826.2 595.6 827.9 596.0 829.3 595.1 829.7 593.4 829.3 591.1 828.8 587.7 828.1 584.0 827.2 580.6 825.9 577.1 824.4 573.8 821.9 570.0 820.3 567.8 818.4 565.6 816.4 563.2 814.2 560.7 812.0 558.2 809.9 555.8 808.0 553.5 805.7 550.8 803.3 547.9 800.9 545.0 798.7 542.4 796.8 540.2 795.5 538.6 794.0 537.7 792.3 538.3 791.5 539.8Z M798.5 603.9 798.7 600.9 798.9 596.7 799.5 593.0 800.4 590.0 801.6 587.3 803.0 585.2 805.5 582.8 808.0 581.6 810.8 581.7 814.2 582.7 817.7 584.4 820.9 586.8 822.6 589.3 824.3 592.5 825.5 594.8 826.8 595.9 828.5 595.8 829.7 594.4 829.5 592.7 828.3 590.4 826.5 586.9 824.1 583.7 820.1 580.6 815.8 578.5 811.5 577.2 807.0 577.2 802.9 579.1 799.5 582.3 797.7 585.2 796.2 588.4 795.0 592.0 794.4 596.2 794.1 600.6 794.0 603.6 794.6 605.3 796.1 606.0 797.8 605.4Z M851.6 538.3 851.4 540.5 851.0 543.5 850.6 547.0 850.2 550.8 849.7 554.7 849.1 558.3 848.7 561.2 848.2 564.2 847.7 567.3 847.2 570.3 846.6 573.4 846.0 576.4 845.4 579.3 844.7 582.8 843.8 586.3 843.0 589.9 842.1 593.3 841.3 596.4 840.5 599.0 839.1 603.3 837.8 606.5 836.9 608.7 836.9 611.3 838.7 613.1 841.3 613.1 843.1 611.3 844.1 609.1 845.5 605.6 847.0 601.0 847.8 598.2 848.6 595.0 849.5 591.5 850.4 587.9 851.3 584.3 852.1 580.7 852.7 577.7 853.3 574.6 853.8 571.5 854.4 568.4 854.9 565.3 855.4 562.3 855.9 559.2 856.4 555.6 856.9 551.7 857.4 547.8 857.8 544.3 858.1 541.3 858.4 539.2 857.7 536.7 855.4 535.4 852.9 536.1Z M772.1 476.2 773.6 479.8 776.2 484.3 778.9 487.0 781.8 489.3 785.1 491.0 790.0 492.4 795.2 492.5 799.0 491.8 802.8 490.7 806.5 489.0 810.0 486.6 813.2 483.8 816.1 480.8 818.6 477.5 820.6 474.1 822.7 470.2 824.2 467.5 825.7 464.5 827.2 461.4 828.8 458.2 830.3 455.1 831.8 452.1 833.3 449.1 834.8 446.0 836.3 443.1 837.8 440.2 839.3 437.2 840.9 434.1 842.5 431.1 843.9 428.6 844.6 427.3 848.3 424.8 849.6 422.8 849.1 420.5 847.1 419.2 844.7 419.7 840.4 422.7 838.5 425.4 837.0 428.2 835.4 431.2 833.8 434.3 832.2 437.3 830.7 440.3 829.2 443.3 827.7 446.3 826.2 449.4 824.7 452.4 823.2 455.5 821.6 458.6 820.1 461.7 818.7 464.6 817.3 467.3 815.2 471.0 813.4 474.1 811.4 476.7 808.9 479.4 806.2 481.7 803.5 483.5 800.6 484.9 797.6 485.8 794.8 486.3 790.9 486.2 787.4 485.2 785.2 484.0 783.0 482.3 781.3 480.7 779.2 477.0 777.9 473.8 776.2 472.1 773.8 472.1 772.1 473.8Z M803.7 405.2 806.3 406.5 810.3 408.3 814.7 410.0 817.4 410.9 820.4 411.7 823.5 412.4 826.7 412.9 829.9 413.2 833.0 413.3 836.1 413.3 839.2 413.2 842.3 412.9 845.3 412.6 848.9 412.0 852.5 411.3 855.9 410.3 859.3 409.2 862.7 407.9 866.0 406.3 869.0 404.7 871.6 403.3 875.3 401.4 877.6 400.2 877.4 399.8 875.0 400.5 870.9 401.7 868.1 402.6 864.9 403.7 861.5 404.8 858.2 405.8 854.9 406.6 851.6 407.4 848.2 408.1 844.7 408.7 841.9 409.0 839.0 409.2 836.0 409.4 833.1 409.4 830.1 409.3 827.2 409.0 824.1 408.7 821.0 408.3 818.1 407.9 815.3 407.5 810.8 406.6 806.7 405.5 803.8 404.8Z M800.1 423.2 802.6 424.1 806.3 425.4 810.6 426.5 814.1 426.9 817.6 427.2 821.4 427.3 825.2 427.1 828.3 426.9 831.5 426.4 834.7 425.9 837.9 425.3 840.9 424.5 844.4 423.4 847.7 422.1 850.8 420.7 853.9 419.3 857.1 417.9 860.3 416.3 863.5 414.7 866.6 413.0 870.0 411.1 873.4 409.0 876.6 407.0 879.3 405.4 883.2 402.9 885.6 401.3 887.1 399.2 886.6 396.6 884.4 395.2 881.9 395.7 879.6 397.2 875.7 399.6 873.0 401.3 869.9 403.2 866.6 405.2 863.4 407.0 860.3 408.7 857.2 410.2 854.2 411.7 851.1 413.2 848.0 414.6 845.1 415.9 842.2 417.0 839.1 418.0 836.4 418.7 833.5 419.2 830.5 419.7 827.6 420.1 824.8 420.4 821.4 420.5 818.0 420.4 814.7 420.2 811.9 419.8 808.2 418.9 804.8 417.7 802.4 416.8 799.8 416.9 798.1 418.8 798.2 421.4Z M764.1 453.3 764.9 455.8 766.1 459.4 767.3 463.1 768.1 465.9 769.0 468.8 769.9 471.7 770.7 474.6 771.6 478.2 772.6 481.9 773.5 485.7 774.2 488.6 774.8 491.7 775.4 494.8 776.0 497.9 776.4 501.0 776.7 504.2 777.0 507.2 777.2 510.1 777.3 514.0 777.2 517.6 777.2 520.2 778.0 522.2 779.9 523.1 782.0 522.3 782.8 520.3 782.9 517.7 782.9 513.9 782.8 509.9 782.6 506.8 782.3 503.6 782.0 500.3 781.5 497.1 781.0 493.8 780.4 490.6 779.7 487.4 779.0 484.3 778.0 480.4 776.9 476.7 775.6 472.9 774.4 470.1 773.0 467.2 771.6 464.5 770.2 461.9 768.1 458.4 766.1 455.2 764.7 453.0Z M770.4 488.8 770.2 491.5 770.1 495.4 770.2 498.8 770.1 502.7 770.0 506.0 769.8 511.5 770.2 511.5 772.5 506.5 773.4 502.9 773.6 498.7 773.0 495.1 771.8 491.3 770.8 488.7Z M769.8 489.2 768.1 491.2 765.9 493.9 763.6 496.4 760.6 499.4 757.5 501.9 755.3 502.9 752.5 503.8 749.3 504.7 745.4 505.9 741.1 507.2 738.1 508.1 736.8 509.2 736.6 510.9 737.7 512.2 739.4 512.4 742.4 511.5 746.7 510.3 750.7 509.0 753.9 508.1 756.9 507.1 760.0 505.6 763.6 502.5 766.4 498.6 768.0 495.3 769.4 491.9 770.2 489.5Z M778.7 515.3 775.9 513.7 772.2 512.0 768.6 511.0 765.0 510.6 761.4 511.0 757.9 512.0 754.4 513.4 751.0 515.5 748.0 518.2 745.7 521.7 745.0 528.0 747.9 533.9 751.2 537.9 752.9 538.8 754.8 538.2 755.7 536.5 755.1 534.6 752.1 531.1 750.0 527.0 750.5 523.3 751.9 521.6 754.0 519.5 756.6 518.0 759.6 516.8 762.4 516.0 765.0 515.7 767.6 516.0 770.3 516.7 773.6 518.3 776.3 519.7 778.2 519.9 779.7 518.7 779.9 516.8Z M770.7 515.5 772.0 517.1 774.5 520.2 776.5 522.5 778.8 525.4 781.4 528.5 783.9 531.4 786.3 534.4 788.8 537.4 791.2 540.2 793.3 542.7 796.7 546.8 798.9 549.4 800.4 550.2 802.1 549.7 802.9 548.2 802.4 546.6 800.1 543.9 796.7 539.8 794.7 537.3 792.3 534.5 789.8 531.5 787.4 528.6 784.9 525.6 782.3 522.5 779.9 519.7 778.0 517.3 775.6 514.3 774.3 512.7 772.8 511.8 771.1 512.3 770.3 513.8Z M519.6 784.7 519.2 790.6 521.5 795.0 522.9 798.1 522.6 799.8 521.6 802.9 520.5 806.6 519.7 809.7 519.0 813.0 518.3 816.4 517.9 819.8 517.9 823.7 518.3 827.4 519.3 831.0 520.6 834.6 522.4 838.1 524.7 841.9 526.5 844.4 528.5 847.0 530.7 849.6 532.8 852.2 534.9 854.7 537.0 857.1 539.1 859.5 541.2 861.8 543.2 864.0 545.0 866.0 548.0 869.3 550.7 872.1 552.5 874.1 554.9 875.1 557.3 874.2 558.4 871.8 557.5 869.4 555.6 867.5 552.9 864.6 550.0 861.5 548.2 859.4 546.2 857.3 544.2 855.0 542.1 852.7 540.1 850.3 538.0 847.9 535.9 845.3 533.8 842.8 531.9 840.3 530.3 838.1 528.3 834.8 526.8 831.9 525.7 829.0 525.0 826.1 524.6 823.3 524.6 820.2 525.0 817.5 525.6 814.5 526.3 811.3 527.0 808.4 528.1 804.9 529.2 801.3 529.6 796.9 527.5 791.9 525.8 789.4 526.4 785.3 525.6 782.9 523.3 781.6 520.9 782.4Z M552.1 873.5 552.9 875.7 554.0 878.9 555.4 882.6 557.2 886.4 558.6 888.9 560.1 891.4 561.8 894.0 563.6 896.7 565.5 899.4 567.6 902.0 569.5 904.2 571.5 906.4 573.6 908.6 575.8 910.8 578.1 913.0 580.5 915.2 583.0 917.4 585.3 919.3 587.6 921.1 590.0 923.0 592.5 924.8 595.1 926.7 597.7 928.6 600.4 930.5 603.2 932.5 605.5 934.2 607.9 935.9 610.3 937.6 612.9 939.4 615.4 941.1 618.0 942.9 620.6 944.7 623.1 946.5 625.7 948.3 628.2 950.0 630.7 951.8 633.3 953.5 635.8 955.3 638.3 957.0 640.9 958.8 643.4 960.5 645.9 962.3 648.3 964.0 650.8 965.7 653.1 967.5 655.9 969.6 658.8 971.8 661.8 974.1 664.7 976.4 667.5 978.6 670.2 980.7 672.5 982.6 674.5 984.2 676.1 985.4 678.4 986.1 680.4 984.9 681.1 982.6 679.9 980.6 678.4 979.4 676.4 977.8 674.0 975.9 671.4 973.8 668.5 971.5 665.6 969.2 662.6 966.9 659.6 964.6 656.9 962.5 654.4 960.7 651.9 958.9 649.4 957.2 646.9 955.4 644.4 953.7 641.9 951.9 639.3 950.2 636.8 948.4 634.3 946.7 631.8 945.0 629.3 943.2 626.7 941.4 624.1 939.6 621.5 937.8 619.0 936.0 616.4 934.3 613.9 932.5 611.5 930.8 609.1 929.1 606.8 927.5 604.0 925.5 601.3 923.5 598.7 921.7 596.2 919.8 593.8 918.0 591.4 916.2 589.2 914.4 587.0 912.6 584.6 910.5 582.3 908.4 580.1 906.3 578.0 904.3 576.1 902.2 574.2 900.1 572.4 898.0 570.5 895.6 568.7 893.1 567.0 890.6 565.4 888.2 564.0 885.8 562.8 883.6 561.1 880.2 559.8 876.7 558.7 873.7 557.9 871.5 556.3 869.7 554.0 869.6 552.2 871.2Z M549.7 838.8 549.7 841.3 549.6 844.9 549.8 849.0 550.4 853.0 551.2 856.2 552.4 859.5 553.5 862.7 554.5 865.6 555.3 868.0 556.3 872.9 556.8 875.8 557.6 877.3 559.3 877.7 560.8 876.9 561.2 875.2 560.8 872.0 559.7 867.0 558.8 864.2 557.8 861.2 556.6 858.0 555.5 854.8 554.6 852.0 553.5 848.3 552.2 844.5 551.1 841.1 550.3 838.7Z M594.7 875.1 595.2 877.4 595.9 880.6 597.0 884.4 598.7 888.3 600.2 890.9 601.9 893.5 603.8 896.1 605.9 898.8 608.2 901.5 610.6 904.2 612.6 906.3 614.6 908.5 616.8 910.8 619.0 913.0 621.2 915.3 623.6 917.6 625.9 919.8 628.3 921.9 630.8 924.0 633.3 926.0 635.9 927.9 638.5 929.7 641.1 931.6 643.6 933.4 646.1 935.2 648.4 937.0 651.0 939.1 653.6 941.3 656.1 943.4 658.5 945.6 661.0 947.8 663.4 949.9 665.9 952.0 668.5 954.1 671.2 956.2 673.9 958.4 676.6 960.4 679.0 962.3 681.0 963.8 682.4 965.0 684.3 965.5 686.0 964.6 686.5 962.7 685.6 961.0 684.1 959.8 682.1 958.3 679.7 956.4 677.1 954.4 674.3 952.2 671.6 950.1 669.1 948.0 666.7 946.0 664.3 943.9 661.9 941.8 659.4 939.6 656.9 937.4 654.3 935.2 651.6 933.0 649.1 931.1 646.6 929.3 644.1 927.4 641.5 925.6 638.9 923.8 636.4 921.9 634.0 920.0 631.7 918.1 629.4 916.0 627.1 913.9 624.8 911.7 622.6 909.5 620.4 907.2 618.3 905.0 616.3 902.9 614.4 900.8 611.9 898.2 609.4 895.7 607.1 893.3 605.0 891.0 603.0 888.8 601.3 886.7 599.2 883.4 597.5 880.0 596.2 877.0 595.3 874.9Z M520.8 831.6 519.1 832.5 516.8 833.8 514.2 835.3 511.1 837.0 507.9 838.9 504.6 840.8 501.3 842.7 498.2 844.6 495.5 846.3 492.8 848.0 490.0 849.7 487.2 851.5 484.4 853.3 481.6 855.2 478.7 857.1 475.9 859.0 473.1 861.0 470.5 862.8 467.9 864.6 465.3 866.5 462.7 868.4 460.2 870.3 457.6 872.3 455.1 874.2 452.6 876.1 450.2 878.0 447.9 879.9 445.1 882.1 442.3 884.4 439.6 886.7 436.9 888.9 434.4 891.1 432.0 893.3 429.7 895.5 427.6 897.6 425.0 900.3 422.7 902.9 420.7 905.4 418.8 908.0 417.1 910.7 415.7 913.6 414.2 917.2 413.1 921.0 412.3 924.8 411.9 928.6 411.6 932.4 411.7 936.1 412.0 939.8 412.6 943.4 413.3 947.1 414.2 950.8 415.0 954.1 416.0 957.5 417.1 960.9 418.2 964.3 419.4 967.7 420.5 971.1 421.6 974.1 422.7 977.1 423.8 980.0 425.0 983.0 426.1 985.9 427.1 988.6 428.1 991.2 429.2 994.4 430.3 997.3 431.2 1000.1 432.1 1002.9 433.0 1005.9 433.8 1008.8 434.6 1012.1 435.4 1015.5 436.1 1018.6 436.7 1021.3 437.2 1023.3 438.7 1025.4 441.3 1025.8 443.4 1024.3 443.8 1021.7 443.3 1019.8 442.7 1017.1 442.0 1013.9 441.2 1010.5 440.3 1007.1 439.5 1004.1 438.6 1000.9 437.6 998.0 436.7 995.1 435.6 992.1 434.4 988.8 433.5 986.2 432.4 983.4 431.3 980.6 430.2 977.6 429.0 974.7 428.0 971.7 427.0 968.9 425.8 965.5 424.6 962.2 423.5 958.8 422.5 955.5 421.6 952.3 420.8 949.2 420.0 945.6 419.3 942.2 418.7 938.9 418.4 935.8 418.4 932.6 418.6 929.3 419.0 925.9 419.7 922.6 420.6 919.4 421.8 916.4 423.0 914.0 424.4 911.8 426.0 909.6 427.9 907.3 430.0 904.9 432.4 902.4 434.4 900.4 436.6 898.3 438.9 896.2 441.4 894.1 443.9 891.9 446.6 889.6 449.3 887.4 452.1 885.1 454.4 883.3 456.8 881.5 459.2 879.6 461.7 877.7 464.2 875.8 466.8 873.9 469.3 872.0 471.9 870.1 474.4 868.3 476.9 866.5 479.7 864.6 482.5 862.7 485.3 860.9 488.1 859.0 490.9 857.2 493.7 855.4 496.4 853.7 499.1 852.0 501.8 850.4 504.8 848.5 508.0 846.6 511.3 844.8 514.5 842.9 517.5 841.2 520.2 839.7 522.5 838.4 524.2 837.4 525.8 835.4 525.4 832.8 523.4 831.2Z M421.4 975.0 422.2 977.1 423.3 980.1 424.7 983.6 426.3 987.4 427.9 991.0 429.5 994.2 431.4 997.3 433.4 1000.1 435.5 1002.8 437.8 1005.2 440.3 1007.6 443.0 1009.8 445.9 1011.8 449.1 1013.7 452.5 1015.4 456.3 1016.9 459.3 1017.9 462.4 1018.9 465.6 1019.7 469.0 1020.5 472.4 1021.2 476.0 1021.8 479.5 1022.4 482.9 1022.8 486.6 1023.2 490.4 1023.5 494.3 1023.8 497.9 1024.1 501.2 1024.3 504.0 1024.5 506.0 1024.6 508.5 1023.8 509.6 1021.5 508.8 1019.0 506.5 1017.9 504.4 1017.7 501.7 1017.5 498.4 1017.3 494.8 1017.1 491.0 1016.8 487.2 1016.5 483.7 1016.1 480.5 1015.6 477.1 1015.1 473.7 1014.5 470.4 1013.8 467.2 1013.1 464.2 1012.3 461.3 1011.5 458.7 1010.6 455.3 1009.2 452.3 1007.7 449.6 1006.1 447.1 1004.3 444.7 1002.4 442.5 1000.4 440.6 998.4 438.8 996.1 437.1 993.6 435.5 990.8 434.0 988.1 432.5 984.7 431.0 981.1 429.7 977.6 428.5 974.6 427.6 972.5 425.8 970.6 423.2 970.6 421.4 972.4Z M565.0 1024.4 566.7 1023.7 568.9 1022.9 571.5 1021.9 574.5 1020.7 577.6 1019.5 580.9 1018.2 584.3 1016.9 587.6 1015.6 590.8 1014.3 593.8 1013.1 596.9 1011.9 600.0 1010.6 603.1 1009.4 606.2 1008.1 609.3 1006.9 612.4 1005.6 615.4 1004.4 618.4 1003.1 621.3 1001.9 624.3 1000.6 627.2 999.3 630.2 998.0 633.1 996.7 635.9 995.4 638.7 994.1 641.4 992.9 644.0 991.7 646.4 990.6 650.1 988.9 653.7 987.1 657.1 985.5 660.1 984.0 662.6 982.7 664.5 981.8 666.2 979.8 666.0 977.3 664.1 975.5 661.5 975.7 659.6 976.6 657.1 977.9 654.1 979.4 650.7 981.0 647.2 982.7 643.6 984.4 641.1 985.6 638.5 986.8 635.9 988.0 633.1 989.2 630.3 990.5 627.4 991.8 624.5 993.1 621.6 994.4 618.7 995.6 615.7 996.9 612.8 998.1 609.8 999.4 606.7 1000.6 603.7 1001.9 600.6 1003.1 597.5 1004.4 594.4 1005.6 591.2 1006.9 588.3 1008.0 585.1 1009.3 581.8 1010.6 578.5 1011.9 575.2 1013.2 572.0 1014.4 569.1 1015.5 566.5 1016.6 564.2 1017.4 562.5 1018.1 560.6 1019.9 560.6 1022.5 562.4 1024.4Z M610.0 814.9 612.1 815.4 615.1 815.9 618.6 816.6 622.3 817.5 626.0 818.5 629.3 819.7 631.9 820.8 634.6 822.2 637.3 823.7 640.0 825.4 642.7 827.0 645.5 828.7 648.3 830.4 651.2 832.1 654.1 833.8 657.1 835.6 660.0 837.4 662.8 839.2 665.5 841.0 668.0 842.7 670.7 844.8 673.2 846.8 675.6 848.8 677.9 850.9 680.3 853.0 682.8 855.1 685.4 857.2 688.0 859.1 690.4 861.0 692.8 862.9 695.2 864.9 697.5 867.3 699.3 869.3 701.1 871.5 702.9 873.9 704.8 876.4 706.6 879.0 708.5 881.6 710.3 884.3 712.2 886.9 713.9 889.3 715.6 891.8 717.3 894.3 719.0 896.8 720.7 899.4 722.3 901.9 724.0 904.5 725.6 906.9 727.1 909.3 729.1 912.3 730.9 915.3 732.8 918.3 734.5 921.2 736.3 924.0 738.0 926.7 739.7 929.3 741.7 932.4 743.7 935.5 745.7 938.4 747.6 941.1 749.1 943.3 750.2 944.9 752.4 946.3 754.9 945.8 756.3 943.6 755.8 941.1 754.7 939.4 753.1 937.2 751.3 934.6 749.3 931.7 747.3 928.6 745.3 925.7 743.7 923.1 742.0 920.4 740.3 917.6 738.5 914.7 736.7 911.7 734.8 908.7 732.9 905.7 731.3 903.3 729.7 900.8 728.0 898.2 726.3 895.7 724.6 893.1 722.9 890.5 721.2 888.0 719.5 885.5 717.8 883.1 715.9 880.4 714.0 877.7 712.1 875.0 710.2 872.4 708.3 869.8 706.4 867.3 704.5 864.9 702.5 862.7 699.8 860.0 697.2 857.7 694.6 855.6 692.0 853.7 689.6 851.8 687.2 849.9 684.8 847.9 682.4 845.8 680.0 843.7 677.5 841.6 674.9 839.4 672.0 837.3 669.3 835.4 666.5 833.5 663.6 831.6 660.6 829.8 657.6 828.0 654.6 826.2 651.7 824.6 648.8 823.0 645.8 821.5 642.9 820.0 639.9 818.6 636.8 817.3 633.8 816.2 630.7 815.3 626.9 814.6 622.8 814.3 618.9 814.1 615.3 814.1 612.2 814.1 610.0 814.1Z M624.8 786.3 624.0 788.6 622.7 792.0 621.4 795.8 620.4 799.4 619.9 803.5 620.0 807.3 620.5 811.0 622.5 815.1 624.3 817.6 626.6 818.9 629.1 818.2 630.4 815.9 629.7 813.4 628.3 811.7 627.0 809.0 626.7 806.9 626.7 803.9 627.1 800.6 627.9 797.8 629.1 794.3 630.3 791.0 631.2 788.7 631.1 786.1 629.2 784.3 626.6 784.4Z M698.2 1003.6 695.6 1002.6 691.9 1001.2 688.4 999.5 685.9 997.8 684.4 995.7 683.2 993.2 682.3 990.3 681.8 987.2 681.8 984.7 681.9 982.1 682.4 979.4 683.1 976.5 684.1 973.6 685.2 971.1 686.5 968.5 688.0 965.9 689.7 963.2 691.6 960.7 693.6 958.3 695.8 956.0 698.2 953.7 700.9 951.4 703.6 949.3 706.4 947.4 709.1 945.7 711.8 944.2 714.5 942.9 717.3 941.8 720.1 940.8 722.9 940.0 725.7 939.3 729.1 938.6 732.5 938.1 735.9 937.9 739.1 937.9 742.1 938.1 745.6 938.7 748.8 939.8 751.9 941.1 754.6 942.6 757.0 944.3 759.1 946.3 761.0 948.4 762.2 950.2 763.9 953.9 764.1 955.8 762.6 956.8 760.0 957.9 758.3 959.7 758.4 962.0 760.2 963.7 762.5 963.6 765.9 962.0 769.9 958.2 769.9 952.5 767.8 947.3 765.8 944.6 763.6 942.0 760.9 939.5 757.9 937.4 754.6 935.6 751.0 934.0 747.1 932.7 742.9 931.9 739.3 931.7 735.6 931.7 731.9 932.0 728.0 932.5 724.3 933.2 721.3 934.0 718.2 934.9 715.1 936.0 712.0 937.2 708.9 938.7 705.9 940.3 702.9 942.2 699.9 944.3 696.9 946.6 694.1 949.1 691.4 951.6 688.9 954.2 686.7 956.9 684.6 959.7 682.7 962.7 681.1 965.6 679.6 968.5 678.4 971.4 677.2 974.7 676.3 978.1 675.8 981.4 675.5 984.6 675.7 987.8 676.2 991.6 677.4 995.4 679.1 999.0 681.6 1002.2 685.2 1004.9 689.5 1006.9 693.3 1008.4 695.8 1009.4 698.2 1009.4 699.9 1007.7 699.9 1005.3Z M762.7 958.0 760.9 957.0 758.1 955.5 754.7 953.8 750.8 952.5 747.5 951.8 743.8 951.2 740.0 950.8 736.1 950.6 732.3 950.6 728.7 951.0 725.1 951.7 721.5 952.6 718.1 953.8 714.8 955.2 711.7 957.1 708.8 959.2 706.1 961.6 703.6 964.1 701.3 966.8 699.2 969.8 697.2 972.9 695.4 976.2 693.9 979.5 692.6 982.7 691.3 986.6 690.4 990.5 689.9 994.3 690.0 998.2 691.6 1002.3 694.1 1005.3 695.7 1007.1 697.9 1008.1 700.1 1007.3 701.1 1005.1 700.3 1002.9 698.8 1001.2 697.0 999.2 696.0 996.8 696.1 994.7 696.5 991.7 697.3 988.3 698.4 984.8 699.6 982.0 701.0 979.0 702.6 976.1 704.3 973.2 706.2 970.7 708.2 968.3 710.4 966.1 712.7 964.0 715.2 962.3 717.7 960.8 720.4 959.5 723.3 958.5 726.4 957.7 729.5 957.2 732.7 956.9 736.0 956.8 739.5 956.9 743.0 957.3 746.3 957.9 749.2 958.5 752.3 959.6 755.3 961.0 757.9 962.4 759.8 963.5 762.1 963.7 764.0 962.2 764.2 959.9Z M678.1 998.5 676.4 999.6 674.1 1001.2 671.4 1003.1 668.5 1005.2 665.6 1007.2 662.9 1009.1 659.8 1011.2 656.7 1013.4 653.7 1015.5 651.1 1017.2 649.3 1018.5 647.9 1020.6 648.5 1023.2 650.6 1024.6 653.2 1024.0 655.0 1022.8 657.5 1021.0 660.5 1019.0 663.7 1016.8 666.8 1014.6 669.4 1012.8 672.4 1010.7 675.3 1008.7 678.0 1006.8 680.3 1005.2 681.9 1004.0 683.3 1001.8 682.8 999.3 680.6 997.9Z M886.1 335.4 888.9 335.8 892.8 336.5 896.7 337.6 899.6 338.7 902.7 340.1 905.7 341.7 908.3 343.1 911.3 345.1 913.9 347.0 915.8 348.5 917.7 350.2 917.5 352.6 916.7 357.5 916.2 360.0 915.6 363.0 914.8 366.2 913.9 369.5 913.0 372.6 912.0 375.5 910.9 378.5 909.7 381.5 908.5 384.4 907.3 387.3 905.8 390.8 904.3 394.1 902.8 397.5 901.2 401.0 899.9 404.0 898.6 407.2 897.3 410.3 896.0 413.3 894.8 415.9 893.0 419.2 891.3 421.9 888.8 425.2 887.2 427.4 885.3 429.8 883.3 432.3 881.1 434.9 878.9 437.5 876.5 440.0 874.4 442.1 872.2 444.2 869.8 446.4 867.4 448.5 864.9 450.7 862.5 452.8 860.1 454.8 857.7 456.8 855.3 458.8 853.0 460.7 850.6 462.6 848.3 464.5 845.9 466.3 843.6 468.0 840.7 469.9 837.6 471.7 834.5 473.5 831.5 475.2 828.9 476.9 826.4 478.8 824.0 482.6 823.7 485.8 823.1 488.2 822.3 491.1 821.4 494.3 820.4 497.8 819.2 501.4 817.7 505.3 816.4 508.3 814.9 511.5 813.3 514.6 811.7 517.5 810.0 520.1 808.1 522.6 806.1 525.0 804.3 527.2 801.8 530.2 799.3 532.9 797.6 534.8 797.0 536.6 797.8 538.4 799.6 539.0 801.4 538.2 803.1 536.2 805.5 533.4 808.1 530.4 810.0 528.1 812.0 525.6 814.0 523.0 815.9 520.1 817.7 517.0 819.4 513.7 820.9 510.3 822.3 507.1 823.8 503.1 825.1 499.3 826.2 495.7 827.1 492.4 827.9 489.5 828.7 486.6 828.7 484.2 830.2 482.0 831.6 481.0 834.1 479.5 837.0 477.8 840.2 476.0 843.4 474.1 846.4 472.0 848.9 470.3 851.3 468.4 853.7 466.5 856.1 464.6 858.5 462.6 860.9 460.6 863.3 458.6 865.7 456.5 868.2 454.4 870.7 452.3 873.1 450.1 875.6 447.9 877.9 445.6 880.1 443.4 882.5 440.8 884.9 438.1 887.1 435.4 889.2 432.8 891.1 430.4 892.8 428.2 895.4 424.7 897.3 421.7 899.2 418.1 900.5 415.4 901.9 412.3 903.2 409.1 904.5 406.0 905.8 403.0 907.3 399.5 908.9 396.2 910.4 392.8 911.9 389.3 913.1 386.3 914.3 383.3 915.6 380.3 916.7 377.2 917.8 374.0 918.7 370.8 919.6 367.5 920.4 364.2 921.1 361.1 921.7 358.3 922.5 353.0 922.3 348.4 919.2 344.9 916.9 343.1 914.2 341.0 910.9 338.9 908.0 337.3 904.8 335.7 901.5 334.1 898.3 332.8 893.9 331.7 889.7 330.9 886.9 330.4 885.1 330.9 884.0 332.5 884.5 334.3Z M888.7 328.8 891.0 329.3 894.2 330.0 897.9 330.8 901.7 331.8 905.1 332.8 908.3 334.1 911.7 335.7 915.1 337.3 918.1 338.9 920.7 340.2 924.8 342.5 926.8 343.8 927.4 344.5 927.0 347.2 926.1 352.1 925.4 355.2 924.5 358.7 923.6 362.5 922.5 366.1 921.4 369.6 920.3 373.0 919.0 376.5 917.6 380.0 916.4 382.7 915.1 385.5 913.7 388.2 912.3 391.1 910.9 394.1 909.6 397.2 908.2 400.4 906.8 403.6 905.4 406.9 904.0 410.2 902.9 413.1 901.9 416.1 900.9 419.0 899.9 421.9 898.7 424.6 897.3 427.2 895.7 429.7 893.9 432.1 891.9 434.5 889.8 436.9 887.5 439.3 885.1 441.8 883.0 444.0 880.7 446.3 878.3 448.6 875.9 451.0 873.4 453.2 871.0 455.5 868.6 457.6 866.2 459.6 863.8 461.6 861.4 463.5 859.0 465.4 856.7 467.3 854.3 469.0 852.0 470.8 849.3 472.8 846.4 474.8 843.6 476.8 841.0 478.6 838.6 480.2 836.8 481.5 831.6 484.7 830.2 488.5 829.8 492.1 829.1 495.0 828.3 498.4 827.3 501.9 826.5 504.5 825.5 507.2 824.4 510.0 823.1 512.8 821.5 515.8 819.7 518.9 817.7 522.0 815.7 525.0 813.7 527.7 811.5 530.4 809.3 533.0 807.2 535.5 804.2 539.0 801.4 542.3 799.4 544.6 798.9 546.2 799.6 547.6 801.2 548.1 802.6 547.4 804.6 545.1 807.5 541.8 810.4 538.3 812.6 535.8 814.8 533.1 817.1 530.4 819.3 527.4 821.3 524.4 823.4 521.2 825.2 517.9 826.9 514.8 828.3 511.7 829.5 508.8 830.5 505.9 831.5 503.1 832.5 499.5 833.3 496.0 834.0 492.9 834.5 489.3 834.6 487.7 839.0 485.1 841.0 483.8 843.4 482.1 846.1 480.3 848.9 478.3 851.8 476.3 854.6 474.2 856.9 472.5 859.3 470.7 861.7 468.8 864.1 466.9 866.6 464.9 869.0 462.9 871.4 460.8 873.9 458.7 876.3 456.4 878.8 454.1 881.3 451.7 883.7 449.4 886.1 447.1 888.3 444.8 890.7 442.2 893.0 439.8 895.2 437.3 897.3 434.8 899.3 432.2 901.1 429.4 902.6 426.5 903.9 423.4 905.0 420.4 906.0 417.4 906.9 414.6 908.0 411.8 909.4 408.5 910.7 405.3 912.1 402.1 913.5 398.9 914.9 395.9 916.2 393.0 917.6 390.1 919.0 387.3 920.3 384.5 921.6 381.6 923.0 378.0 924.3 374.5 925.5 370.9 926.7 367.3 927.7 363.6 928.7 359.8 929.6 356.1 930.3 352.9 931.3 347.9 931.6 343.9 929.8 340.8 927.0 338.8 922.7 336.4 920.1 335.1 917.0 333.5 913.6 331.8 910.0 330.2 906.5 328.8 902.8 327.6 898.9 326.6 895.1 325.8 891.9 325.1 889.7 324.6 888.0 324.9 887.1 326.2 887.4 327.9Z M890.9 324.9 893.0 325.1 896.0 325.5 899.4 325.9 902.9 326.5 906.2 327.3 909.3 328.3 912.6 329.6 916.0 331.1 919.3 332.5 922.5 333.9 925.7 335.3 928.9 336.7 932.0 338.1 934.7 339.3 936.4 340.1 937.3 340.6 937.0 342.8 936.0 347.5 935.4 350.0 934.6 353.1 933.8 356.3 932.8 359.6 931.9 362.7 931.0 365.6 930.0 368.5 928.9 371.4 927.8 374.3 926.7 377.1 925.4 380.0 924.1 382.8 922.8 385.6 921.4 388.5 919.9 391.7 918.7 394.4 917.4 397.2 916.2 400.1 914.9 403.0 913.6 406.1 912.2 409.2 911.0 412.1 909.7 415.2 908.5 418.3 907.2 421.4 905.9 424.4 904.6 427.3 903.3 429.8 901.3 433.1 899.3 436.1 897.2 438.9 895.2 441.4 893.4 443.8 891.1 447.0 889.1 449.4 886.9 451.9 884.6 454.1 882.1 456.5 879.4 458.8 877.0 461.0 874.4 463.5 872.0 465.8 868.8 468.5 866.5 470.2 863.8 472.2 860.8 474.3 857.8 476.4 854.9 478.4 852.3 480.0 848.6 481.8 845.0 483.3 841.6 484.6 838.6 486.1 836.9 489.4 836.3 492.2 835.6 495.8 834.9 498.7 834.2 502.0 833.1 505.6 832.1 508.5 831.0 511.7 829.7 514.9 828.3 517.9 826.6 520.8 824.7 523.6 822.7 526.4 820.9 528.8 818.3 532.2 815.4 535.6 813.2 538.4 810.6 541.6 808.1 544.7 806.5 546.8 806.0 548.2 806.8 549.5 808.2 550.0 809.5 549.2 811.2 547.1 813.6 544.1 816.2 540.9 818.4 538.2 821.3 534.7 824.1 531.2 825.9 528.7 827.9 525.9 829.9 522.8 831.7 519.7 833.3 516.5 834.7 513.1 835.9 509.9 836.9 506.8 838.0 503.0 838.8 499.6 839.4 496.6 840.2 493.0 840.7 490.6 841.4 488.9 843.1 488.3 846.4 487.0 850.3 485.4 854.3 483.4 857.1 481.7 860.0 479.7 863.1 477.6 866.1 475.4 868.9 473.4 871.2 471.5 874.6 468.7 877.1 466.4 879.6 464.0 882.1 461.8 884.7 459.4 887.4 457.0 889.7 454.7 892.2 452.0 894.2 449.4 896.6 446.2 898.4 443.9 900.4 441.3 902.5 438.4 904.7 435.2 906.7 431.8 908.1 429.0 909.5 426.0 910.8 422.9 912.1 419.8 913.4 416.6 914.6 413.6 915.8 410.8 917.2 407.6 918.5 404.6 919.8 401.7 921.1 398.8 922.3 396.0 923.5 393.3 924.9 390.2 926.3 387.3 927.7 384.4 929.1 381.6 930.3 378.7 931.5 375.7 932.6 372.8 933.7 369.9 934.7 366.9 935.7 363.9 936.6 360.7 937.6 357.4 938.4 354.0 939.2 351.0 939.8 348.3 940.9 343.4 941.1 339.4 938.6 336.9 936.3 335.7 933.7 334.5 930.6 333.1 927.3 331.7 924.1 330.3 920.9 328.9 917.6 327.4 914.1 326.0 910.7 324.6 907.2 323.5 903.7 322.7 900.0 322.0 896.5 321.6 893.5 321.2 891.5 320.9 890.0 321.3 889.2 322.6 889.6 324.1Z M839.0 491.2 838.8 494.0 838.3 497.8 837.6 500.5 836.6 503.6 835.4 506.8 834.1 510.1 832.5 513.4 830.8 516.9 829.3 519.6 827.8 522.4 826.1 525.2 824.3 528.0 822.4 530.8 820.4 533.5 818.3 536.3 816.0 539.1 814.0 541.5 811.6 544.0 809.3 546.6 807.2 548.7 805.8 550.2 805.3 551.6 805.9 553.0 807.2 553.5 808.6 552.9 810.0 551.3 812.1 549.2 814.4 546.7 816.8 544.0 819.0 541.5 821.3 538.7 823.5 535.8 825.6 533.0 827.5 530.1 829.4 527.2 831.1 524.3 832.7 521.5 834.2 518.7 836.0 515.1 837.6 511.6 839.0 508.2 840.2 504.8 841.3 501.6 842.1 498.5 842.7 494.4 842.9 491.5 842.4 490.1 841.1 489.5 839.7 489.9Z M944.8 394.0 944.1 396.5 943.0 400.0 941.6 403.5 940.4 406.1 938.9 408.8 937.2 411.7 935.3 414.6 933.6 417.2 931.7 419.8 929.7 422.5 927.7 425.1 925.6 427.5 923.4 429.9 921.1 432.2 918.6 434.5 916.1 436.7 913.5 438.8 910.9 440.9 908.1 442.9 905.2 444.9 902.4 446.8 899.7 448.6 896.5 450.6 893.3 452.5 890.3 454.2 887.3 456.0 884.2 457.9 881.0 459.8 878.3 461.5 876.4 462.7 874.8 465.0 875.2 467.8 877.5 469.4 880.3 469.0 882.2 467.8 884.9 466.1 888.0 464.2 891.1 462.3 894.0 460.6 897.1 458.8 900.3 456.9 903.7 454.8 906.5 452.9 909.4 451.0 912.3 448.9 915.3 446.7 918.1 444.5 920.9 442.3 923.5 439.9 926.1 437.5 928.7 435.0 931.1 432.5 933.4 429.7 935.6 426.9 937.7 424.1 939.6 421.3 941.4 418.7 943.4 415.5 945.3 412.4 946.9 409.5 948.4 406.5 950.0 402.4 951.1 398.6 951.9 396.0 951.6 393.2 949.4 391.5 946.6 391.8Z M892.4 451.3 890.2 452.8 887.2 455.0 883.8 457.5 880.7 459.7 877.9 461.7 875.0 463.7 872.5 465.5 870.7 466.7 868.9 469.7 869.6 473.0 872.6 474.9 875.9 474.1 877.7 472.9 880.2 471.1 883.1 469.0 886.0 467.0 889.0 464.8 892.4 462.4 895.5 460.2 897.6 458.7 899.5 455.7 898.7 452.4 895.7 450.5Z M944.7 410.0 948.3 410.3 952.7 410.8 956.7 411.9 961.4 412.7 965.4 412.4 969.0 411.8 972.5 411.0 976.1 409.9 979.5 408.8 981.9 408.1 983.9 406.4 984.1 403.8 982.4 401.8 979.8 401.6 977.4 402.4 974.1 403.5 970.8 404.4 967.6 405.1 964.5 405.7 961.9 406.0 958.1 405.3 953.9 404.2 949.0 403.6 945.3 403.3 942.8 404.1 941.6 406.4 942.4 408.9Z M870.2 467.5 867.2 470.3 863.6 474.2 861.4 477.8 859.9 481.4 858.9 484.8 857.9 489.4 857.4 492.1 856.9 495.4 856.4 498.8 855.9 502.4 855.4 505.7 854.9 509.0 854.4 512.3 853.9 515.6 853.4 518.9 852.9 522.0 852.3 526.0 851.6 530.2 851.0 533.8 850.7 536.3 851.3 538.9 853.5 540.2 856.0 539.6 857.3 537.4 857.7 534.9 858.3 531.2 859.0 527.1 859.6 523.0 860.1 519.9 860.6 516.7 861.1 513.4 861.6 510.0 862.1 506.8 862.6 503.4 863.1 499.8 863.6 496.4 864.1 493.2 864.6 490.6 865.4 486.4 866.3 483.6 867.4 480.8 868.9 478.3 872.0 475.1 874.8 472.5 875.9 470.1 875.0 467.7 872.6 466.6Z M800.2 423.3 802.3 423.7 805.4 424.4 809.0 425.1 812.8 425.8 816.5 426.4 819.8 426.7 823.7 426.7 827.1 426.3 830.1 425.7 833.3 425.0 836.7 424.1 840.4 423.1 844.1 422.0 847.8 420.7 850.9 419.5 854.1 418.1 857.2 416.7 860.3 415.2 863.1 413.8 866.4 412.0 869.6 410.2 872.6 408.4 875.5 406.5 878.5 404.4 881.4 402.2 884.1 400.0 886.7 397.9 890.1 395.0 893.1 392.3 895.2 390.3 894.8 389.7 892.3 391.1 888.8 393.2 885.0 395.4 882.1 397.0 879.1 398.6 875.9 400.3 872.8 401.9 869.8 403.4 866.7 404.9 863.5 406.3 860.2 407.9 857.4 409.2 854.4 410.5 851.4 411.9 848.4 413.2 845.5 414.3 842.0 415.6 838.5 416.6 835.1 417.6 831.7 418.4 828.7 419.1 826.0 419.6 823.4 419.9 820.2 419.9 817.4 419.7 814.0 419.1 810.3 418.4 806.7 417.7 803.7 417.1 801.5 416.7 798.9 417.2 797.5 419.4 798.0 421.9Z M808.0 439.3 805.9 441.6 803.1 444.9 800.3 447.9 797.8 450.2 795.3 452.3 793.0 454.6 790.7 458.2 789.3 462.2 789.1 466.8 789.9 471.2 791.9 474.8 795.1 477.6 801.5 478.2 804.9 476.4 807.4 473.8 809.2 470.6 810.2 466.8 808.6 460.8 802.4 457.3 796.1 460.0 792.9 465.6 793.1 471.6 793.6 472.8 794.8 473.2 796.0 472.6 796.4 471.4 796.1 466.4 798.4 462.5 802.1 460.7 805.9 462.9 806.8 467.0 806.1 469.2 804.6 471.7 802.8 473.7 801.0 474.8 796.2 474.4 794.6 472.8 793.1 470.1 792.5 466.6 792.7 462.8 793.7 459.7 795.7 456.6 797.5 454.6 799.8 452.3 802.2 449.6 804.5 446.0 806.8 442.2 808.3 439.5Z M819.2 439.3 817.5 441.2 815.2 444.0 813.1 446.8 811.0 450.6 809.6 454.6 809.1 458.5 809.0 462.2 808.1 466.6 807.3 470.2 807.7 470.3 809.5 467.1 811.5 462.8 812.3 458.9 812.9 455.4 814.1 451.9 815.7 448.2 817.0 445.1 818.5 441.8 819.5 439.5Z"/></svg>
</div>

<!-- ===== SCROLLBARS / STATUS ===== -->
<div class="a" id="vscroll" style="left:1460px;top:155px;width:24px;height:865px;background:#494949"><div class="a" style="left:2.0px;top:412.0px;width:20.0px;height:38.0px;background:#5f5f5f;border-radius:10px"></div>
<svg style="left:0;top:0" width="1" height="1"><path d="M6.5 849.0 L12.2 855.0 L18.0 849.0" fill="none" stroke="#bdbdbd" stroke-width="1.6"/></svg></div>
<div class="a" id="status" style="left:0;top:1020px;width:1486px;height:25px;background:#4a4a4a"><div class="a" style="left:0.0px;top:0.0px;width:1486.0px;height:1.0px;background:#3f3f3f;"></div>
<div class="a" style="left:7.5px;top:2.0px;width:76.0px;height:23.0px;background:#454545;border:1px solid #5a5a5a;border-bottom:none;border-radius:3px 0 0 0"></div>
<div class="a" style="left:83.0px;top:2.0px;width:25.5px;height:23.0px;background:#4d4d4d;border:1px solid #5a5a5a;border-bottom:none;border-left:none;border-radius:0 3px 0 0"></div>
<span class="t" style="left:12.5px;top:7.8px;font-size:16.24px;color:#e2e2e2;transform:scaleX(0.903);transform-origin:0 0;">150%</span>
<svg style="left:0;top:0" width="1" height="1"><path d="M90.0 13.0 L96.0 19.0 L102.0 13.0" fill="none" stroke="#e6e6e6" stroke-width="1.8"/></svg>
<svg style="left:0;top:0" width="1" height="1"><g fill="#6f6f6f"><rect x="122.5" y="8.0" width="2.5" height="12.0"/><path d="M136 8.0 L127 14.0 L136 20.0 Z"/><path d="M159 8.0 L150 14.0 L159 20.0 Z"/><path d="M274 8.0 L283 14.0 L274 20.0 Z"/><path d="M297.5 8.0 L306.5 14.0 L297.5 20.0 Z"/><rect x="308.5" y="8.0" width="2.5" height="12.0"/></g><path d="M634 7.5 L642.5 14.0 L634 20.5 Z" fill="#d6d6d6"/><path d="M665.5 7.0 L660 12.5 L665.5 18.0" fill="none" stroke="#c4c4c4" stroke-width="1.6"/><path d="M1444.5 7.0 L1450 12.5 L1444.5 18.0" fill="none" stroke="#c4c4c4" stroke-width="1.6"/></svg>
<div class="a" style="left:172.5px;top:2.0px;width:62.0px;height:23.0px;background:#454545;border:1px solid #5a5a5a;border-bottom:none;border-radius:3px 0 0 0"></div>
<div class="a" style="left:234.0px;top:2.0px;width:26.0px;height:23.0px;background:#4d4d4d;border:1px solid #5a5a5a;border-bottom:none;border-left:none;border-radius:0 3px 0 0"></div>
<span class="t" style="left:177.5px;top:7.8px;font-size:16.24px;color:#e2e2e2;transform:scaleX(0.720);transform-origin:0 0;">1</span>
<svg style="left:0;top:0" width="1" height="1"><path d="M240.0 13.0 L245.5 19.0 L251.0 13.0" fill="none" stroke="#e6e6e6" stroke-width="1.8"/></svg>
<div class="a" style="left:325.0px;top:1.0px;width:299.0px;height:24.0px;background:#535353;"></div>
<span class="t" style="left:443.0px;top:6.7px;font-size:16.95px;color:#bcbcbc;transform:scaleX(0.853);transform-origin:0 0;">Selection</span>
<div class="a" style="left:1035.0px;top:2.0px;width:38.0px;height:21.0px;background:#5f5f5f;border-radius:10px"></div></div>

<div class="a" id="corner" style="left:1460px;top:1020px;width:24px;height:25px;background:#535353"></div>
<div class="a" id="ledge" style="left:0;top:113px;width:1.5px;height:932px;background:#3a3a3a"></div>
<!-- ===== RIGHT DOCK ===== -->
<div class="a" id="dock" style="left:1484px;top:113px;width:436px;height:932px;background:#535353">
<div class="a" style="left:0.0px;top:0.0px;width:3.4px;height:932.0px;background:#474747;"></div>
<div class="a" style="left:0.0px;top:0.0px;width:1.3px;height:932.0px;background:#2f2f2f;"></div>
<div class="a" style="left:3.0px;top:0.0px;width:433.0px;height:16.0px;background:#404040;"></div>
<div class="a" style="left:3.0px;top:16.0px;width:433.0px;height:1.5px;background:#2f2f2f;"></div>
<svg style="left:0;top:0" width="1" height="1"><path d="M44.3 4.7 l-3.2 3 l3.2 3 M50.3 4.7 l-3.2 3 l3.2 3" fill="none" stroke="#d0d0d0" stroke-width="1.3"/></svg>
<svg style="left:0;top:0" width="1" height="1"><path d="M232.5 4.7 l-3.2 3 l3.2 3 M238.5 4.7 l-3.2 3 l3.2 3" fill="none" stroke="#d0d0d0" stroke-width="1.3"/></svg>
<svg style="left:0;top:0" width="1" height="1"><path d="M420.0 4.7 l-3.2 3 l3.2 3 M426.0 4.7 l-3.2 3 l3.2 3" fill="none" stroke="#d0d0d0" stroke-width="1.3"/></svg>
<div class="a" style="left:61.0px;top:0.0px;width:2.6px;height:932.0px;background:#444444;"></div>
<div class="a" style="left:248.2px;top:0.0px;width:2.6px;height:932.0px;background:#444444;"></div>
<div class="a" style="left:18.0px;top:22.8px;width:28px;height:6px;background:repeating-linear-gradient(90deg,#393939 0 1px,transparent 1px 3px)"></div>
<div class="a" style="left:3.0px;top:120.0px;width:58.0px;height:1.6px;background:#3b3b3b;"></div>
<div class="a" style="left:18.0px;top:126.6px;width:28px;height:6px;background:repeating-linear-gradient(90deg,#393939 0 1px,transparent 1px 3px)"></div>
<div class="a" style="left:3.0px;top:181.0px;width:58.0px;height:1.8px;background:#3b3b3b;"></div>
<svg style="left:-1484px;top:-113px" width="1" height="1"><path d="M1522 156 L1526 156 L1531 170 L1527 170 Z" fill="#c6c6c6"/><rect x="1528" y="196" width="2" height="19" fill="#e0e0e0"/></svg>
<svg style="left:-1484px;top:-113px" width="1" height="1"><path d="M1518 257.5 H1507 V281 H1531 V270" fill="none" stroke="#c6c6c6" stroke-width="2.6"/><path d="M1517 271 L1531 257" stroke="#c6c6c6" stroke-width="2.6"/><path d="M1521.500 256.5 H1532.500 V267.500" fill="none" stroke="#c6c6c6" stroke-width="2.6"/></svg>
<div class="a" style="left:141.0px;top:22.8px;width:28px;height:6px;background:repeating-linear-gradient(90deg,#393939 0 1px,transparent 1px 3px)"></div>
<svg style="left:-1484px;top:-113px" width="1" height="1"><rect x="1570.5" y="158.5" width="16" height="16" fill="none" stroke="#c6c6c6" stroke-width="2"/><rect x="1567.0" y="155.2" width="4.5" height="4.5" fill="#c6c6c6"/><rect x="1576.0" y="155.2" width="4.5" height="4.5" fill="#c6c6c6"/><rect x="1585.3" y="155.2" width="4.5" height="4.5" fill="#c6c6c6"/><rect x="1567.0" y="164.2" width="4.5" height="4.5" fill="#c6c6c6"/><rect x="1585.3" y="164.2" width="4.5" height="4.5" fill="#c6c6c6"/><rect x="1567.0" y="173.3" width="4.5" height="4.5" fill="#c6c6c6"/><rect x="1576.0" y="173.3" width="4.5" height="4.5" fill="#c6c6c6"/><rect x="1585.3" y="173.3" width="4.5" height="4.5" fill="#c6c6c6"/><rect x="1577" y="165" width="3" height="3" fill="#c6c6c6"/></svg>
<span class="t" style="left:121.4px;top:44.5px;font-size:14.97px;font-weight:bold;color:#f4f4f4;transform:scaleX(0.994);transform-origin:0 0;">Transform</span>
<div class="a" style="left:63.6px;top:78.0px;width:184.6px;height:1.6px;background:#3b3b3b;"></div>
<div class="a" style="left:141.0px;top:84.4px;width:28px;height:6px;background:repeating-linear-gradient(90deg,#393939 0 1px,transparent 1px 3px)"></div>
<svg style="left:-1484px;top:-113px" width="1" height="1"><rect x="1567" y="213.8" width="2" height="27.2" fill="#c6c6c6"/><rect x="1570.5" y="217" width="11" height="8" fill="#c6c6c6"/><rect x="1570.5" y="229" width="19.3" height="8" fill="#c6c6c6"/></svg>
<span class="t" style="left:121.4px;top:106.3px;font-size:14.83px;font-weight:bold;color:#f4f4f4;transform:scaleX(0.985);transform-origin:0 0;">Align</span>
<div class="a" style="left:63.6px;top:139.3px;width:184.6px;height:1.8px;background:#3b3b3b;"></div>
<div class="a" style="left:328.0px;top:22.0px;width:28px;height:6px;background:repeating-linear-gradient(90deg,#393939 0 1px,transparent 1px 3px)"></div>
<span class="t" style="left:308.3px;top:43.8px;font-size:15.96px;font-weight:bold;color:#f4f4f4;transform:scaleX(0.878);transform-origin:0 0;">Color</span>
<span class="t" style="left:308.3px;top:85.8px;font-size:15.96px;font-weight:bold;color:#f4f4f4;transform:scaleX(0.897);transform-origin:0 0;">Transparency</span>
<span class="t" style="left:308.3px;top:127.7px;font-size:15.96px;font-weight:bold;color:#f4f4f4;transform:scaleX(0.925);transform-origin:0 0;">Gradient</span>
<span class="t" style="left:308.3px;top:169.6px;font-size:15.96px;font-weight:bold;color:#f4f4f4;transform:scaleX(0.905);transform-origin:0 0;">Appearance</span>
<span class="t" style="left:308.3px;top:211.5px;font-size:15.96px;font-weight:bold;color:#f4f4f4;transform:scaleX(0.895);transform-origin:0 0;">Color Guide</span>
<span class="t" style="left:308.3px;top:253.5px;font-size:15.96px;font-weight:bold;color:#f4f4f4;transform:scaleX(0.881);transform-origin:0 0;">Graphic Styles</span>
<div class="a" style="left:251.0px;top:288.0px;width:185.0px;height:1.5px;background:#3b3b3b;"></div>
<div class="a" style="left:328.0px;top:294.5px;width:28px;height:6px;background:repeating-linear-gradient(90deg,#393939 0 1px,transparent 1px 3px)"></div>
<span class="t" style="left:308.3px;top:315.8px;font-size:15.96px;font-weight:bold;color:#f4f4f4;transform:scaleX(0.923);transform-origin:0 0;">Artboards</span>
<span class="t" style="left:308.3px;top:357.8px;font-size:15.96px;font-weight:bold;color:#f4f4f4;transform:scaleX(0.852);transform-origin:0 0;">Links</span>
<span class="t" style="left:308.3px;top:399.7px;font-size:15.96px;font-weight:bold;color:#f4f4f4;transform:scaleX(0.884);transform-origin:0 0;">Libraries</span>
<div class="a" style="left:251.0px;top:433.3px;width:185.0px;height:1.5px;background:#3b3b3b;"></div>
<div class="a" style="left:328.0px;top:439.5px;width:28px;height:6px;background:repeating-linear-gradient(90deg,#393939 0 1px,transparent 1px 3px)"></div>
<span class="t" style="left:308.3px;top:460.5px;font-size:15.96px;font-weight:bold;color:#f4f4f4;transform:scaleX(0.904);transform-origin:0 0;">Stroke</span>
<span class="t" style="left:308.3px;top:502.5px;font-size:15.96px;font-weight:bold;color:#f4f4f4;transform:scaleX(0.875);transform-origin:0 0;">Swatches</span>
<div class="a" style="left:251.0px;top:537.0px;width:185.0px;height:1.5px;background:#3b3b3b;"></div>
<div class="a" style="left:328.0px;top:543.3px;width:28px;height:6px;background:repeating-linear-gradient(90deg,#393939 0 1px,transparent 1px 3px)"></div>
<span class="t" style="left:308.3px;top:564.9px;font-size:15.96px;font-weight:bold;color:#f4f4f4;transform:scaleX(0.934);transform-origin:0 0;">Pathfinder</span>
<div class="a" style="left:251.0px;top:598.5px;width:185.0px;height:1.5px;background:#3b3b3b;"></div>
<div class="a" style="left:328.0px;top:604.3px;width:28px;height:6px;background:repeating-linear-gradient(90deg,#393939 0 1px,transparent 1px 3px)"></div>
<span class="t" style="left:308.3px;top:625.8px;font-size:15.96px;font-weight:bold;color:#f4f4f4;transform:scaleX(0.895);transform-origin:0 0;">Character</span>
<span class="t" style="left:308.3px;top:667.7px;font-size:15.96px;font-weight:bold;color:#f4f4f4;transform:scaleX(0.906);transform-origin:0 0;">Paragraph</span>
<span class="t" style="left:308.3px;top:709.5px;font-size:15.96px;font-weight:bold;color:#f4f4f4;transform:scaleX(0.920);transform-origin:0 0;">OpenType</span>
<div class="a" style="left:251.0px;top:744.0px;width:185.0px;height:1.5px;background:#3b3b3b;"></div>
<svg style="left:-1484px;top:-113px" width="1" height="1"><path d="M1751 168 C1750 160 1758 155.500 1767 155.500 C1776 155.500 1781 160 1780 166.500 C1779 172 1773 176.800 1764 176.500 C1756 176.300 1751.500 173 1751 168 Z" fill="#c6c6c6"/><circle cx="1757.0" cy="170.0" r="1.9" fill="#535353"/><circle cx="1763.5" cy="172.5" r="1.9" fill="#535353"/><circle cx="1770.0" cy="171.5" r="1.9" fill="#535353"/><circle cx="1775.0" cy="167.5" r="1.9" fill="#535353"/><circle cx="1774.5" cy="162.0" r="1.9" fill="#535353"/><circle cx="1761.200" cy="205.800" r="10" fill="#c0c0c0"/><circle cx="1768" cy="212.500" r="8.800" fill="#8e8e8e" stroke="#c8c8c8" stroke-width="1.5"/><defs><linearGradient id="gd1" x1="0" x2="1" y1="0" y2="0"><stop offset="0" stop-color="#c8c8c8"/><stop offset="1" stop-color="#5c5c5c"/></linearGradient></defs><rect x="1753.300" y="241.500" width="24.500" height="16.500" fill="url(#gd1)" stroke="#bdbdbd" stroke-width="1.4"/><circle cx="1765.300" cy="292.300" r="12" fill="none" stroke="#c6c6c6" stroke-width="1.6" stroke-dasharray="3.2 2"/><circle cx="1765.300" cy="292.300" r="8.800" fill="#c6c6c6"/><path d="M1754.500 345 V322.300 A22.700 22.700 0 0 1 1777.500 345 Z" fill="#9a9a9a" stroke="#c6c6c6" stroke-width="1.4"/><path d="M1754.500 345 L1760 323.500 M1754.500 345 L1768 327.500 M1754.500 345 L1774 334" stroke="#bdbdbd" stroke-width="0.9"/><rect x="1758.200" y="366.200" width="19.500" height="19.500" fill="none" stroke="#c6c6c6" stroke-width="1.6"/><rect x="1753.400" y="377.500" width="8.600" height="8.600" fill="#535353" stroke="#c6c6c6" stroke-width="1.5"/><rect x="1757.500" y="381.500" width="8" height="7.500" fill="#535353" stroke="#c6c6c6" stroke-width="1.5"/><rect x="1751.800" y="424.200" width="16" height="20" fill="none" stroke="#c6c6c6" stroke-width="1.6"/><rect x="1758.800" y="435" width="19" height="15" fill="#535353" stroke="#c6c6c6" stroke-width="1.6"/><rect x="1752" y="473.500" width="16.500" height="10.500" rx="5.200" fill="none" stroke="#c6c6c6" stroke-width="2.8"/><rect x="1762.500" y="473.500" width="16.500" height="10.500" rx="5.200" fill="none" stroke="#c6c6c6" stroke-width="2.8"/><path d="M1757 531.500 C1751 531.500 1749 526 1750.500 521.500 C1752 517 1756 516 1758 516.500 C1760 511 1768 509.500 1772 513.500 C1778 513 1782 518 1780.500 524 C1779.500 529 1776 531.500 1772 531.500 Z" fill="#8c8c8c" stroke="#c6c6c6" stroke-width="1.8"/><path d="M1756 526 C1754 521 1760 517 1764 521 L1769 526.500 C1773 530 1778 525 1775 520.500 C1772 517 1768 519 1766.500 521" fill="none" stroke="#c6c6c6" stroke-width="2"/><rect x="1752.600" y="573" width="25.700" height="1.600" fill="#c6c6c6"/><rect x="1752.600" y="579" width="25.700" height="3.200" fill="#c6c6c6"/><rect x="1752.600" y="586.500" width="25.700" height="5.500" fill="#c6c6c6"/><rect x="1752.600" y="617.300" width="24.500" height="16.700" fill="#8a8a8a" stroke="#c6c6c6" stroke-width="1.4"/><rect x="1754.4" y="619.2" width="6" height="5.600" fill="#c2c2c2"/><rect x="1754.4" y="626.6" width="6" height="5.600" fill="#9d9d9d"/><rect x="1762.0" y="619.2" width="6" height="5.600" fill="#9d9d9d"/><rect x="1762.0" y="626.6" width="6" height="5.600" fill="#c2c2c2"/><rect x="1769.6" y="619.2" width="6" height="5.600" fill="#c2c2c2"/><rect x="1769.6" y="626.6" width="6" height="5.600" fill="#9d9d9d"/><rect x="1754" y="675" width="14" height="14" fill="#c6c6c6"/><rect x="1761.500" y="682" width="15.500" height="16" fill="#c6c6c6" stroke="#535353" stroke-width="1.2"/><rect x="1761.500" y="682" width="6.500" height="7" fill="#9a9a9a"/><path d="M1754 757.500 L1762.200 735.500 L1765 735.500 L1773.200 757.500 L1770 757.500 L1767.800 751.500 L1759.300 751.500 L1757.200 757.500 Z M1760.300 748.800 L1766.800 748.800 L1763.600 739.500 Z" fill="#c6c6c6" fill-rule="evenodd"/><rect x="1775.200" y="734.500" width="1.400" height="26.500" fill="#c6c6c6"/><path d="M1766 781 H1772.800 V803 H1770.500 V783.400 H1768.400 V803 H1766 V793.500 C1757 793.500 1755 790 1755 787.200 C1755 783.500 1758 781 1766 781 Z" fill="#c6c6c6"/><ellipse cx="1764.800" cy="832.700" rx="9.500" ry="12.500" transform="rotate(14 1764.800 832.700)" fill="#c6c6c6"/><ellipse cx="1764.800" cy="832.700" rx="4" ry="10.500" transform="rotate(14 1764.800 832.700)" fill="#535353"/></svg>
</div>

<!-- ===== FLOATING PANELS ===== -->
<div class="a" style="left:18.3px;top:139.5px;width:107.8px;height:799.3px;background:#535353;border-radius:6px 6px 0 0;border-left:1px solid #484848;border-right:1px solid #484848;box-shadow:0 1px 3px rgba(0,0,0,.35)"></div>
<div class="a" style="left:18.3px;top:139.5px;width:107.8px;height:18.0px;background:#3d3d3d;border-radius:6px 6px 0 0;border-bottom:1.5px solid #323232"></div>
<svg style="left:0;top:0" width="1" height="1"><path d="M84.0 146.8 l-3.2 3 l3.2 3 M90.0 146.8 l-3.2 3 l3.2 3" fill="none" stroke="#d0d0d0" stroke-width="1.3"/></svg>
<svg style="left:0;top:0" width="1" height="1"><path d="M107.5 145.5 L116.0 153.8 M116.0 145.5 L107.5 153.8" stroke="#d6d6d6" stroke-width="1.8" fill="none"/></svg>
<div class="a" style="left:57.0px;top:164.0px;width:28px;height:6px;background:repeating-linear-gradient(90deg,#393939 0 1px,transparent 1px 3px)"></div>
<div class="a" style="left:27.0px;top:259.4px;width:91.0px;height:1.2px;background:#484848;"></div>
<div class="a" style="left:27.0px;top:410.7px;width:91.0px;height:1.2px;background:#484848;"></div>
<div class="a" style="left:27.0px;top:525.7px;width:91.0px;height:1.2px;background:#484848;"></div>
<div class="a" style="left:27.0px;top:605.6px;width:91.0px;height:1.2px;background:#484848;"></div>
<div class="a" style="left:27.0px;top:649.2px;width:91.0px;height:1.2px;background:#484848;"></div>
<div class="a" style="left:27.0px;top:728.4px;width:91.0px;height:1.2px;background:#484848;"></div>
<div class="a" style="left:29.3px;top:186.0px;width:41.3px;height:31.8px;background:#2d2d2d;border-radius:3px"></div>
<svg style="left:0;top:0" width="1" height="1"><path d="M43.1 191.3 V215.500 L49.5 208.300 L60.500 207.600 Z" fill="none" stroke="#c4c4c4" stroke-width="1.5"/><path d="M88.100 190.600 V216 L94.500 208.500 L105.700 207.600 Z" fill="#c4c4c4"/><path d="M109.4 216.5 L115.0 211.9 L115.0 216.5 Z" fill="#c4c4c4"/><path d="M40.500 250.500 L55.500 236.500" stroke="#c4c4c4" stroke-width="2.6" stroke-linecap="round"/><path d="M45.5 228.3 L46.5 230.5 L48.7 231.5 L46.5 232.5 L45.5 234.7 L44.5 232.5 L42.3 231.5 L44.5 230.5 Z" fill="#c4c4c4"/><path d="M58.5 227.0 L59.4 229.1 L61.5 230.0 L59.4 230.9 L58.5 233.0 L57.6 230.9 L55.5 230.0 L57.6 229.1 Z" fill="#c4c4c4"/><path d="M59.5 236.8 L60.2 238.3 L61.7 239.0 L60.2 239.7 L59.5 241.2 L58.8 239.7 L57.3 239.0 L58.8 238.3 Z" fill="#c4c4c4"/><path d="M94 251 C86 247 82 240 85 234 C88 228 100 226 106 231 C109 234 108 238 105 240 M89 240 a2.500 2.500 0 1 0 4 3 c1 3 -1 6 -3 6" fill="none" stroke="#c4c4c4" stroke-width="1.5"/><path d="M95 232 V253 L100 247.500 L110.500 246.500 Z" fill="#c4c4c4"/><path d="M38.0 293.5 L42.0 280.0 L50.5 275.5 L57.0 282.0 L52.0 290.0 Z M52.0 274.0 L56.0 270.0 L62.0 276.0 L58.0 280.5 Z" fill="#c4c4c4"/><path d="M39 293 L47.500 284" stroke="#535353" stroke-width="1.2"/><path d="M63.7 296.1 L69.3 291.5 L69.3 296.1 Z" fill="#c4c4c4"/><path d="M86.0 293.5 L90.0 280.0 L98.5 275.5 L105.0 282.0 L100.0 290.0 Z M100.0 274.0 L104.0 270.0 L110.0 276.0 L106.0 280.5 Z" fill="#c4c4c4"/><path d="M87 293 L95.500 284" stroke="#535353" stroke-width="1.2"/><path d="M82.500 272 C87 274 86 279 83 283 C80.500 287 81.500 292 86 293" fill="none" stroke="#c4c4c4" stroke-width="1.4"/><path d="M40 307 H61.300 V312.500 H59 V309.800 H52.200 V325 H55 V327.600 H46.300 V325 H49.200 V309.800 H42.300 V312.500 H40 Z" fill="#c4c4c4"/><path d="M63.7 331.8 L69.3 327.2 L69.3 331.8 Z" fill="#c4c4c4"/><path d="M85 327.500 L106 307.300" stroke="#c4c4c4" stroke-width="1.8"/><path d="M109.4 331.8 L115.0 327.2 L115.0 331.8 Z" fill="#c4c4c4"/><ellipse cx="50.600" cy="353.500" rx="13" ry="10" fill="#707070" stroke="#c4c4c4" stroke-width="1.5"/><path d="M63.7 367.8 L69.3 363.2 L69.3 367.8 Z" fill="#c4c4c4"/><path d="M107 341.500 C108.500 343 100 353 96.500 356.500 L93.500 353.500 C97 350 105.500 340.500 107 341.500 Z M92.500 354.500 L95.500 357.500 C95 362 90 365 84.500 364 C87 362 87 358 88.500 356 C89.500 354.500 91 354 92.500 354.500 Z" fill="#c4c4c4"/><path d="M109.4 367.8 L115.0 363.2 L115.0 367.8 Z" fill="#c4c4c4"/><path d="M38.500 401.500 L41 392.500 L53.500 379.500 C56 377.500 61 381.500 59.500 385 L47 398.500 Z" fill="#c4c4c4"/><path d="M41 392.500 L47 398.500 M45 388 L51.500 394 M49 384 L55.500 390" stroke="#535353" stroke-width="1.3"/><path d="M40 399.800 L41.200 395.500 L44.300 398.600 Z" fill="#535353"/><path d="M63.7 404.4 L69.3 399.8 L69.3 404.4 Z" fill="#c4c4c4"/><path d="M97.400 376.300 L108.500 388.300 L98 397 L87 385 Z" fill="#c4c4c4"/><path d="M86 386.500 L96.500 398 L91.900 401.500 L83.500 393 Z" fill="none" stroke="#c4c4c4" stroke-width="1.4"/><path d="M109.4 404.4 L115.0 399.8 L115.0 404.4 Z" fill="#c4c4c4"/><path d="M37.200 423.500 V440.600 L45.600 432 Z" fill="none" stroke="#c4c4c4" stroke-width="1.4"/><path d="M62.800 423.500 V440.600 L53 432 Z" fill="#c4c4c4"/><path d="M49.800 421 V444" stroke="#c4c4c4" stroke-width="1.4" stroke-dasharray="1.5 1.5"/><path d="M63.7 447.3 L69.3 442.7 L69.3 447.3 Z" fill="#c4c4c4"/><rect x="88.700" y="421.700" width="19.800" height="17.600" fill="none" stroke="#c4c4c4" stroke-width="1.4"/><rect x="82.600" y="432.800" width="13.900" height="12" fill="none" stroke="#c4c4c4" stroke-width="1.4"/><path d="M99 431.500 L105 425.500 M100.500 425.300 H105.200 V430" fill="none" stroke="#c4c4c4" stroke-width="1.4"/><path d="M109.4 447.3 L115.0 442.7 L115.0 447.3 Z" fill="#c4c4c4"/><path d="M40 461 C44 457 49 460 47.500 466 C52 462 58 461 58.500 466 C61 463.500 65 466.500 64 472 C62 468 58 470 56 474 C52 478 46 477 45.500 472 C45 468 46 464 40 461 Z" fill="#c4c4c4"/><path d="M38.500 478 L55.500 461.500" stroke="#c4c4c4" stroke-width="1.2"/><circle cx="38.500" cy="478" r="1.800" fill="#535353" stroke="#c4c4c4" stroke-width="1.100"/><circle cx="54.500" cy="462.500" r="1.800" fill="#535353" stroke="#c4c4c4" stroke-width="1.100"/><circle cx="46.500" cy="470.500" r="2" fill="#535353" stroke="#c4c4c4" stroke-width="1.100"/><path d="M63.7 483.2 L69.3 478.6 L69.3 483.2 Z" fill="#c4c4c4"/><path d="M82.600 456.900 V477.200 L88 471.500 L96.500 470.700 Z" fill="#c4c4c4"/><rect x="90.500" y="461" width="19" height="17.500" fill="none" stroke="#c4c4c4" stroke-width="1.500" stroke-dasharray="2 1.6"/><circle cx="44.500" cy="503.500" r="7.300" fill="none" stroke="#c4c4c4" stroke-width="1.400"/><circle cx="52" cy="501.500" r="8.300" fill="none" stroke="#c4c4c4" stroke-width="1.400"/><path d="M40 503.500 H54" stroke="#c4c4c4" stroke-width="1.3" stroke-dasharray="1.3 1.5"/><path d="M55.400 500.500 V517.500 L60 512.800 L66.500 512.300 Z" fill="#c4c4c4" stroke="#535353" stroke-width="0.8"/><path d="M63.7 519.0 L69.3 514.4 L69.3 519.0 Z" fill="#c4c4c4"/><path d="M82.600 494 V517 L97.500 508 V498.500 Z M87.500 495.500 V514 M92.500 497 V511 M82.600 501.500 L97.500 503 M82.600 509 L97.500 505.500" fill="none" stroke="#c4c4c4" stroke-width="1.300"/><path d="M97.500 505 H103 M95 509 H106 M90 513 H108 M83 517 H109" stroke="#9a9a9a" stroke-width="1.2"/><path d="M109.4 519.0 L115.0 514.4 L115.0 519.0 Z" fill="#c4c4c4"/><rect x="38.700" y="538.300" width="23.500" height="20.400" fill="none" stroke="#c4c4c4" stroke-width="1.500"/><path d="M39 545 C46 543 53 547 62 542 M39 552 C46 549 54 556 62 551 M46 538.500 C49 545 44 552 47 558.500 M55 538.500 C58 546 52 551 55.500 558.500 M39 557 C44 553 50 553 52 558.500" fill="none" stroke="#c4c4c4" stroke-width="1.300"/><defs><linearGradient id="gd2" x1="0" x2="1" y1="0" y2="0"><stop offset="0" stop-color="#c8c8c8"/><stop offset="1" stop-color="#555"/></linearGradient></defs><rect x="83.500" y="538.300" width="23.700" height="20.400" fill="url(#gd2)" stroke="#c4c4c4" stroke-width="1.500"/><path d="M56 573.500 C58 571.500 62 575 60 577.500 L58 579.500 L59.500 581 L57 583.500 L55.500 582 L43.500 594 C41.500 596 37.500 596.500 38.500 593 C38.500 591.500 39 591 40 590 L52 578 L50.500 576.500 L53 574 L54.500 575.500 Z" fill="#c4c4c4"/><path d="M52.500 581 L42 591.500" stroke="#535353" stroke-width="1.600"/><path d="M63.7 598.5 L69.3 593.9 L69.3 598.5 Z" fill="#c4c4c4"/><rect x="82" y="574" width="11.700" height="11.700" fill="#c4c4c4"/><rect x="89.500" y="578.500" width="11.500" height="11.500" rx="4" fill="#8d8d8d" stroke="#c4c4c4" stroke-width="1.300"/><circle cx="103" cy="589" r="5.300" fill="#535353" stroke="#c4c4c4" stroke-width="1.500"/><rect x="49.600" y="623.500" width="13.900" height="16.300" fill="none" stroke="#c4c4c4" stroke-width="1.500"/><rect x="53" y="617.500" width="6.500" height="4.500" fill="#c4c4c4"/><circle cx="56.500" cy="631.500" r="3.300" fill="none" stroke="#c4c4c4" stroke-width="1.800"/><rect x="37.5" y="618.0" width="2.400" height="2.400" fill="#c4c4c4"/><rect x="41.0" y="618.0" width="2.400" height="2.400" fill="#c4c4c4"/><rect x="44.5" y="618.0" width="2.400" height="2.400" fill="#c4c4c4"/><rect x="48.0" y="618.0" width="2.400" height="2.400" fill="#c4c4c4"/><rect x="37.5" y="622.0" width="2.400" height="2.400" fill="#c4c4c4"/><rect x="41.5" y="622.0" width="2.400" height="2.400" fill="#c4c4c4"/><rect x="37.5" y="626.5" width="2.400" height="2.400" fill="#c4c4c4"/><path d="M63.7 642.3 L69.3 637.7 L69.3 642.3 Z" fill="#c4c4c4"/><path d="M82.600 616.700 V638 H108.500" fill="none" stroke="#c4c4c4" stroke-width="1.500"/><rect x="88" y="627" width="4.300" height="10.500" fill="#c4c4c4"/><rect x="95.500" y="618" width="4.300" height="19.500" fill="#c4c4c4"/><rect x="103" y="621.300" width="4.300" height="16.200" fill="#c4c4c4"/><path d="M109.4 642.3 L115.0 637.7 L115.0 642.3 Z" fill="#c4c4c4"/><path d="M43.700 666.700 H56 L60.400 671 V681.500 H43.700 Z" fill="#707070" stroke="#c4c4c4" stroke-width="1.400"/><path d="M35.500 666 H42.500 M43.700 658.500 V665.500" stroke="#c4c4c4" stroke-width="1.300"/><path d="M100 659 L107.500 665 L103 671 L96 665.500 Z" fill="#c4c4c4"/><path d="M96.500 666.500 L82.500 683.500 L102 671" fill="none" stroke="#c4c4c4" stroke-width="1.400"/><path d="M109.4 686.1 L115.0 681.5 L115.0 686.1 Z" fill="#c4c4c4"/><path d="M45 719 C42 716 40 711 38 708.500 C37 706.500 39.500 705.500 41 707 L44 710.500 L43 699 C43 697 45.500 697 46 699 L47.500 705 L48 696.500 C48 694.500 50.800 694.500 51 696.500 L51.500 705 L53.500 697.500 C54 695.500 56.500 696 56.300 698 L55.500 706.500 L58.500 701.500 C59.500 700 61.500 701 61 702.500 C59.500 707 59 713 55.500 719 Z" fill="#c4c4c4"/><path d="M63.7 721.9 L69.3 717.3 L69.3 721.9 Z" fill="#c4c4c4"/><circle cx="92.400" cy="705" r="8" fill="none" stroke="#c4c4c4" stroke-width="1.900"/><path d="M98.500 711 L106.500 718.500" stroke="#c4c4c4" stroke-width="3" stroke-linecap="round"/><rect x="55.700" y="763.700" width="52.800" height="52.500" fill="#000" stroke="#fff" stroke-width="1"/><rect x="69" y="777" width="25.800" height="25.800" fill="#535353" stroke="#fff" stroke-width="1"/><rect x="28.200" y="736.200" width="53.400" height="53.300" fill="#fff" stroke="#2a2a2a" stroke-width="1"/><path d="M29 788.800 L81 737" stroke="#f00" stroke-width="1.600"/><path d="M99.500 740 V743.500 H95 M98.500 740.500 C103 740 106.500 743 106.500 748 M103.500 748.500 H110 L106.700 753.500 Z M95 743.500 L99.500 739 L99.500 748 Z" fill="#c4c4c4" stroke="#c4c4c4" stroke-width="1.200"/><rect x="33.500" y="803.500" width="12.500" height="12.500" fill="#1e1e1e" stroke="#8a8a8a" stroke-width="1"/><rect x="37" y="807" width="5" height="5" fill="none" stroke="#ddd" stroke-width="1"/><rect x="28.700" y="798.400" width="11.500" height="11.500" fill="#fff" stroke="#8a8a8a" stroke-width="1"/></svg>
<div class="a" style="left:27.6px;top:826.4px;width:88.2px;height:30.5px;background:transparent;border:1px solid #626262;border-radius:4px"></div>
<div class="a" style="left:87.2px;top:827.4px;width:27.6px;height:28.5px;background:#3a3a3a;border-radius:0 3px 3px 0"></div>
<div class="a" style="left:56.7px;top:827.0px;width:1.0px;height:29.0px;background:#626262;"></div>
<div class="a" style="left:86.4px;top:827.0px;width:1.0px;height:29.0px;background:#626262;"></div>
<div class="a" style="left:31.7px;top:831.9px;width:20.5px;height:20.0px;background:#000;"></div>
<div class="a" style="left:62.2px;top:831.9px;width:20.0px;height:20.0px;background:linear-gradient(90deg,#fff,#000);border:2px solid #000"></div>
<div class="a" style="left:93.4px;top:832.0px;width:17.3px;height:18.0px;background:#fff;border:1.5px solid #000"></div>
<svg style="left:0;top:0" width="1" height="1"><path d="M95 848.500 L109 833.500" stroke="#f00" stroke-width="3.200"/></svg>
<div class="a" style="left:28.2px;top:863.8px;width:87.6px;height:27.2px;background:transparent;border:1px solid #5c5c5c;border-radius:4px"></div>
<div class="a" style="left:29.2px;top:864.8px;width:27.0px;height:25.2px;background:#333;border-radius:3px 0 0 3px"></div>
<div class="a" style="left:56.7px;top:864.5px;width:1.0px;height:26.0px;background:#5c5c5c;"></div>
<div class="a" style="left:86.4px;top:864.5px;width:1.0px;height:26.0px;background:#5c5c5c;"></div>
<svg style="left:0;top:0" width="1" height="1"><circle cx="40" cy="875.500" r="5" fill="none" stroke="#c4c4c4" stroke-width="1.800"/><rect x="41" y="877" width="9" height="8.500" fill="#c4c4c4"/><circle cx="70" cy="875.500" r="5" fill="#6a6a6a" stroke="#c4c4c4" stroke-width="1.800"/><rect x="71" y="877" width="9" height="8.500" fill="#c4c4c4"/><path d="M66 872 a5 5 0 0 1 8 6" fill="none" stroke="#c4c4c4" stroke-width="1.800"/><circle cx="101" cy="877" r="5.500" fill="none" stroke="#6c6c6c" stroke-width="1.600"/><path d="M101 877 H106.500 A5.500 5.500 0 0 1 101 882.500 Z" fill="#6c6c6c"/></svg>
<svg style="left:0;top:0" width="1" height="1"><rect x="56.500" y="911" width="20" height="17" fill="#6e6e6e" stroke="#c4c4c4" stroke-width="1.600"/><rect x="68.500" y="904.800" width="21" height="16.500" fill="#6e6e6e" stroke="#c4c4c4" stroke-width="1.600"/><rect x="68.500" y="904.800" width="21" height="3" fill="#c4c4c4"/></svg>
<div class="a" style="left:1343.0px;top:156.2px;width:185.6px;height:81.5px;background:#535353;border-radius:7px 7px 0 0;box-shadow:-1px 1px 3px rgba(0,0,0,.4)"></div>
<div class="a" style="left:1343.0px;top:156.2px;width:185.6px;height:20.0px;background:#3f3f3f;border-radius:7px 7px 0 0;border-bottom:1.5px solid #2f2f2f"></div>
<svg style="left:0;top:0" width="1" height="1"><path d="M1484.500 164.700 l3 2.900 l-3 2.900 M1490.500 164.700 l3 2.900 l-3 2.900" fill="none" stroke="#d0d0d0" stroke-width="1.300"/><path d="M1510.5 164.0 L1518.5 171.5 M1518.5 164.0 L1510.5 171.5" stroke="#d6d6d6" stroke-width="1.8" fill="none"/></svg>
<div class="a" style="left:1421.2px;top:182.2px;width:28px;height:6px;background:repeating-linear-gradient(90deg,#393939 0 1px,transparent 1px 3px)"></div>
<svg style="left:0;top:0" width="1" height="1"><circle cx="1372" cy="213.800" r="11" fill="#c6c6c6"/><path d="M1373 201 A12.800 12.800 0 0 1 1373 226.600" fill="none" stroke="#c6c6c6" stroke-width="1.600"/><rect x="1370.500" y="199" width="5" height="4.500" fill="#c6c6c6"/><rect x="1383" y="211.500" width="4.500" height="5" fill="#c6c6c6"/><rect x="1370.500" y="224.500" width="5" height="4.500" fill="#c6c6c6"/></svg>
<span class="t" style="left:1401.4px;top:204.6px;font-size:14.55px;font-weight:bold;color:#f4f4f4;transform:scaleX(1.017);transform-origin:0 0;">Image Trace</span>
<div class="a" style="left:1368.4px;top:662.0px;width:356.2px;height:303.0px;background:#535353;border-radius:7px 7px 0 0;box-shadow:-1px 1px 4px rgba(0,0,0,.45)"></div>
<div class="a" style="left:1368.4px;top:662.0px;width:356.2px;height:20.5px;background:#3e3e3e;border-radius:7px 7px 0 0;border-bottom:2px solid #2e2e2e"></div>
<svg style="left:0;top:0" width="1" height="1"><path d="M1683.0 670.7 l-3.2 3 l3.2 3 M1689.0 670.7 l-3.2 3 l3.2 3" fill="none" stroke="#d0d0d0" stroke-width="1.3"/></svg>
<svg style="left:0;top:0" width="1" height="1"><path d="M1706.2 669.5 L1714.8 678.0 M1714.8 669.5 L1706.2 678.0" stroke="#d6d6d6" stroke-width="1.8" fill="none"/></svg>
<div class="a" style="left:1369.4px;top:684.0px;width:354.2px;height:39.8px;background:#434343;"></div>
<div class="a" style="left:1369.4px;top:684.0px;width:70.0px;height:39.8px;background:#535353;"></div>
<span class="t" style="left:1383.0px;top:694.9px;font-size:15.54px;font-weight:bold;color:#f4f4f4;transform:scaleX(0.894);transform-origin:0 0;">Layers</span>
<svg style="left:0;top:0" width="1" height="1"><rect x="1699.300" y="698.3" width="15.200" height="1.300" fill="#c8c8c8"/><rect x="1699.300" y="701.5" width="15.200" height="1.300" fill="#c8c8c8"/><rect x="1699.300" y="704.7" width="15.200" height="1.300" fill="#c8c8c8"/><rect x="1699.300" y="707.9" width="15.200" height="1.300" fill="#c8c8c8"/></svg>
<div class="a" style="left:1378.7px;top:733.8px;width:336.6px;height:189.7px;background:#535353;border:1px solid #626262;border-radius:2px"></div>
<div class="a" style="left:1379.7px;top:734.6px;width:334.6px;height:29.4px;background:#4d657f;"></div>
<div class="a" style="left:1409.5px;top:734.6px;width:1.0px;height:29.4px;background:#5b7088;"></div>
<div class="a" style="left:1441.5px;top:734.6px;width:1.0px;height:29.4px;background:#5b7088;"></div>
<div class="a" style="left:1450.5px;top:734.6px;width:1.0px;height:29.4px;background:#5b7088;"></div>
<div class="a" style="left:1661.4px;top:734.6px;width:1.0px;height:29.4px;background:#5b7088;"></div>
<div class="a" style="left:1443.4px;top:735.8px;width:4.9px;height:26.6px;background:#f04e4e;"></div>
<div class="a" style="left:1379.7px;top:764.9px;width:334.6px;height:30.5px;background:#4f4f4f;"></div>
<div class="a" style="left:1379.7px;top:764.0px;width:334.6px;height:1.0px;background:#5e5e5e;"></div>
<div class="a" style="left:1379.7px;top:795.4px;width:334.6px;height:1.0px;background:#5e5e5e;"></div>
<div class="a" style="left:1409.5px;top:765.0px;width:1.0px;height:30.4px;background:#5e5e5e;"></div>
<div class="a" style="left:1441.5px;top:765.0px;width:1.0px;height:30.4px;background:#5e5e5e;"></div>
<div class="a" style="left:1450.5px;top:765.0px;width:1.0px;height:30.4px;background:#5e5e5e;"></div>
<div class="a" style="left:1661.4px;top:765.0px;width:1.0px;height:30.4px;background:#5e5e5e;"></div>
<div class="a" style="left:1443.4px;top:767.0px;width:4.9px;height:26.8px;background:#4c7df0;"></div>
<div class="a" style="left:1487.4px;top:736.2px;width:26.6px;height:26.7px;background:#fff;border:2px solid #000"></div>
<div class="a" style="left:1487.4px;top:767.3px;width:26.6px;height:26.7px;background:#b4b4a8;border:2px solid #000"></div>
<svg style="left:0;top:0" width="1" height="1"><path d="M1494 758 C1493 752 1497 750 1498 746 C1496 743 1497 740 1500 741 C1502 739 1505 741 1504 744 C1507 743 1510 741 1511 739 M1498 746 C1501 748 1503 751 1502 755 C1504 757 1503 759 1500 759 M1492 748 C1494 746 1496 746 1498 747 M1503 748 C1506 747 1508 749 1509 752" fill="none" stroke="#111" stroke-width="1.100"/><path d="M1495 772 C1497 771 1506 771 1508 772 M1496 779 C1499 777 1502 780 1504 777 M1497 785 C1500 787 1503 784 1506 786 M1499 781 L1501 783" fill="none" stroke="#7c7c72" stroke-width="1"/><path d="M1385 748.500 C1389 742.500 1399 742.500 1403.500 748.500 C1399 754.500 1389 754.500 1385 748.500 Z" fill="none" stroke="#d4dbe3" stroke-width="1.600"/><circle cx="1394.300" cy="748.500" r="3" fill="#d4dbe3"/><circle cx="1395.300" cy="747.800" r="1.100" fill="#4d657f"/><path d="M1461.500 743.7 L1466.500 748.7 L1461.500 753.7" fill="none" stroke="#e8e8e8" stroke-width="1.700"/><path d="M1461.500 775.0 L1466.500 780.0 L1461.500 785.0" fill="none" stroke="#e8e8e8" stroke-width="1.700"/><circle cx="1677.900" cy="748.800" r="5.300" fill="none" stroke="#e2e2e2" stroke-width="1.500"/><circle cx="1677.900" cy="781.300" r="5.300" fill="none" stroke="#e2e2e2" stroke-width="1.500"/><path d="M1706 734.600 H1714.300 V743.200 Z" fill="#d2d2d2"/><rect x="1419.800" y="778.500" width="12.800" height="9.400" rx="1" fill="#c2c2c2"/><path d="M1422.500 778.500 V776.500 A3.700 3.700 0 0 1 1429.900 776.500 V778.500" fill="none" stroke="#c2c2c2" stroke-width="1.800"/><circle cx="1426.200" cy="782.300" r="1.400" fill="#4f4f4f"/><rect x="1425.600" y="782.500" width="1.200" height="3" fill="#4f4f4f"/><ellipse cx="1398.700" cy="782.500" rx="41.500" ry="17.700" fill="none" stroke="#ffe900" stroke-width="4"/><circle cx="1521" cy="936.500" r="5" fill="none" stroke="#6f6f6f" stroke-width="1.700"/><path d="M1517.500 940.500 L1511 947" stroke="#6f6f6f" stroke-width="2"/><rect x="1549" y="931.500" width="10.500" height="10.500" fill="none" stroke="#c6c6c6" stroke-width="1.500"/><rect x="1554" y="936.500" width="10.500" height="10.500" fill="#8a8a8a" stroke="#c6c6c6" stroke-width="1.500"/><path d="M1593 934 H1606.500 V947 H1597 V938.500 Z" fill="#c6c6c6"/><path d="M1585.500 931 V938.500 H1592 M1589.500 935.500 L1592.500 938.500 L1589.500 941.500" fill="none" stroke="#c6c6c6" stroke-width="1.600"/><path d="M1629 934 H1644 V947.500 H1634.500 V940 H1629 Z" fill="#c6c6c6"/><path d="M1629 941.500 L1633 941.500 L1633 946 Z" fill="#c6c6c6"/><path d="M1667 934.500 H1682.500 M1671.500 934 V931.500 H1678 V934" fill="none" stroke="#c6c6c6" stroke-width="1.600"/><path d="M1668.500 936.500 H1681 V947.500 H1668.500 Z" fill="none" stroke="#c6c6c6" stroke-width="1.600"/><path d="M1672 938.500 V945.500 M1674.800 938.500 V945.500 M1677.600 938.500 V945.500" stroke="#c6c6c6" stroke-width="1.100"/></svg>
<span class="t" style="left:1522.0px;top:742.1px;font-size:15.11px;color:#eaeaea;transform:scaleX(0.952);transform-origin:0 0;">Layer 2</span>
<span class="t" style="left:1522.0px;top:774.1px;font-size:15.11px;color:#e2e2e2;transform:scaleX(0.944);transform-origin:0 0;">Layer 1</span>
<span class="t" style="left:1377.7px;top:933.4px;font-size:14.41px;color:#bababa;transform:scaleX(1.001);transform-origin:0 0;">2 Layers</span>
<div class="a" style="left:1368.4px;top:952.5px;width:356.2px;height:2.0px;background:#3a3a3a;"></div>
<div class="a" style="left:1532.0px;top:957.0px;width:28px;height:6px;background:repeating-linear-gradient(90deg,#393939 0 1px,transparent 1px 3px)"></div>

<!-- ===== TASKBAR ===== -->
<div class="a" id="taskbar" style="left:0;top:1045px;width:1920px;height:35px;background:#000">
<div class="a" style="left:556.3px;top:0.0px;width:60.7px;height:35.0px;background:#3c3c3c;"></div>
<div class="a" style="left:1052.5px;top:0.0px;width:55.5px;height:35.0px;background:#1c1c1c;"></div>
<div class="a" style="left:1111.5px;top:0.0px;width:1.0px;height:35.0px;background:#262626;"></div>
<div class="a" style="left:1914.0px;top:0.0px;width:1.0px;height:35.0px;background:#4a4a4a;"></div>
<div class="a" style="left:510.0px;top:10.8px;width:27.5px;height:27.5px;background:#1f0740;border:1.500px solid #d08fff"></div>
<span class="t" style="left:515.0px;top:13.7px;font-size:17.80px;color:#d08fff;transform:scaleX(0.818);transform-origin:0 0;">Ae</span>
<div class="a" style="left:572.0px;top:10.8px;width:27.5px;height:27.5px;background:#2a1300;border:1.500px solid #ff7f18"></div>
<span class="t" style="left:577.0px;top:13.7px;font-size:17.80px;color:#ff7f18;transform:scaleX(1.125);transform-origin:0 0;">Ai</span>
<div class="a" style="left:634.0px;top:10.8px;width:27.5px;height:27.5px;background:#2a0634;border:1.500px solid #e377ff"></div>
<span class="t" style="left:639.0px;top:13.7px;font-size:17.80px;color:#e377ff;transform:scaleX(1.000);transform-origin:0 0;">Pr</span>
<div class="a" style="left:696.0px;top:10.8px;width:27.5px;height:27.5px;background:#0c1c26;border:1.500px solid #add5ec"></div>
<span class="t" style="left:701.0px;top:13.7px;font-size:17.80px;color:#add5ec;transform:scaleX(1.125);transform-origin:0 0;">Lr</span>
<div class="a" style="left:758.0px;top:10.8px;width:27.5px;height:27.5px;background:#0a1c26;border:1.500px solid #2fc8f7"></div>
<span class="t" style="left:763.0px;top:13.7px;font-size:17.80px;color:#2fc8f7;transform:scaleX(0.857);transform-origin:0 0;">Ps</span>
<svg style="left:0;top:-1045px" width="1" height="1"><g fill="#fff"><path d="M20 1062.800 L28.500 1061.600 V1069.500 H20 Z M29.700 1061.400 L40 1060 V1069.500 H29.700 Z M20 1070.700 H28.500 V1078.600 L20 1077.400 Z M29.700 1070.700 H40 V1080.200 L29.700 1078.800 Z"/></g><circle cx="93" cy="1067" r="6.700" fill="none" stroke="#fff" stroke-width="1.500"/><path d="M88.300 1071.800 L79 1081.500" stroke="#fff" stroke-width="1.600"/><rect x="142.800" y="1061.500" width="14.500" height="16.500" fill="none" stroke="#fff" stroke-width="1.400"/><path d="M141 1064 H138.700 V1075.500 H141 M159 1064 H161.300 V1075.500 H159" fill="none" stroke="#fff" stroke-width="1.300"/><path d="M203 1070 C203 1062 208.500 1057.500 215 1057.500 C222 1057.500 226.500 1062.500 226 1070.500 H210.500 C211 1075 216 1077.500 224.500 1075 V1080 C212 1084 204.500 1079 205 1071.500 C205.500 1067 209 1064 213 1063.500 C210 1065 209.500 1067 209.500 1068 H219 C219 1063.500 215 1061.500 211 1062.800 C207 1064 204 1067 203 1070 Z" fill="#0c7cd8"/><g fill="#fff"><path d="M268.300 1055.500 L275.500 1060.200 L268.300 1064.800 L261 1060.200 Z M282.800 1055.500 L290 1060.200 L282.800 1064.800 L275.500 1060.200 Z M268.300 1064.800 L275.500 1069.500 L268.300 1074.200 L261 1069.500 Z M282.800 1064.800 L290 1069.500 L282.800 1074.200 L275.500 1069.500 Z M275.500 1071.200 L282.500 1075.700 L275.500 1080.300 L268.500 1075.700 Z"/></g><path d="M324.500 1059.500 Q324.500 1058 326 1058 H336 L338 1060.200 H350 Q351.200 1060.200 351.200 1061.500 V1081 H324.500 Z" fill="#fcd770"/><rect x="324.500" y="1058.300" width="11" height="3" fill="#f0b429"/><rect x="326.500" y="1059.200" width="4" height="1.300" fill="#fff"/><path d="M329 1081 V1071 H346.500 V1081" fill="none" stroke="#2e9be6" stroke-width="3"/><path d="M385 1063.500 H414 V1081 H385 Z" fill="#fff"/><path d="M395 1063.500 V1060.500 A4.500 4.500 0 0 1 404 1060.500 V1063.500" fill="none" stroke="#fff" stroke-width="1.500"/><rect x="393" y="1067.500" width="6" height="6" fill="#f25022"/><rect x="400" y="1067.500" width="6" height="6" fill="#7fba00"/><rect x="393" y="1074.500" width="6" height="6" fill="#00a4ef"/><rect x="400" y="1074.500" width="6" height="6" fill="#ffb900"/><path d="M462.500 1070.500 C458 1064 450 1063 449 1070.500 C450 1078 458 1077 462.500 1070.500 C467 1064 475 1063 476 1070.500 C475 1078 467 1077 462.500 1070.500 Z" fill="none" stroke="#3ba9a4" stroke-width="2.600"/><path d="M468 1066 C472 1063.500 476 1066 476 1070.500" fill="none" stroke="#7cc576" stroke-width="2.600"/><path d="M833.200 1056 L836.500 1064 H829.800 Z" fill="#f48b00"/><path d="M829.300 1065.300 H837 L838.700 1069.800 H827.500 Z" fill="#f2f2f2"/><path d="M827 1071 H839.200 L841 1075.700 H825.200 Z" fill="#f48b00"/><path d="M824.700 1077 H841.500 L843.700 1081 H822.500 Z" fill="#e8e8e8"/><path d="M881 1066 L896 1057.500 L911.200 1066 V1081 H881 Z" fill="#fff"/><path d="M881 1066.500 L907 1066.500 L897.500 1071.500 L905 1076.500" fill="none" stroke="#000" stroke-width="2"/><defs><clipPath id="av"><rect x="943" y="1055" width="30" height="30" rx="4"/></clipPath></defs><g clip-path="url(#av)"><rect x="943" y="1055" width="30" height="30" fill="#b8a88a"/><path d="M943 1055 H973 V1062 C965 1058 952 1058 945 1066 L943 1075 Z" fill="#7d8a74"/><path d="M945 1064 C950 1057 962 1057 966 1064 C968 1070 966 1078 962 1082 H950 C945 1078 943 1070 945 1064 Z" fill="#c24a30"/><path d="M950 1066 C954 1062 962 1063 964 1069 C965 1074 962 1080 958 1082 H953 C949 1078 948 1071 950 1066 Z" fill="#ecd2c2"/><path d="M966 1058 L973 1062 V1080 L965 1070 Z" fill="#4d4740"/></g><g><circle cx="1020.0" cy="1069.5" r="13.700" fill="#dd4b3e"/><path d="M1020.0 1069.5 L1033.2 1066.0 A13.700 13.700 0 0 1 1018.5 1083.2 L1014.5 1072.7 Z" fill="#ffcd42"/><path d="M1020.0 1069.5 L1008.1 1062.7 A13.700 13.700 0 0 0 1018.5 1083.2 L1025.5 1072.7 Z" fill="#1da362"/><circle cx="1020.0" cy="1069.5" r="6.300" fill="#fff"/><circle cx="1020.0" cy="1069.5" r="5" fill="#4a8af4"/></g><g><circle cx="1143.7" cy="1069.5" r="13.700" fill="#dd4b3e"/><path d="M1143.7 1069.5 L1156.9 1066.0 A13.700 13.700 0 0 1 1142.2 1083.2 L1138.2 1072.7 Z" fill="#ffcd42"/><path d="M1143.7 1069.5 L1131.8 1062.7 A13.700 13.700 0 0 0 1142.2 1083.2 L1149.2 1072.7 Z" fill="#1da362"/><circle cx="1143.7" cy="1069.5" r="6.300" fill="#fff"/><circle cx="1143.7" cy="1069.5" r="5" fill="#4a8af4"/></g><path d="M1068 1072 C1067 1063 1076 1058 1085 1059 C1093 1060 1097 1066 1095 1073 C1093 1080 1085 1083 1078 1082 C1074 1081 1076 1077 1073 1076 C1070 1075.500 1068.500 1075 1068 1072 Z" fill="#a9d3ee"/><circle cx="1074" cy="1067" r="2" fill="#e24a3a"/><circle cx="1079" cy="1063.500" r="2" fill="#62b34a"/><circle cx="1084.500" cy="1063" r="2" fill="#f2b431"/><circle cx="1077" cy="1073.500" r="2.200" fill="#222"/><path d="M1093.500 1060 L1084 1080" stroke="#d98e3c" stroke-width="2"/><path d="M1092 1061 L1096.500 1056.500 L1097.500 1062 Z" fill="#e6c38a"/><circle cx="1483" cy="1071" r="11.800" fill="#1b8eda" stroke="#fff" stroke-width="2"/><circle cx="1494" cy="1076" r="4.600" fill="#f5a21d"/><rect x="1493.500" y="1074.500" width="1.200" height="4" fill="#fff"/><text x="1483" y="1078" text-anchor="middle" font-family="Liberation Sans" font-weight="bold" font-size="20" fill="#fff">?</text><circle cx="1541" cy="1064.500" r="3.200" fill="none" stroke="#fff" stroke-width="1.400"/><path d="M1535.500 1075 C1535.500 1069 1546.500 1069 1546.500 1075" fill="none" stroke="#fff" stroke-width="1.400"/><circle cx="1533" cy="1071" r="2.800" fill="#000" stroke="#fff" stroke-width="1.400"/><path d="M1528 1080.500 C1528 1075 1538 1075 1538 1080.500" fill="none" stroke="#fff" stroke-width="1.400"/><path d="M1574 1074 L1582 1066.500 L1590 1074" fill="none" stroke="#fff" stroke-width="1.400"/><rect x="1604.500" y="1059.500" width="15" height="22" rx="7.500" fill="#0a84e6"/><path d="M1608.500 1065.500 L1615.500 1072.500 L1612 1076 V1062 L1615.500 1065.500 L1608.500 1072.500" fill="none" stroke="#fff" stroke-width="1.300"/><rect x="1633.500" y="1066" width="17" height="9.300" fill="none" stroke="#fff" stroke-width="1.300"/><rect x="1651" y="1068.500" width="1.500" height="4.300" fill="#fff"/><rect x="1635.300" y="1067.800" width="2.500" height="5.700" fill="#fff"/><path d="M1668 1076 A11 11 0 0 1 1680 1064 M1671.500 1077 A7.500 7.500 0 0 1 1680.500 1068 M1675 1078 A4 4 0 0 1 1680.500 1072" fill="none" stroke="#fff" stroke-width="1.500"/><circle cx="1679.500" cy="1077" r="1.600" fill="#fff"/><path d="M1667.500 1070 L1673 1081 H1662 Z" fill="#f7c11e"/><rect x="1667" y="1073.500" width="1.100" height="4" fill="#000"/><path d="M1691.500 1066 H1695 L1699.500 1062 V1077 L1695 1073 H1691.500 Z" fill="none" stroke="#fff" stroke-width="1.300"/><path d="M1702.500 1066.500 A4 4 0 0 1 1702.500 1072.500 M1705.500 1064 A7.500 7.500 0 0 1 1705.500 1075" fill="none" stroke="#fff" stroke-width="1.300"/><path d="M1708.500 1061.500 A11 11 0 0 1 1708.500 1077.500" fill="none" stroke="#777" stroke-width="1.300"/><path d="M1870 1061 H1888.500 V1075.500 H1882.500 L1879.500 1079 L1876.500 1075.500 H1870 Z" fill="none" stroke="#fff" stroke-width="1.400"/></svg>
<span class="t" style="left:1725.5px;top:18.5px;font-size:14.12px;color:#fff;transform:scaleX(0.898);transform-origin:0 0;">ENG</span>
<span class="t" style="left:1782.5px;top:6.7px;font-size:14.41px;color:#fff;transform:scaleX(0.956);transform-origin:0 0;">2:06 PM</span>
<span class="t" style="left:1770.5px;top:28.7px;font-size:14.55px;color:#fff;transform:scaleX(1.023);transform-origin:0 0;">01/05/2018</span>
</div>

</div>
</body>
</html>
